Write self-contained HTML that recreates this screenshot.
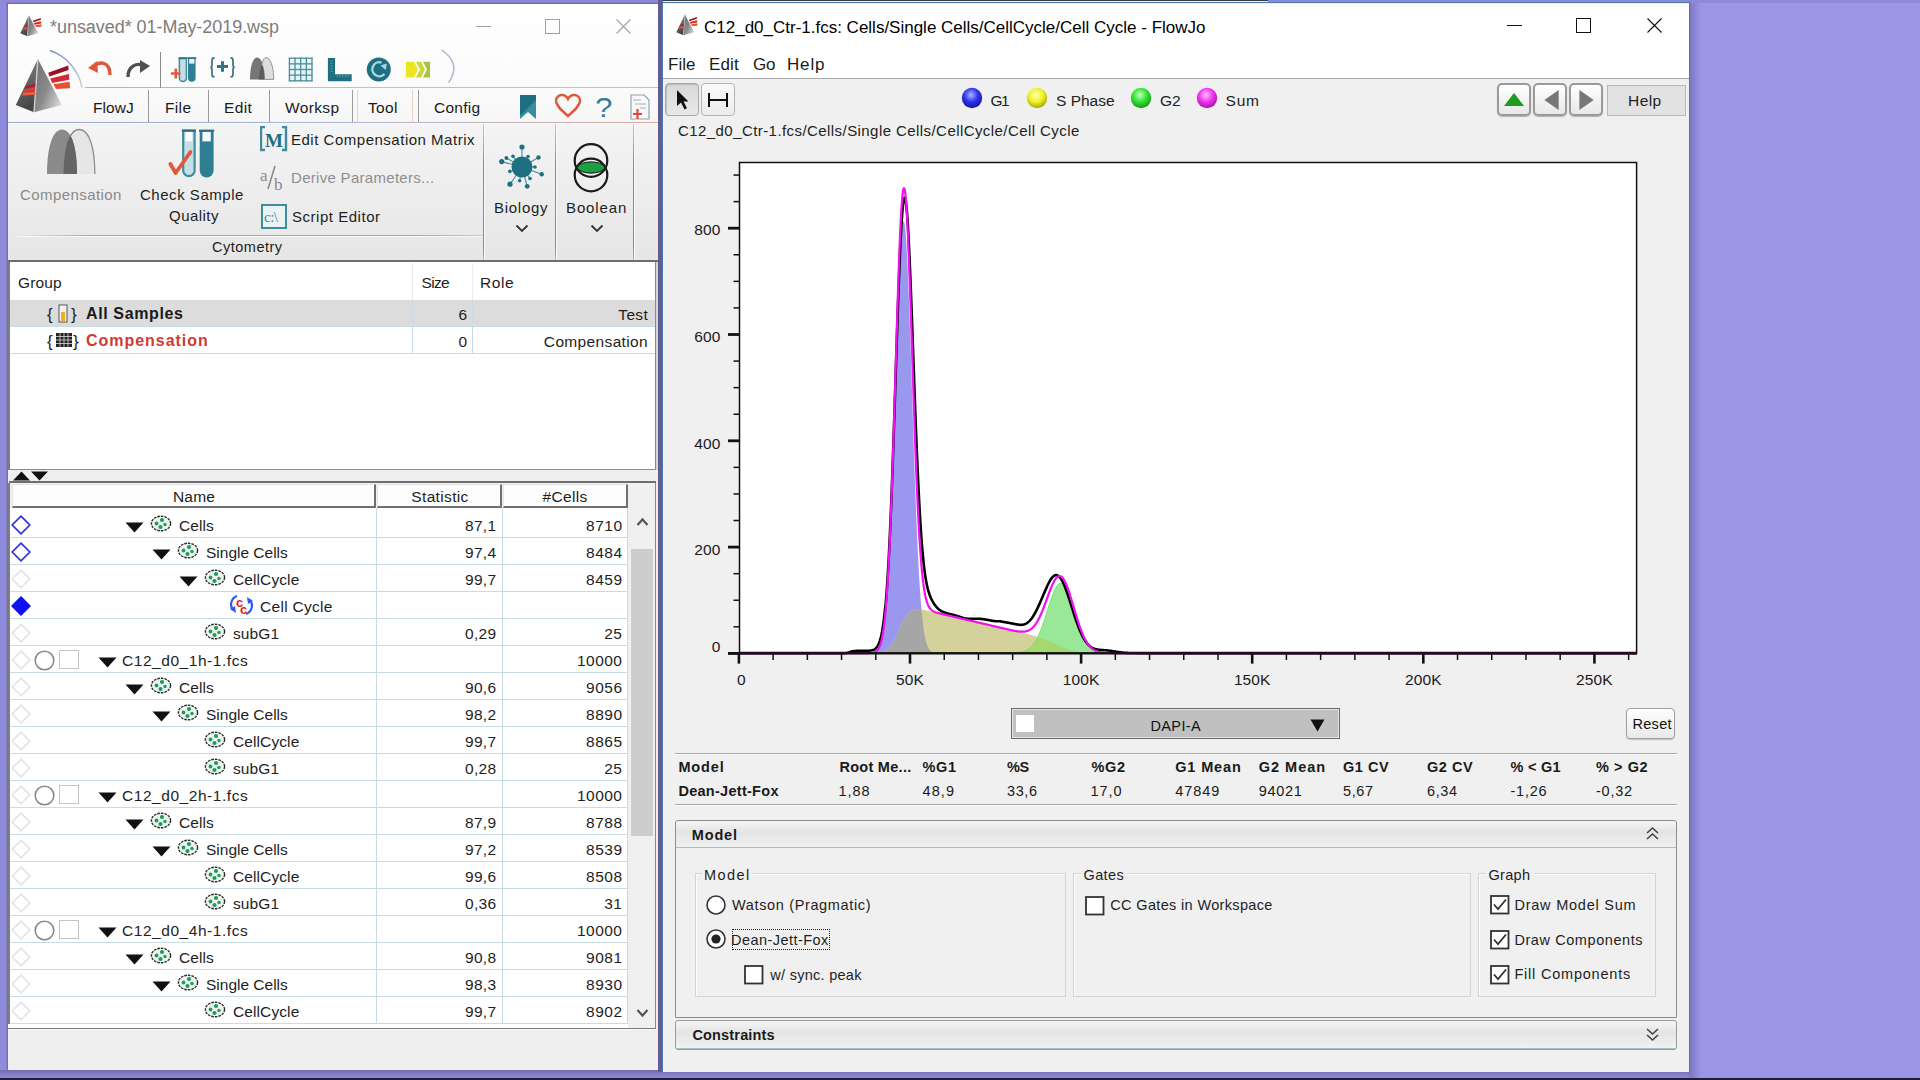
<!DOCTYPE html>
<html><head><meta charset="utf-8"><style>
html,body{margin:0;padding:0;}
body{width:1920px;height:1080px;overflow:hidden;position:relative;background:#9a95e5;font-family:"Liberation Sans", sans-serif;}
div,svg{position:absolute;box-sizing:border-box;}
.t{white-space:pre;}
</style></head><body>
<div style="left:0px;top:0px;width:1920px;height:1080px;background:#9a95e5;"></div><div style="left:0px;top:0px;width:700px;height:1080px;background:linear-gradient(90deg,#8f8bde,#8f8ad8);"></div><div style="left:0px;top:1070px;width:1700px;height:8px;background:linear-gradient(180deg,#746ab0,#8a82cc 70%,#8c86d4);"></div><div style="left:1689px;top:0px;width:12px;height:1078px;background:linear-gradient(90deg,#7b74c0,#9a95e5);"></div><div style="left:0px;top:1078px;width:1920px;height:2px;background:#1f1d3a;"></div><div style="left:0px;top:0px;width:1920px;height:3px;background:#8f88d4;"></div><div style="left:658px;top:0px;width:5px;height:1072px;background:#665a92;"></div><div style="left:6px;top:2px;width:2px;height:1068px;background:linear-gradient(90deg,#8a86d0,#6e6aa0);"></div><div style="left:6px;top:2px;width:652px;height:2px;background:linear-gradient(180deg,#8a86d0,#6e6aa0);"></div><div style="left:8px;top:4px;width:650px;height:1066px;background:#f0f0f0;"></div><div style="left:8px;top:4px;width:650px;height:84px;background:linear-gradient(180deg,#ffffff,#fbfbfb);"></div><svg style="left:19.8px;top:14.5px;" width="23" height="23" viewBox="0 0 23 23"><defs>
<linearGradient id="pl1" x1="0" y1="0" x2="0.3" y2="1"><stop offset="0" stop-color="#8a8a8a"/><stop offset="1" stop-color="#454545"/></linearGradient>
<linearGradient id="pr1" x1="0" y1="0" x2="1" y2="0.8"><stop offset="0" stop-color="#6e6e6e"/><stop offset="0.55" stop-color="#8a8a8a"/><stop offset="1" stop-color="#d8d8d8"/></linearGradient>
</defs><g transform="scale(0.39)">
<polygon points="22.9,1.1 0.8,47.1 19,54.2" fill="url(#pl1)"/>
<polygon points="22.9,1.1 19,54.2 46.8,47.1" fill="url(#pr1)"/>
<line x1="22.9" y1="1.1" x2="19" y2="54.2" stroke="#cfcfcf" stroke-width="1.4"/>
<polygon points="33.2,14.7 53.3,7.6 53.6,12.1 34.5,18.6" fill="#9a1420"/>
<polygon points="35.2,20.5 54,16 54.3,21.8 37.1,25" fill="#d42a34"/>
<polygon points="38.4,26.3 54.6,23.8 55,30.2 41,30.9" fill="#ea5030"/>
<polygon points="10.6,28.3 20.3,25.7 20.3,28.3 9.9,30.9" fill="#b01c28"/>
<polygon points="8.9,31.5 20.3,29.3 20.3,32.2 8.3,34.1" fill="#e03c3c"/>
<polygon points="7.6,34.8 20.3,33.5 20.3,36.7 7,37.4" fill="#ec5a40"/>
</g></svg><div class="t" style="top:18.26px;font-size:18px;line-height:18px;color:#7c7c7c;letter-spacing:-0.047px;left:50.00px;">*unsaved* 01-May-2019.wsp</div><div style="left:476px;top:26px;width:15px;height:1px;background:#a0a0a0;"></div><div style="left:545px;top:19px;width:15px;height:15px;border:1px solid #a0a0a0;"></div><svg style="left:616px;top:19px;" width="15" height="15" viewBox="0 0 15 15"><path d="M0.5 0.5 L14.5 14.5 M14.5 0.5 L0.5 14.5" stroke="#a0a0a0" stroke-width="1.1"/></svg><svg style="left:430px;top:45px;" width="40" height="45" viewBox="0 0 40 45"><path d="M11.7 4.8 Q32 19,18.6 37.5" fill="none" stroke="#b4bcd4" stroke-width="1.6"/></svg><div style="left:85px;top:87px;width:573px;height:1px;background:linear-gradient(90deg,#a8b4d0,#b8c0d8 40%,#d8b8b0);"></div><div style="left:160px;top:52px;width:1px;height:36px;background:#8a8a8a;"></div><svg style="left:86px;top:58px;" width="28" height="24" viewBox="0 0 28 24"><path d="M7 9 C14 2,24 4,24 17" fill="none" stroke="#e0583a" stroke-width="3.4"/><polygon points="2,10 11,3 12,15" fill="#e0583a"/></svg><svg style="left:124px;top:58px;" width="28" height="24" viewBox="0 0 28 24"><path d="M4 19 C4 8,13 4,20 8" fill="none" stroke="#505050" stroke-width="3.4"/><polygon points="26,8 16,2 16,15" fill="#505050"/></svg><svg style="left:165px;top:50px;" width="120" height="40" viewBox="0 0 120 40"><path d="M14.4 8.5 H21.4 V28 A3.5 3.5 0 0 1 14.4 28 Z" fill="#c4dde6" stroke="#3f8c9c" stroke-width="1.5"/>
<rect x="13.6" y="7.2" width="8.6" height="1.8" fill="#2f6f80"/>
<path d="M23 8.5 H30.6 V28 A3.8 3.8 0 0 1 23 28 Z" fill="#2f7f92"/>
<rect x="22.4" y="7.2" width="8.8" height="1.8" fill="#2f6f80"/>
<rect x="24.2" y="9" width="5.2" height="4.6" fill="#e6f4f6"/>
<path d="M6 23.5 H15.5 M10.8 18.5 V28.5" stroke="#e2583a" stroke-width="2.6"/>
<path d="M49.5 7.8 C47 7.8,47 9,47 12 V15.5 C47 17,46.2 17.2,45.4 17.3 C46.2 17.4,47 17.6,47 19 V23 C47 26,47 26.8,49.5 26.8" fill="none" stroke="#3a6e7c" stroke-width="1.7"/>
<path d="M65.5 7.8 C68 7.8,68 9,68 12 V15.5 C68 17,68.8 17.2,69.6 17.3 C68.8 17.4,68 17.6,68 19 V23 C68 26,68 26.8,65.5 26.8" fill="none" stroke="#3a6e7c" stroke-width="1.7"/>
<path d="M57.5 11.2 V21.8 M52 16.5 H63" stroke="#2a7888" stroke-width="3"/>
<path d="M85 29.4 C85 16,88 7.5,92.2 7.5 C96.5 7.5,99.5 16,99.4 29.4 Z" fill="#767676"/>
<path d="M96.9 14.5 C97.8 10,99.4 7.5,101 7.5 C105.5 7.5,108.6 17,108.8 29.4 L99.4 29.4 C99.4 22,98.4 17.5,96.9 14.5 Z" fill="#dedede" stroke="#8a8a8a" stroke-width="0.9"/>
<path d="M96.9 14.5 C98.4 17.5,99.4 22,99.4 29.4 L93.5 29.4 C94.5 22,95.5 17.5,96.9 14.5 Z" fill="#5c5c5c"/></svg><svg style="left:280px;top:50px;" width="160" height="40" viewBox="0 0 160 40"><rect x="9.4" y="8.2" width="22.6" height="22.6" fill="#e2f4f7"/><line x1="9.40" y1="7.6" x2="9.40" y2="31.4" stroke="#4f8e9a" stroke-width="1.3"/><line x1="8.8" y1="8.20" x2="32.6" y2="8.20" stroke="#4f8e9a" stroke-width="1.3"/><line x1="15.05" y1="7.6" x2="15.05" y2="31.4" stroke="#4f8e9a" stroke-width="1.3"/><line x1="8.8" y1="13.85" x2="32.6" y2="13.85" stroke="#4f8e9a" stroke-width="1.3"/><line x1="20.70" y1="7.6" x2="20.70" y2="31.4" stroke="#4f8e9a" stroke-width="1.3"/><line x1="8.8" y1="19.50" x2="32.6" y2="19.50" stroke="#4f8e9a" stroke-width="1.3"/><line x1="26.35" y1="7.6" x2="26.35" y2="31.4" stroke="#4f8e9a" stroke-width="1.3"/><line x1="8.8" y1="25.15" x2="32.6" y2="25.15" stroke="#4f8e9a" stroke-width="1.3"/><line x1="32.00" y1="7.6" x2="32.00" y2="31.4" stroke="#4f8e9a" stroke-width="1.3"/><line x1="8.8" y1="30.80" x2="32.6" y2="30.80" stroke="#4f8e9a" stroke-width="1.3"/><path d="M47.9 7.9 H55 V24.2 H71.7 V31.3 H47.9 Z" fill="#1f6f82"/><line x1="50.5" y1="11.0" x2="52.5" y2="11.0" stroke="#6fa8b6" stroke-width="0.8"/><line x1="57.0" y1="25.2" x2="57.0" y2="27.2" stroke="#6fa8b6" stroke-width="0.8"/><line x1="50.5" y1="13.6" x2="52.5" y2="13.6" stroke="#6fa8b6" stroke-width="0.8"/><line x1="59.8" y1="25.2" x2="59.8" y2="27.2" stroke="#6fa8b6" stroke-width="0.8"/><line x1="50.5" y1="16.2" x2="52.5" y2="16.2" stroke="#6fa8b6" stroke-width="0.8"/><line x1="62.6" y1="25.2" x2="62.6" y2="27.2" stroke="#6fa8b6" stroke-width="0.8"/><line x1="50.5" y1="18.8" x2="52.5" y2="18.8" stroke="#6fa8b6" stroke-width="0.8"/><line x1="65.4" y1="25.2" x2="65.4" y2="27.2" stroke="#6fa8b6" stroke-width="0.8"/><line x1="50.5" y1="21.4" x2="52.5" y2="21.4" stroke="#6fa8b6" stroke-width="0.8"/><line x1="68.2" y1="25.2" x2="68.2" y2="27.2" stroke="#6fa8b6" stroke-width="0.8"/><circle cx="98.8" cy="19.4" r="12" fill="#1f6f82"/><path d="M101.5 12.6 A7 7 0 1 0 104.5 24" fill="none" stroke="#a8d8e2" stroke-width="2.4"/><polygon points="100.5,15.5 106.8,13.5 105.8,20" fill="#a8d8e2"/><polygon points="125.8,11.7 134,11.7 138,19.6 134,27.5 125.8,27.5" fill="#ece620"/><polygon points="136,11.7 141,11.7 145,19.6 141,27.5 136,27.5 140,19.6" fill="#c8d838"/><polygon points="143,11.7 150,11.7 150,27.5 143,27.5 147,19.6" fill="#a4c43a"/></svg><div style="left:8px;top:88px;width:650px;height:35px;background:linear-gradient(180deg,#fbfbfb,#f6f6f6);"></div><div style="left:8px;top:122px;width:650px;height:1px;background:linear-gradient(90deg,#9aaad0,#a8b4d4 50%,#d8aaa0);"></div><div style="left:148px;top:90px;width:1px;height:32px;background:#9a9a9a;"></div><div style="left:208px;top:90px;width:1px;height:32px;background:#9a9a9a;"></div><div style="left:269px;top:90px;width:1px;height:32px;background:#9a9a9a;"></div><div style="left:352px;top:90px;width:1px;height:32px;background:#9a9a9a;"></div><div style="left:357px;top:90px;width:1px;height:32px;background:#e8d0c8;"></div><div style="left:412px;top:90px;width:1px;height:32px;background:#e8d0c8;"></div><div style="left:418px;top:90px;width:1px;height:32px;background:#9a9a9a;"></div><div class="t" style="top:99.88px;font-size:15.5px;line-height:15.5px;color:#1a1a1a;letter-spacing:0.069px;left:93.00px;">FlowJ</div><div class="t" style="top:99.88px;font-size:15.5px;line-height:15.5px;color:#1a1a1a;letter-spacing:0.35px;left:165.00px;">File</div><div class="t" style="top:99.88px;font-size:15.5px;line-height:15.5px;color:#1a1a1a;letter-spacing:0.35px;left:224.00px;">Edit</div><div class="t" style="top:99.88px;font-size:15.5px;line-height:15.5px;color:#1a1a1a;letter-spacing:0.35px;left:285.00px;">Worksp</div><div class="t" style="top:99.88px;font-size:15.5px;line-height:15.5px;color:#1a1a1a;letter-spacing:0.35px;left:368.00px;">Tool</div><div class="t" style="top:99.88px;font-size:15.5px;line-height:15.5px;color:#1a1a1a;letter-spacing:0.263px;left:434.00px;">Config</div><svg style="left:519px;top:94px;" width="18" height="26" viewBox="0 0 18 26"><path d="M1 1 H17 V25 L9 18 L1 25 Z" fill="#3a8e9c"/><path d="M1 1 H17 V6 L1 22 Z" fill="#1f6f82"/></svg><svg style="left:554px;top:93px;" width="28" height="26" viewBox="0 0 28 26"><path d="M14 23 C6 16,2 12,2 8 C2 4,5 2,8 2 C11 2,13 4,14 6 C15 4,17 2,20 2 C23 2,26 4,26 8 C26 12,22 16,14 23 Z" fill="none" stroke="#e0583a" stroke-width="2.4"/></svg><div class="t" style="top:94.30px;font-size:28px;line-height:28px;color:#2f7f92;left:596.00px;transform:scaleX(1.1);">?</div><svg style="left:629px;top:94px;" width="22" height="27" viewBox="0 0 22 27"><path d="M2 1 H15 L20 6 V25 H2 Z" fill="#f8f8f8" stroke="#8aa8b0" stroke-width="1.2"/><path d="M4 6 H12 M6 10 H17 M11 14 H17" stroke="#a0b4b8" stroke-width="1"/><path d="M4 20 H13 M8.5 15 V25" stroke="#e0483a" stroke-width="2.2"/></svg><svg style="left:0px;top:40px;" width="100" height="60" viewBox="0 0 100 60"><defs><linearGradient id="arcg" x1="0" y1="0" x2="1" y2="1"><stop offset="0" stop-color="#7888b8"/><stop offset="1" stop-color="#c8d0e4"/></linearGradient></defs><path d="M50 10.6 A48.2 48.2 0 0 1 82 47.5" fill="none" stroke="url(#arcg)" stroke-width="1.6"/></svg><svg style="left:15px;top:58px;" width="58" height="58" viewBox="0 0 58 58"><defs>
<linearGradient id="pl2" x1="0" y1="0" x2="0.3" y2="1"><stop offset="0" stop-color="#8a8a8a"/><stop offset="1" stop-color="#454545"/></linearGradient>
<linearGradient id="pr2" x1="0" y1="0" x2="1" y2="0.8"><stop offset="0" stop-color="#6e6e6e"/><stop offset="0.55" stop-color="#8a8a8a"/><stop offset="1" stop-color="#d8d8d8"/></linearGradient>
</defs><g transform="scale(1.0)">
<polygon points="22.9,1.1 0.8,47.1 19,54.2" fill="url(#pl2)"/>
<polygon points="22.9,1.1 19,54.2 46.8,47.1" fill="url(#pr2)"/>
<line x1="22.9" y1="1.1" x2="19" y2="54.2" stroke="#cfcfcf" stroke-width="1.4"/>
<polygon points="33.2,14.7 53.3,7.6 53.6,12.1 34.5,18.6" fill="#9a1420"/>
<polygon points="35.2,20.5 54,16 54.3,21.8 37.1,25" fill="#d42a34"/>
<polygon points="38.4,26.3 54.6,23.8 55,30.2 41,30.9" fill="#ea5030"/>
<polygon points="10.6,28.3 20.3,25.7 20.3,28.3 9.9,30.9" fill="#b01c28"/>
<polygon points="8.9,31.5 20.3,29.3 20.3,32.2 8.3,34.1" fill="#e03c3c"/>
<polygon points="7.6,34.8 20.3,33.5 20.3,36.7 7,37.4" fill="#ec5a40"/>
</g></svg><div style="left:8px;top:123px;width:650px;height:137px;background:linear-gradient(180deg,#f4f4f4 0%,#ececec 60%,#e6e6e6 100%);"></div><div style="left:8px;top:123px;width:650px;height:1px;background:#ffffff;"></div><div style="left:18px;top:235px;width:465px;height:1px;background:linear-gradient(90deg,rgba(160,160,170,0),#a8a8b4 15%,#a8a8b4 85%,#c8c8d0);"></div><div style="left:18px;top:236px;width:465px;height:1px;background:#f8f8f8;"></div><div style="left:483px;top:124px;width:1px;height:136px;background:linear-gradient(180deg,#c8c8c8,#8a8a8a 30%,#8a8a8a 90%,#b0b0b0);"></div><div style="left:484px;top:124px;width:1px;height:136px;background:#fafafa;"></div><div style="left:555px;top:124px;width:1px;height:136px;background:linear-gradient(180deg,#c8c8c8,#8a8a8a 30%,#8a8a8a 90%,#b0b0b0);"></div><div style="left:556px;top:124px;width:1px;height:136px;background:#fafafa;"></div><div style="left:633px;top:124px;width:1px;height:136px;background:linear-gradient(180deg,#c8c8c8,#8a8a8a 30%,#8a8a8a 90%,#b0b0b0);"></div><div style="left:634px;top:124px;width:1px;height:136px;background:#fafafa;"></div><div style="left:8px;top:260px;width:650px;height:2px;background:#6e6e6e;"></div><svg style="left:44px;top:127px;" width="54" height="50" viewBox="0 0 54 50"><defs><clipPath id="cpl"><path d="M3 47 C3 22,8 2.5,18 2.5 C28 2.5,33 22,33 47 Z"/></clipPath></defs>
<path d="M19.6 47 C19.6 22,24.6 2.5,35.2 2.5 C45.8 2.5,50.8 22,50.8 47 Z" fill="#e6e6e6"/><path d="M19.6 47 C19.6 22,24.6 2.5,35.2 2.5 C45.8 2.5,50.8 22,50.8 47" fill="none" stroke="#8c8c8c" stroke-width="1.3"/>
<path d="M3 47 C3 22,8 2.5,18 2.5 C28 2.5,33 22,33 47 Z" fill="#8a8a8a"/>
<path d="M19.6 47 C19.6 22,24.6 2.5,35.2 2.5 C45.8 2.5,50.8 22,50.8 47 Z" fill="#646464" clip-path="url(#cpl)"/></svg><div class="t" style="top:187.30px;font-size:15px;line-height:15px;color:#8a8a8a;letter-spacing:0.42px;left:20.00px;">Compensation</div><svg style="left:166px;top:126px;" width="52" height="54" viewBox="0 0 52 54"><path d="M17.2 4.6 H28.6 V44.5 A5.7 5.7 0 0 1 17.2 44.5 Z" fill="#c6dfe6" stroke="#3f8c9c" stroke-width="2.2"/>
<rect x="19.5" y="5.5" width="6.8" height="9.8" fill="#ffffff"/>
<rect x="15.8" y="3.6" width="14.2" height="2.2" fill="#2f6f80"/>
<path d="M33.7 4.6 H47.6 V44.5 A6.95 6.95 0 0 1 33.7 44.5 Z" fill="#2f7f92"/>
<rect x="36.4" y="5.6" width="8.4" height="9.8" fill="#f4fafb"/>
<rect x="33" y="3.6" width="15.2" height="2.2" fill="#2f6f80"/>
<path d="M4.4 38 L9.6 47 L24.5 26" fill="none" stroke="#e0583a" stroke-width="3.8" stroke-linecap="round" stroke-linejoin="round"/></svg><div class="t" style="top:187.30px;font-size:15px;line-height:15px;color:#1e1e1e;letter-spacing:0.527px;left:140.00px;">Check Sample</div><div class="t" style="top:208.30px;font-size:15px;line-height:15px;color:#1e1e1e;letter-spacing:0.469px;left:169.00px;">Quality</div><svg style="left:260px;top:126px;" width="28" height="26" viewBox="0 0 28 26"><path d="M5 1 H1 V24 H5" fill="none" stroke="#3f8c9c" stroke-width="2.4"/><path d="M22 1 H26 V24 H22" fill="none" stroke="#3f8c9c" stroke-width="2.4"/></svg><div class="t" style="top:130.92px;font-size:19px;line-height:19px;color:#1f6f82;font-weight:700;left:265.00px;font-family:'Liberation Serif',serif;">M</div><div class="t" style="top:166.61px;font-size:17px;line-height:17px;color:#8a8a8a;left:260.00px;font-family:'Liberation Serif',serif;">a</div><svg style="left:265px;top:164px;" width="14" height="28" viewBox="0 0 14 28"><line x1="10" y1="2" x2="3" y2="25" stroke="#8a8a8a" stroke-width="1.6"/></svg><div class="t" style="top:175.61px;font-size:17px;line-height:17px;color:#8a8a8a;left:274.00px;font-family:'Liberation Serif',serif;">b</div><div style="left:261px;top:204px;width:26px;height:25px;border:2px solid #3f8c9c;background:#eaf2f3;"></div><div class="t" style="top:210.30px;font-size:15px;line-height:15px;color:#3f8c9c;letter-spacing:-0.5px;left:264.00px;font-family:'Liberation Serif',serif;">c:\</div><div class="t" style="top:132.30px;font-size:15px;line-height:15px;color:#1e1e1e;letter-spacing:0.511px;left:291.00px;">Edit Compensation Matrix</div><div class="t" style="top:170.30px;font-size:15px;line-height:15px;color:#8e8e8e;letter-spacing:0.296px;left:291.00px;">Derive Parameters...</div><div class="t" style="top:209.30px;font-size:15px;line-height:15px;color:#1e1e1e;letter-spacing:0.525px;left:292.00px;">Script Editor</div><div class="t" style="top:240.13px;font-size:14.5px;line-height:14.5px;color:#1e1e1e;letter-spacing:0.498px;left:212.00px;">Cytometry</div><svg style="left:497px;top:143px;" width="50" height="50" viewBox="0 0 50 50"><line x1="25" y1="24" x2="25.0" y2="4.0" stroke="#3f8c9c" stroke-width="1.1"/><circle cx="25.0" cy="4.0" r="2.6" fill="#1f6f82"/><line x1="25" y1="24" x2="31.0" y2="13.6" stroke="#3f8c9c" stroke-width="1.1"/><circle cx="31.0" cy="13.6" r="1.8" fill="#1f6f82"/><line x1="25" y1="24" x2="41.5" y2="14.5" stroke="#3f8c9c" stroke-width="1.1"/><circle cx="41.5" cy="14.5" r="2.2" fill="#1f6f82"/><line x1="25" y1="24" x2="38.0" y2="24.0" stroke="#3f8c9c" stroke-width="1.1"/><circle cx="38.0" cy="24.0" r="1.8" fill="#1f6f82"/><line x1="25" y1="24" x2="44.7" y2="31.2" stroke="#3f8c9c" stroke-width="1.1"/><circle cx="44.7" cy="31.2" r="2.2" fill="#1f6f82"/><line x1="25" y1="24" x2="33.0" y2="35.5" stroke="#3f8c9c" stroke-width="1.1"/><circle cx="33.0" cy="35.5" r="1.8" fill="#1f6f82"/><line x1="25" y1="24" x2="30.2" y2="43.3" stroke="#3f8c9c" stroke-width="1.1"/><circle cx="30.2" cy="43.3" r="2.4" fill="#1f6f82"/><line x1="25" y1="24" x2="22.6" y2="37.8" stroke="#3f8c9c" stroke-width="1.1"/><circle cx="22.6" cy="37.8" r="1.8" fill="#1f6f82"/><line x1="25" y1="24" x2="13.0" y2="41.2" stroke="#3f8c9c" stroke-width="1.1"/><circle cx="13.0" cy="41.2" r="2.6" fill="#1f6f82"/><line x1="25" y1="24" x2="12.8" y2="28.4" stroke="#3f8c9c" stroke-width="1.1"/><circle cx="12.8" cy="28.4" r="1.8" fill="#1f6f82"/><line x1="25" y1="24" x2="4.7" y2="18.6" stroke="#3f8c9c" stroke-width="1.1"/><circle cx="4.7" cy="18.6" r="2.6" fill="#1f6f82"/><line x1="25" y1="24" x2="16.0" y2="13.3" stroke="#3f8c9c" stroke-width="1.1"/><circle cx="16.0" cy="13.3" r="1.8" fill="#1f6f82"/><line x1="25" y1="24" x2="9.4" y2="15.0" stroke="#3f8c9c" stroke-width="1.1"/><circle cx="9.4" cy="15.0" r="2.0" fill="#1f6f82"/><circle cx="25" cy="24" r="10.5" fill="#1f6f82"/></svg><div class="t" style="top:200.30px;font-size:15px;line-height:15px;color:#1e1e1e;letter-spacing:0.717px;left:494.00px;">Biology</div><svg style="left:515px;top:224px;" width="14" height="9" viewBox="0 0 14 9"><path d="M1.5 1.5 L7 7 L12.5 1.5" fill="none" stroke="#333" stroke-width="1.8"/></svg><svg style="left:571px;top:141px;" width="40" height="55" viewBox="0 0 40 55"><path d="M5 26.5 C11 19,29 19,35 26.5 C29 34,11 34,5 26.5 Z" fill="#1aa040" stroke="#111" stroke-width="1"/>
<circle cx="20" cy="19.5" r="16.3" fill="none" stroke="#1a1a1a" stroke-width="2.2"/>
<circle cx="20" cy="34" r="16.3" fill="none" stroke="#1a1a1a" stroke-width="2.2"/></svg><div class="t" style="top:200.30px;font-size:15px;line-height:15px;color:#1e1e1e;letter-spacing:0.882px;left:566.00px;">Boolean</div><svg style="left:590px;top:224px;" width="14" height="9" viewBox="0 0 14 9"><path d="M1.5 1.5 L7 7 L12.5 1.5" fill="none" stroke="#333" stroke-width="1.8"/></svg><div style="left:8px;top:262px;width:650px;height:208px;background:#f0f0f0;"></div><div style="left:8px;top:262px;width:648px;height:208px;background:#ffffff;border-left:2px solid #7c7c7c;border-right:1px solid #8a8a8a;border-bottom:1px solid #8a8a8a;"></div><div style="left:656px;top:262px;width:2px;height:208px;background:#d0d6d6;"></div><div style="left:412px;top:263px;width:1px;height:37px;background:#ececec;"></div><div style="left:472px;top:263px;width:1px;height:37px;background:#ececec;"></div><div class="t" style="top:274.88px;font-size:15.5px;line-height:15.5px;color:#1e1e1e;letter-spacing:0.135px;left:18.00px;">Group</div><div class="t" style="top:274.88px;font-size:15.5px;line-height:15.5px;color:#1e1e1e;letter-spacing:-0.677px;left:421.50px;">Size</div><div class="t" style="top:274.88px;font-size:15.5px;line-height:15.5px;color:#1e1e1e;letter-spacing:0.581px;left:480.00px;">Role</div><div style="left:10px;top:300px;width:645px;height:27px;background:#dcdcdc;"></div><div style="left:10px;top:326px;width:645px;height:1px;background:#c8dce6;"></div><div style="left:10px;top:353px;width:645px;height:1px;background:#c8dce6;"></div><div style="left:412px;top:300px;width:1px;height:54px;background:#c8dce6;"></div><div style="left:472px;top:300px;width:1px;height:54px;background:#c8dce6;"></div><div class="t" style="top:305.61px;font-size:17px;line-height:17px;color:#1e1e1e;left:47.00px;">{</div><div class="t" style="top:305.61px;font-size:17px;line-height:17px;color:#1e1e1e;left:71.00px;">}</div><svg style="left:57px;top:304px;" width="12" height="19" viewBox="0 0 12 19"><rect x="2" y="1" width="8" height="17" fill="#f4f4f4" stroke="#555" stroke-width="1"/><rect x="4" y="8" width="4" height="9" fill="#f0b020"/></svg><div class="t" style="top:332.61px;font-size:17px;line-height:17px;color:#1e1e1e;left:47.00px;">{</div><div class="t" style="top:332.61px;font-size:17px;line-height:17px;color:#1e1e1e;left:73.00px;">}</div><svg style="left:55px;top:332px;" width="18" height="16" viewBox="0 0 18 16"><rect x="1" y="1" width="16" height="14" fill="#222"/><line x1="5" y1="1" x2="5" y2="15" stroke="#ddd" stroke-width="0.8"/><line x1="9" y1="1" x2="9" y2="15" stroke="#ddd" stroke-width="0.8"/><line x1="13" y1="1" x2="13" y2="15" stroke="#ddd" stroke-width="0.8"/><line x1="1" y1="4.5" x2="17" y2="4.5" stroke="#ddd" stroke-width="0.8"/><line x1="1" y1="8.0" x2="17" y2="8.0" stroke="#ddd" stroke-width="0.8"/><line x1="1" y1="11.5" x2="17" y2="11.5" stroke="#ddd" stroke-width="0.8"/></svg><div class="t" style="top:306.46px;font-size:16px;line-height:16px;color:#1a1a1a;font-weight:700;letter-spacing:0.62px;left:86.00px;">All Samples</div><div class="t" style="top:333.46px;font-size:16px;line-height:16px;color:#d03a32;font-weight:700;letter-spacing:0.969px;left:86.00px;">Compensation</div><div class="t" style="top:306.88px;font-size:15.5px;line-height:15.5px;color:#1e1e1e;right:1453.00px;">6</div><div class="t" style="top:306.88px;font-size:15.5px;line-height:15.5px;color:#1e1e1e;letter-spacing:0.3px;right:1272.00px;">Test</div><div class="t" style="top:333.88px;font-size:15.5px;line-height:15.5px;color:#1e1e1e;right:1453.00px;">0</div><div class="t" style="top:333.88px;font-size:15.5px;line-height:15.5px;color:#1e1e1e;letter-spacing:0.35px;right:1272.00px;">Compensation</div><div style="left:9px;top:470px;width:647px;height:12px;background:#efefef;"></div><svg style="left:12px;top:470px;" width="38" height="12" viewBox="0 0 38 12"><polygon points="1,10.5 9.5,1.5 18,10.5" fill="#111"/><polygon points="19,1.5 36,1.5 27.5,10.5" fill="#111"/></svg><div style="left:9px;top:481px;width:647px;height:2px;background:#6e6e6e;"></div><div style="left:8px;top:483px;width:648px;height:547px;background:#ffffff;border-left:2px solid #7c7c7c;"></div><div style="left:10px;top:483px;width:618px;height:25px;background:#f0f0f0;"></div><div style="left:12px;top:484px;width:364px;height:24px;background:#fdfdfd;border-top:1px solid #e4e4e4;border-left:1px solid #e4e4e4;border-right:2px solid #707070;border-bottom:2px solid #707070;"></div><div style="left:377px;top:484px;width:125px;height:24px;background:#fdfdfd;border-top:1px solid #e4e4e4;border-left:1px solid #e4e4e4;border-right:2px solid #707070;border-bottom:2px solid #707070;"></div><div style="left:503px;top:484px;width:125px;height:24px;background:#fdfdfd;border-top:1px solid #e4e4e4;border-left:1px solid #e4e4e4;border-right:2px solid #707070;border-bottom:2px solid #707070;"></div><div class="t" style="top:489.38px;font-size:15.5px;line-height:15.5px;color:#1e1e1e;letter-spacing:0.2px;left:94.00px;width:200px;text-align:center;">Name</div><div class="t" style="top:489.38px;font-size:15.5px;line-height:15.5px;color:#1e1e1e;letter-spacing:0.35px;left:340.00px;width:200px;text-align:center;">Statistic</div><div class="t" style="top:489.38px;font-size:15.5px;line-height:15.5px;color:#1e1e1e;letter-spacing:0.35px;left:465.00px;width:200px;text-align:center;">#Cells</div><div style="left:628px;top:483px;width:28px;height:547px;background:#f0f0f0;border-right:1px solid #8a8a8a;"></div><div style="left:631px;top:548.5px;width:22px;height:287.5px;background:#cdcdcd;"></div><svg style="left:636px;top:517px;" width="13" height="10" viewBox="0 0 13 10"><path d="M1.5 8 L6.5 2.5 L11.5 8" fill="none" stroke="#555" stroke-width="2.2"/></svg><svg style="left:636px;top:1008px;" width="13" height="10" viewBox="0 0 13 10"><path d="M1.5 2 L6.5 7.5 L11.5 2" fill="none" stroke="#555" stroke-width="2.2"/></svg><div style="left:10px;top:537px;width:618px;height:1px;background:#c8dce6;"></div><svg style="left:10.5px;top:514.5px;" width="20" height="20" viewBox="0 0 20 20"><polygon points="10,1.2 18.8,10 10,18.8 1.2,10" fill="none" stroke="#3030e8" stroke-width="1.7"/></svg><svg style="left:125px;top:521.5px;" width="19" height="11" viewBox="0 0 19 11"><polygon points="0.5,0.5 18.5,0.5 9.5,10.5" fill="#111"/></svg><svg style="left:150px;top:514.5px;" width="22" height="17" viewBox="0 0 22 17"><ellipse cx="11" cy="8.5" rx="9.6" ry="7.3" fill="#eef6f0" stroke="#2a2a2a" stroke-width="1.4" stroke-dasharray="2.6 1"/>
<circle cx="6.5" cy="8.5" r="1.9" fill="#1f9a5a"/><circle cx="12" cy="5" r="2.1" fill="#1f9a5a"/><circle cx="15" cy="9.5" r="1.7" fill="#1f9a5a"/><circle cx="10.5" cy="12" r="2.1" fill="#1f9a5a"/></svg><div class="t" style="top:517.88px;font-size:15.5px;line-height:15.5px;color:#1e1e1e;letter-spacing:0.1px;left:179.00px;">Cells</div><div class="t" style="top:517.88px;font-size:15.5px;line-height:15.5px;color:#1e1e1e;letter-spacing:0.35px;right:1423.50px;">87,1</div><div class="t" style="top:517.88px;font-size:15.5px;line-height:15.5px;color:#1e1e1e;letter-spacing:0.5px;right:1297.50px;">8710</div><div style="left:10px;top:564px;width:618px;height:1px;background:#c8dce6;"></div><svg style="left:10.5px;top:541.5px;" width="20" height="20" viewBox="0 0 20 20"><polygon points="10,1.2 18.8,10 10,18.8 1.2,10" fill="none" stroke="#3030e8" stroke-width="1.7"/></svg><svg style="left:152px;top:548.5px;" width="19" height="11" viewBox="0 0 19 11"><polygon points="0.5,0.5 18.5,0.5 9.5,10.5" fill="#111"/></svg><svg style="left:177px;top:541.5px;" width="22" height="17" viewBox="0 0 22 17"><ellipse cx="11" cy="8.5" rx="9.6" ry="7.3" fill="#eef6f0" stroke="#2a2a2a" stroke-width="1.4" stroke-dasharray="2.6 1"/>
<circle cx="6.5" cy="8.5" r="1.9" fill="#1f9a5a"/><circle cx="12" cy="5" r="2.1" fill="#1f9a5a"/><circle cx="15" cy="9.5" r="1.7" fill="#1f9a5a"/><circle cx="10.5" cy="12" r="2.1" fill="#1f9a5a"/></svg><div class="t" style="top:544.88px;font-size:15.5px;line-height:15.5px;color:#1e1e1e;letter-spacing:-0.009px;left:206.00px;">Single Cells</div><div class="t" style="top:544.88px;font-size:15.5px;line-height:15.5px;color:#1e1e1e;letter-spacing:0.35px;right:1423.50px;">97,4</div><div class="t" style="top:544.88px;font-size:15.5px;line-height:15.5px;color:#1e1e1e;letter-spacing:0.5px;right:1297.50px;">8484</div><div style="left:10px;top:591px;width:618px;height:1px;background:#c8dce6;"></div><svg style="left:10.5px;top:568.5px;" width="20" height="20" viewBox="0 0 20 20"><polygon points="10,1.2 18.8,10 10,18.8 1.2,10" fill="none" stroke="#e4e4e4" stroke-width="1.7"/></svg><svg style="left:179px;top:575.5px;" width="19" height="11" viewBox="0 0 19 11"><polygon points="0.5,0.5 18.5,0.5 9.5,10.5" fill="#111"/></svg><svg style="left:204px;top:568.5px;" width="22" height="17" viewBox="0 0 22 17"><ellipse cx="11" cy="8.5" rx="9.6" ry="7.3" fill="#eef6f0" stroke="#2a2a2a" stroke-width="1.4" stroke-dasharray="2.6 1"/>
<circle cx="6.5" cy="8.5" r="1.9" fill="#1f9a5a"/><circle cx="12" cy="5" r="2.1" fill="#1f9a5a"/><circle cx="15" cy="9.5" r="1.7" fill="#1f9a5a"/><circle cx="10.5" cy="12" r="2.1" fill="#1f9a5a"/></svg><div class="t" style="top:571.88px;font-size:15.5px;line-height:15.5px;color:#1e1e1e;letter-spacing:0.1px;left:233.00px;">CellCycle</div><div class="t" style="top:571.88px;font-size:15.5px;line-height:15.5px;color:#1e1e1e;letter-spacing:0.35px;right:1423.50px;">99,7</div><div class="t" style="top:571.88px;font-size:15.5px;line-height:15.5px;color:#1e1e1e;letter-spacing:0.5px;right:1297.50px;">8459</div><div style="left:10px;top:618px;width:618px;height:1px;background:#c8dce6;"></div><svg style="left:10.5px;top:595.5px;" width="20" height="20" viewBox="0 0 20 20"><polygon points="10,1.2 18.8,10 10,18.8 1.2,10" fill="#1010f0" stroke="#1010f0" stroke-width="1.7"/></svg><svg style="left:229.0px;top:592.5px;" width="26" height="24" viewBox="0 0 26 24"><path d="M8 3 A9 9 0 0 0 4 17" fill="none" stroke="#2a5af0" stroke-width="2.2"/><polygon points="1,16 7,20 6,13" fill="#2a5af0"/>
<path d="M17 21 A9 9 0 0 0 21 7" fill="none" stroke="#2a5af0" stroke-width="2.2"/><polygon points="24,8 18,4 19,11" fill="#2a5af0"/></svg><div class="t" style="top:595.50px;font-size:13px;line-height:13px;color:#e02020;font-weight:700;left:236.00px;">c</div><div class="t" style="top:602.50px;font-size:13px;line-height:13px;color:#e02020;font-weight:700;left:240.00px;">c</div><div class="t" style="top:598.88px;font-size:15.5px;line-height:15.5px;color:#1e1e1e;letter-spacing:0.3px;left:260.00px;">Cell Cycle</div><div style="left:10px;top:645px;width:618px;height:1px;background:#c8dce6;"></div><svg style="left:10.5px;top:622.5px;" width="20" height="20" viewBox="0 0 20 20"><polygon points="10,1.2 18.8,10 10,18.8 1.2,10" fill="none" stroke="#e4e4e4" stroke-width="1.7"/></svg><svg style="left:204px;top:622.5px;" width="22" height="17" viewBox="0 0 22 17"><ellipse cx="11" cy="8.5" rx="9.6" ry="7.3" fill="#eef6f0" stroke="#2a2a2a" stroke-width="1.4" stroke-dasharray="2.6 1"/>
<circle cx="6.5" cy="8.5" r="1.9" fill="#1f9a5a"/><circle cx="12" cy="5" r="2.1" fill="#1f9a5a"/><circle cx="15" cy="9.5" r="1.7" fill="#1f9a5a"/><circle cx="10.5" cy="12" r="2.1" fill="#1f9a5a"/></svg><div class="t" style="top:625.88px;font-size:15.5px;line-height:15.5px;color:#1e1e1e;letter-spacing:0.1px;left:233.00px;">subG1</div><div class="t" style="top:625.88px;font-size:15.5px;line-height:15.5px;color:#1e1e1e;letter-spacing:0.35px;right:1423.50px;">0,29</div><div class="t" style="top:625.88px;font-size:15.5px;line-height:15.5px;color:#1e1e1e;letter-spacing:0.5px;right:1297.50px;">25</div><div style="left:10px;top:672px;width:618px;height:1px;background:#c8dce6;"></div><svg style="left:10.5px;top:649.5px;" width="20" height="20" viewBox="0 0 20 20"><polygon points="10,1.2 18.8,10 10,18.8 1.2,10" fill="none" stroke="#e4e4e4" stroke-width="1.7"/></svg><svg style="left:34px;top:649.5px;" width="21" height="21" viewBox="0 0 21 21"><circle cx="10.5" cy="10.5" r="9.3" fill="#fff" stroke="#8a8a8a" stroke-width="1.6"/></svg><div style="left:59px;top:650px;width:20px;height:19px;border:1.5px solid #c4c4c4;"></div><div class="t" style="top:652.88px;font-size:15.5px;line-height:15.5px;color:#1e1e1e;letter-spacing:0.55px;left:122.00px;">C12_d0_1h-1.fcs</div><svg style="left:98px;top:656.5px;" width="19" height="11" viewBox="0 0 19 11"><polygon points="0.5,0.5 18.5,0.5 9.5,10.5" fill="#111"/></svg><div class="t" style="top:652.88px;font-size:15.5px;line-height:15.5px;color:#1e1e1e;letter-spacing:0.5px;right:1297.50px;">10000</div><div style="left:10px;top:699px;width:618px;height:1px;background:#c8dce6;"></div><svg style="left:10.5px;top:676.5px;" width="20" height="20" viewBox="0 0 20 20"><polygon points="10,1.2 18.8,10 10,18.8 1.2,10" fill="none" stroke="#e4e4e4" stroke-width="1.7"/></svg><svg style="left:125px;top:683.5px;" width="19" height="11" viewBox="0 0 19 11"><polygon points="0.5,0.5 18.5,0.5 9.5,10.5" fill="#111"/></svg><svg style="left:150px;top:676.5px;" width="22" height="17" viewBox="0 0 22 17"><ellipse cx="11" cy="8.5" rx="9.6" ry="7.3" fill="#eef6f0" stroke="#2a2a2a" stroke-width="1.4" stroke-dasharray="2.6 1"/>
<circle cx="6.5" cy="8.5" r="1.9" fill="#1f9a5a"/><circle cx="12" cy="5" r="2.1" fill="#1f9a5a"/><circle cx="15" cy="9.5" r="1.7" fill="#1f9a5a"/><circle cx="10.5" cy="12" r="2.1" fill="#1f9a5a"/></svg><div class="t" style="top:679.88px;font-size:15.5px;line-height:15.5px;color:#1e1e1e;letter-spacing:0.1px;left:179.00px;">Cells</div><div class="t" style="top:679.88px;font-size:15.5px;line-height:15.5px;color:#1e1e1e;letter-spacing:0.35px;right:1423.50px;">90,6</div><div class="t" style="top:679.88px;font-size:15.5px;line-height:15.5px;color:#1e1e1e;letter-spacing:0.5px;right:1297.50px;">9056</div><div style="left:10px;top:726px;width:618px;height:1px;background:#c8dce6;"></div><svg style="left:10.5px;top:703.5px;" width="20" height="20" viewBox="0 0 20 20"><polygon points="10,1.2 18.8,10 10,18.8 1.2,10" fill="none" stroke="#e4e4e4" stroke-width="1.7"/></svg><svg style="left:152px;top:710.5px;" width="19" height="11" viewBox="0 0 19 11"><polygon points="0.5,0.5 18.5,0.5 9.5,10.5" fill="#111"/></svg><svg style="left:177px;top:703.5px;" width="22" height="17" viewBox="0 0 22 17"><ellipse cx="11" cy="8.5" rx="9.6" ry="7.3" fill="#eef6f0" stroke="#2a2a2a" stroke-width="1.4" stroke-dasharray="2.6 1"/>
<circle cx="6.5" cy="8.5" r="1.9" fill="#1f9a5a"/><circle cx="12" cy="5" r="2.1" fill="#1f9a5a"/><circle cx="15" cy="9.5" r="1.7" fill="#1f9a5a"/><circle cx="10.5" cy="12" r="2.1" fill="#1f9a5a"/></svg><div class="t" style="top:706.88px;font-size:15.5px;line-height:15.5px;color:#1e1e1e;letter-spacing:-0.009px;left:206.00px;">Single Cells</div><div class="t" style="top:706.88px;font-size:15.5px;line-height:15.5px;color:#1e1e1e;letter-spacing:0.35px;right:1423.50px;">98,2</div><div class="t" style="top:706.88px;font-size:15.5px;line-height:15.5px;color:#1e1e1e;letter-spacing:0.5px;right:1297.50px;">8890</div><div style="left:10px;top:753px;width:618px;height:1px;background:#c8dce6;"></div><svg style="left:10.5px;top:730.5px;" width="20" height="20" viewBox="0 0 20 20"><polygon points="10,1.2 18.8,10 10,18.8 1.2,10" fill="none" stroke="#e4e4e4" stroke-width="1.7"/></svg><svg style="left:204px;top:730.5px;" width="22" height="17" viewBox="0 0 22 17"><ellipse cx="11" cy="8.5" rx="9.6" ry="7.3" fill="#eef6f0" stroke="#2a2a2a" stroke-width="1.4" stroke-dasharray="2.6 1"/>
<circle cx="6.5" cy="8.5" r="1.9" fill="#1f9a5a"/><circle cx="12" cy="5" r="2.1" fill="#1f9a5a"/><circle cx="15" cy="9.5" r="1.7" fill="#1f9a5a"/><circle cx="10.5" cy="12" r="2.1" fill="#1f9a5a"/></svg><div class="t" style="top:733.88px;font-size:15.5px;line-height:15.5px;color:#1e1e1e;letter-spacing:0.1px;left:233.00px;">CellCycle</div><div class="t" style="top:733.88px;font-size:15.5px;line-height:15.5px;color:#1e1e1e;letter-spacing:0.35px;right:1423.50px;">99,7</div><div class="t" style="top:733.88px;font-size:15.5px;line-height:15.5px;color:#1e1e1e;letter-spacing:0.5px;right:1297.50px;">8865</div><div style="left:10px;top:780px;width:618px;height:1px;background:#c8dce6;"></div><svg style="left:10.5px;top:757.5px;" width="20" height="20" viewBox="0 0 20 20"><polygon points="10,1.2 18.8,10 10,18.8 1.2,10" fill="none" stroke="#e4e4e4" stroke-width="1.7"/></svg><svg style="left:204px;top:757.5px;" width="22" height="17" viewBox="0 0 22 17"><ellipse cx="11" cy="8.5" rx="9.6" ry="7.3" fill="#eef6f0" stroke="#2a2a2a" stroke-width="1.4" stroke-dasharray="2.6 1"/>
<circle cx="6.5" cy="8.5" r="1.9" fill="#1f9a5a"/><circle cx="12" cy="5" r="2.1" fill="#1f9a5a"/><circle cx="15" cy="9.5" r="1.7" fill="#1f9a5a"/><circle cx="10.5" cy="12" r="2.1" fill="#1f9a5a"/></svg><div class="t" style="top:760.88px;font-size:15.5px;line-height:15.5px;color:#1e1e1e;letter-spacing:0.1px;left:233.00px;">subG1</div><div class="t" style="top:760.88px;font-size:15.5px;line-height:15.5px;color:#1e1e1e;letter-spacing:0.35px;right:1423.50px;">0,28</div><div class="t" style="top:760.88px;font-size:15.5px;line-height:15.5px;color:#1e1e1e;letter-spacing:0.5px;right:1297.50px;">25</div><div style="left:10px;top:807px;width:618px;height:1px;background:#c8dce6;"></div><svg style="left:10.5px;top:784.5px;" width="20" height="20" viewBox="0 0 20 20"><polygon points="10,1.2 18.8,10 10,18.8 1.2,10" fill="none" stroke="#e4e4e4" stroke-width="1.7"/></svg><svg style="left:34px;top:784.5px;" width="21" height="21" viewBox="0 0 21 21"><circle cx="10.5" cy="10.5" r="9.3" fill="#fff" stroke="#8a8a8a" stroke-width="1.6"/></svg><div style="left:59px;top:785px;width:20px;height:19px;border:1.5px solid #c4c4c4;"></div><div class="t" style="top:787.88px;font-size:15.5px;line-height:15.5px;color:#1e1e1e;letter-spacing:0.55px;left:122.00px;">C12_d0_2h-1.fcs</div><svg style="left:98px;top:791.5px;" width="19" height="11" viewBox="0 0 19 11"><polygon points="0.5,0.5 18.5,0.5 9.5,10.5" fill="#111"/></svg><div class="t" style="top:787.88px;font-size:15.5px;line-height:15.5px;color:#1e1e1e;letter-spacing:0.5px;right:1297.50px;">10000</div><div style="left:10px;top:834px;width:618px;height:1px;background:#c8dce6;"></div><svg style="left:10.5px;top:811.5px;" width="20" height="20" viewBox="0 0 20 20"><polygon points="10,1.2 18.8,10 10,18.8 1.2,10" fill="none" stroke="#e4e4e4" stroke-width="1.7"/></svg><svg style="left:125px;top:818.5px;" width="19" height="11" viewBox="0 0 19 11"><polygon points="0.5,0.5 18.5,0.5 9.5,10.5" fill="#111"/></svg><svg style="left:150px;top:811.5px;" width="22" height="17" viewBox="0 0 22 17"><ellipse cx="11" cy="8.5" rx="9.6" ry="7.3" fill="#eef6f0" stroke="#2a2a2a" stroke-width="1.4" stroke-dasharray="2.6 1"/>
<circle cx="6.5" cy="8.5" r="1.9" fill="#1f9a5a"/><circle cx="12" cy="5" r="2.1" fill="#1f9a5a"/><circle cx="15" cy="9.5" r="1.7" fill="#1f9a5a"/><circle cx="10.5" cy="12" r="2.1" fill="#1f9a5a"/></svg><div class="t" style="top:814.88px;font-size:15.5px;line-height:15.5px;color:#1e1e1e;letter-spacing:0.1px;left:179.00px;">Cells</div><div class="t" style="top:814.88px;font-size:15.5px;line-height:15.5px;color:#1e1e1e;letter-spacing:0.35px;right:1423.50px;">87,9</div><div class="t" style="top:814.88px;font-size:15.5px;line-height:15.5px;color:#1e1e1e;letter-spacing:0.5px;right:1297.50px;">8788</div><div style="left:10px;top:861px;width:618px;height:1px;background:#c8dce6;"></div><svg style="left:10.5px;top:838.5px;" width="20" height="20" viewBox="0 0 20 20"><polygon points="10,1.2 18.8,10 10,18.8 1.2,10" fill="none" stroke="#e4e4e4" stroke-width="1.7"/></svg><svg style="left:152px;top:845.5px;" width="19" height="11" viewBox="0 0 19 11"><polygon points="0.5,0.5 18.5,0.5 9.5,10.5" fill="#111"/></svg><svg style="left:177px;top:838.5px;" width="22" height="17" viewBox="0 0 22 17"><ellipse cx="11" cy="8.5" rx="9.6" ry="7.3" fill="#eef6f0" stroke="#2a2a2a" stroke-width="1.4" stroke-dasharray="2.6 1"/>
<circle cx="6.5" cy="8.5" r="1.9" fill="#1f9a5a"/><circle cx="12" cy="5" r="2.1" fill="#1f9a5a"/><circle cx="15" cy="9.5" r="1.7" fill="#1f9a5a"/><circle cx="10.5" cy="12" r="2.1" fill="#1f9a5a"/></svg><div class="t" style="top:841.88px;font-size:15.5px;line-height:15.5px;color:#1e1e1e;letter-spacing:-0.009px;left:206.00px;">Single Cells</div><div class="t" style="top:841.88px;font-size:15.5px;line-height:15.5px;color:#1e1e1e;letter-spacing:0.35px;right:1423.50px;">97,2</div><div class="t" style="top:841.88px;font-size:15.5px;line-height:15.5px;color:#1e1e1e;letter-spacing:0.5px;right:1297.50px;">8539</div><div style="left:10px;top:888px;width:618px;height:1px;background:#c8dce6;"></div><svg style="left:10.5px;top:865.5px;" width="20" height="20" viewBox="0 0 20 20"><polygon points="10,1.2 18.8,10 10,18.8 1.2,10" fill="none" stroke="#e4e4e4" stroke-width="1.7"/></svg><svg style="left:204px;top:865.5px;" width="22" height="17" viewBox="0 0 22 17"><ellipse cx="11" cy="8.5" rx="9.6" ry="7.3" fill="#eef6f0" stroke="#2a2a2a" stroke-width="1.4" stroke-dasharray="2.6 1"/>
<circle cx="6.5" cy="8.5" r="1.9" fill="#1f9a5a"/><circle cx="12" cy="5" r="2.1" fill="#1f9a5a"/><circle cx="15" cy="9.5" r="1.7" fill="#1f9a5a"/><circle cx="10.5" cy="12" r="2.1" fill="#1f9a5a"/></svg><div class="t" style="top:868.88px;font-size:15.5px;line-height:15.5px;color:#1e1e1e;letter-spacing:0.1px;left:233.00px;">CellCycle</div><div class="t" style="top:868.88px;font-size:15.5px;line-height:15.5px;color:#1e1e1e;letter-spacing:0.35px;right:1423.50px;">99,6</div><div class="t" style="top:868.88px;font-size:15.5px;line-height:15.5px;color:#1e1e1e;letter-spacing:0.5px;right:1297.50px;">8508</div><div style="left:10px;top:915px;width:618px;height:1px;background:#c8dce6;"></div><svg style="left:10.5px;top:892.5px;" width="20" height="20" viewBox="0 0 20 20"><polygon points="10,1.2 18.8,10 10,18.8 1.2,10" fill="none" stroke="#e4e4e4" stroke-width="1.7"/></svg><svg style="left:204px;top:892.5px;" width="22" height="17" viewBox="0 0 22 17"><ellipse cx="11" cy="8.5" rx="9.6" ry="7.3" fill="#eef6f0" stroke="#2a2a2a" stroke-width="1.4" stroke-dasharray="2.6 1"/>
<circle cx="6.5" cy="8.5" r="1.9" fill="#1f9a5a"/><circle cx="12" cy="5" r="2.1" fill="#1f9a5a"/><circle cx="15" cy="9.5" r="1.7" fill="#1f9a5a"/><circle cx="10.5" cy="12" r="2.1" fill="#1f9a5a"/></svg><div class="t" style="top:895.88px;font-size:15.5px;line-height:15.5px;color:#1e1e1e;letter-spacing:0.1px;left:233.00px;">subG1</div><div class="t" style="top:895.88px;font-size:15.5px;line-height:15.5px;color:#1e1e1e;letter-spacing:0.35px;right:1423.50px;">0,36</div><div class="t" style="top:895.88px;font-size:15.5px;line-height:15.5px;color:#1e1e1e;letter-spacing:0.5px;right:1297.50px;">31</div><div style="left:10px;top:942px;width:618px;height:1px;background:#c8dce6;"></div><svg style="left:10.5px;top:919.5px;" width="20" height="20" viewBox="0 0 20 20"><polygon points="10,1.2 18.8,10 10,18.8 1.2,10" fill="none" stroke="#e4e4e4" stroke-width="1.7"/></svg><svg style="left:34px;top:919.5px;" width="21" height="21" viewBox="0 0 21 21"><circle cx="10.5" cy="10.5" r="9.3" fill="#fff" stroke="#8a8a8a" stroke-width="1.6"/></svg><div style="left:59px;top:920px;width:20px;height:19px;border:1.5px solid #c4c4c4;"></div><div class="t" style="top:922.88px;font-size:15.5px;line-height:15.5px;color:#1e1e1e;letter-spacing:0.55px;left:122.00px;">C12_d0_4h-1.fcs</div><svg style="left:98px;top:926.5px;" width="19" height="11" viewBox="0 0 19 11"><polygon points="0.5,0.5 18.5,0.5 9.5,10.5" fill="#111"/></svg><div class="t" style="top:922.88px;font-size:15.5px;line-height:15.5px;color:#1e1e1e;letter-spacing:0.5px;right:1297.50px;">10000</div><div style="left:10px;top:969px;width:618px;height:1px;background:#c8dce6;"></div><svg style="left:10.5px;top:946.5px;" width="20" height="20" viewBox="0 0 20 20"><polygon points="10,1.2 18.8,10 10,18.8 1.2,10" fill="none" stroke="#e4e4e4" stroke-width="1.7"/></svg><svg style="left:125px;top:953.5px;" width="19" height="11" viewBox="0 0 19 11"><polygon points="0.5,0.5 18.5,0.5 9.5,10.5" fill="#111"/></svg><svg style="left:150px;top:946.5px;" width="22" height="17" viewBox="0 0 22 17"><ellipse cx="11" cy="8.5" rx="9.6" ry="7.3" fill="#eef6f0" stroke="#2a2a2a" stroke-width="1.4" stroke-dasharray="2.6 1"/>
<circle cx="6.5" cy="8.5" r="1.9" fill="#1f9a5a"/><circle cx="12" cy="5" r="2.1" fill="#1f9a5a"/><circle cx="15" cy="9.5" r="1.7" fill="#1f9a5a"/><circle cx="10.5" cy="12" r="2.1" fill="#1f9a5a"/></svg><div class="t" style="top:949.88px;font-size:15.5px;line-height:15.5px;color:#1e1e1e;letter-spacing:0.1px;left:179.00px;">Cells</div><div class="t" style="top:949.88px;font-size:15.5px;line-height:15.5px;color:#1e1e1e;letter-spacing:0.35px;right:1423.50px;">90,8</div><div class="t" style="top:949.88px;font-size:15.5px;line-height:15.5px;color:#1e1e1e;letter-spacing:0.5px;right:1297.50px;">9081</div><div style="left:10px;top:996px;width:618px;height:1px;background:#c8dce6;"></div><svg style="left:10.5px;top:973.5px;" width="20" height="20" viewBox="0 0 20 20"><polygon points="10,1.2 18.8,10 10,18.8 1.2,10" fill="none" stroke="#e4e4e4" stroke-width="1.7"/></svg><svg style="left:152px;top:980.5px;" width="19" height="11" viewBox="0 0 19 11"><polygon points="0.5,0.5 18.5,0.5 9.5,10.5" fill="#111"/></svg><svg style="left:177px;top:973.5px;" width="22" height="17" viewBox="0 0 22 17"><ellipse cx="11" cy="8.5" rx="9.6" ry="7.3" fill="#eef6f0" stroke="#2a2a2a" stroke-width="1.4" stroke-dasharray="2.6 1"/>
<circle cx="6.5" cy="8.5" r="1.9" fill="#1f9a5a"/><circle cx="12" cy="5" r="2.1" fill="#1f9a5a"/><circle cx="15" cy="9.5" r="1.7" fill="#1f9a5a"/><circle cx="10.5" cy="12" r="2.1" fill="#1f9a5a"/></svg><div class="t" style="top:976.88px;font-size:15.5px;line-height:15.5px;color:#1e1e1e;letter-spacing:-0.009px;left:206.00px;">Single Cells</div><div class="t" style="top:976.88px;font-size:15.5px;line-height:15.5px;color:#1e1e1e;letter-spacing:0.35px;right:1423.50px;">98,3</div><div class="t" style="top:976.88px;font-size:15.5px;line-height:15.5px;color:#1e1e1e;letter-spacing:0.5px;right:1297.50px;">8930</div><div style="left:10px;top:1023px;width:618px;height:1px;background:#c8dce6;"></div><svg style="left:10.5px;top:1000.5px;" width="20" height="20" viewBox="0 0 20 20"><polygon points="10,1.2 18.8,10 10,18.8 1.2,10" fill="none" stroke="#e4e4e4" stroke-width="1.7"/></svg><svg style="left:204px;top:1000.5px;" width="22" height="17" viewBox="0 0 22 17"><ellipse cx="11" cy="8.5" rx="9.6" ry="7.3" fill="#eef6f0" stroke="#2a2a2a" stroke-width="1.4" stroke-dasharray="2.6 1"/>
<circle cx="6.5" cy="8.5" r="1.9" fill="#1f9a5a"/><circle cx="12" cy="5" r="2.1" fill="#1f9a5a"/><circle cx="15" cy="9.5" r="1.7" fill="#1f9a5a"/><circle cx="10.5" cy="12" r="2.1" fill="#1f9a5a"/></svg><div class="t" style="top:1003.88px;font-size:15.5px;line-height:15.5px;color:#1e1e1e;letter-spacing:0.1px;left:233.00px;">CellCycle</div><div class="t" style="top:1003.88px;font-size:15.5px;line-height:15.5px;color:#1e1e1e;letter-spacing:0.35px;right:1423.50px;">99,7</div><div class="t" style="top:1003.88px;font-size:15.5px;line-height:15.5px;color:#1e1e1e;letter-spacing:0.5px;right:1297.50px;">8902</div><div style="left:376px;top:508px;width:1px;height:521px;background:#c8dce6;"></div><div style="left:502px;top:508px;width:1px;height:521px;background:#c8dce6;"></div><div style="left:627px;top:508px;width:1px;height:521px;background:#c8dce6;"></div><div style="left:8px;top:1024px;width:620px;height:4px;background:#ffffff;"></div><div style="left:8px;top:1028px;width:648px;height:1px;background:#7a7a7a;"></div><div style="left:8px;top:1029px;width:648px;height:1px;background:#f8f8f8;"></div><div style="left:8px;top:1030px;width:650px;height:40px;background:#efefef;"></div><div style="left:662px;top:2px;width:1028px;height:1070px;background:#f0f0f0;border:1px solid #4a7ab4;border-bottom:none;"></div><div style="left:663px;top:3px;width:1026px;height:76px;background:#ffffff;"></div><div style="left:663px;top:3px;width:1026px;height:1px;background:#e8f0f8;"></div><div style="left:663px;top:0px;width:605px;height:1px;background:#3c3c3c;"></div><div style="left:663px;top:1px;width:605px;height:1px;background:#e4ecf4;"></div><svg style="left:675.5px;top:13.5px;" width="23" height="23" viewBox="0 0 23 23"><defs>
<linearGradient id="pl3" x1="0" y1="0" x2="0.3" y2="1"><stop offset="0" stop-color="#8a8a8a"/><stop offset="1" stop-color="#454545"/></linearGradient>
<linearGradient id="pr3" x1="0" y1="0" x2="1" y2="0.8"><stop offset="0" stop-color="#6e6e6e"/><stop offset="0.55" stop-color="#8a8a8a"/><stop offset="1" stop-color="#d8d8d8"/></linearGradient>
</defs><g transform="scale(0.39)">
<polygon points="22.9,1.1 0.8,47.1 19,54.2" fill="url(#pl3)"/>
<polygon points="22.9,1.1 19,54.2 46.8,47.1" fill="url(#pr3)"/>
<line x1="22.9" y1="1.1" x2="19" y2="54.2" stroke="#cfcfcf" stroke-width="1.4"/>
<polygon points="33.2,14.7 53.3,7.6 53.6,12.1 34.5,18.6" fill="#9a1420"/>
<polygon points="35.2,20.5 54,16 54.3,21.8 37.1,25" fill="#d42a34"/>
<polygon points="38.4,26.3 54.6,23.8 55,30.2 41,30.9" fill="#ea5030"/>
<polygon points="10.6,28.3 20.3,25.7 20.3,28.3 9.9,30.9" fill="#b01c28"/>
<polygon points="8.9,31.5 20.3,29.3 20.3,32.2 8.3,34.1" fill="#e03c3c"/>
<polygon points="7.6,34.8 20.3,33.5 20.3,36.7 7,37.4" fill="#ec5a40"/>
</g></svg><div class="t" style="top:18.61px;font-size:17px;line-height:17px;color:#000000;letter-spacing:-0.003px;left:704.00px;">C12_d0_Ctr-1.fcs: Cells/Single Cells/CellCycle/Cell Cycle - FlowJo</div><div style="left:1507px;top:25px;width:15px;height:1px;background:#111;"></div><div style="left:1576px;top:18px;width:15px;height:15px;border:1px solid #111;"></div><svg style="left:1647px;top:18px;" width="15" height="15" viewBox="0 0 15 15"><path d="M0.5 0.5 L14.5 14.5 M14.5 0.5 L0.5 14.5" stroke="#111" stroke-width="1.1"/></svg><div class="t" style="top:55.61px;font-size:17px;line-height:17px;color:#1a1a1a;letter-spacing:0.021px;left:668.00px;">File</div><div class="t" style="top:55.61px;font-size:17px;line-height:17px;color:#1a1a1a;letter-spacing:0.143px;left:709.00px;">Edit</div><div class="t" style="top:55.61px;font-size:17px;line-height:17px;color:#1a1a1a;letter-spacing:-0.223px;left:753.00px;">Go</div><div class="t" style="top:55.61px;font-size:17px;line-height:17px;color:#1a1a1a;letter-spacing:0.831px;left:787.00px;">Help</div><div style="left:663px;top:78px;width:1026px;height:1px;background:#a8a8a8;"></div><div style="left:663px;top:79px;width:1026px;height:992px;background:#f0f0f0;"></div><div style="left:665px;top:83px;width:34px;height:33px;border:1px solid #a8a8a8;border-radius:4px;background:linear-gradient(180deg,#d8d8d8,#e8e8e8);box-shadow:inset 1px 1px 1px rgba(0,0,0,0.15);"></div><svg style="left:675px;top:89px;" width="16" height="22" viewBox="0 0 16 22"><polygon points="2,1 2,17 6,13.5 9.5,20.5 12,19.3 8.6,12.5 13.5,12.5" fill="#111"/></svg><div style="left:701px;top:83px;width:34px;height:33px;border:1px solid #b4b4b4;border-radius:4px;background:linear-gradient(180deg,#fafafa,#ececec);"></div><svg style="left:707px;top:90px;" width="22" height="20" viewBox="0 0 22 20"><path d="M2 3 V17 M20 3 V17 M2 10 H20" stroke="#111" stroke-width="2"/></svg><svg style="left:960.9px;top:87px;" width="22" height="22" viewBox="0 0 22 22"><defs><radialGradient id="b971" cx="0.45" cy="0.35" r="0.65"><stop offset="0" stop-color="#aab4ff"/><stop offset="0.55" stop-color="#2a30e8"/><stop offset="1" stop-color="#1a1a9a"/></radialGradient></defs>
<circle cx="11" cy="11" r="10.2" fill="url(#b971)"/></svg><div class="t" style="top:92.88px;font-size:15.5px;line-height:15.5px;color:#222;letter-spacing:-1.556px;left:990.50px;">G1</div><svg style="left:1026.4px;top:87px;" width="22" height="22" viewBox="0 0 22 22"><defs><radialGradient id="b1037" cx="0.45" cy="0.35" r="0.65"><stop offset="0" stop-color="#ffffc0"/><stop offset="0.55" stop-color="#f0f020"/><stop offset="1" stop-color="#a8a810"/></radialGradient></defs>
<circle cx="11" cy="11" r="10.2" fill="url(#b1037)"/></svg><div class="t" style="top:92.88px;font-size:15.5px;line-height:15.5px;color:#222;letter-spacing:0.004px;left:1056.00px;">S Phase</div><svg style="left:1130.3px;top:87px;" width="22" height="22" viewBox="0 0 22 22"><defs><radialGradient id="b1141" cx="0.45" cy="0.35" r="0.65"><stop offset="0" stop-color="#c0ffc0"/><stop offset="0.55" stop-color="#30e030"/><stop offset="1" stop-color="#189818"/></radialGradient></defs>
<circle cx="11" cy="11" r="10.2" fill="url(#b1141)"/></svg><div class="t" style="top:92.88px;font-size:15.5px;line-height:15.5px;color:#222;letter-spacing:-0.056px;left:1160.00px;">G2</div><svg style="left:1196.4px;top:87px;" width="22" height="22" viewBox="0 0 22 22"><defs><radialGradient id="b1207" cx="0.45" cy="0.35" r="0.65"><stop offset="0" stop-color="#ffc0ff"/><stop offset="0.55" stop-color="#f030f0"/><stop offset="1" stop-color="#a018a0"/></radialGradient></defs>
<circle cx="11" cy="11" r="10.2" fill="url(#b1207)"/></svg><div class="t" style="top:92.88px;font-size:15.5px;line-height:15.5px;color:#222;letter-spacing:0.721px;left:1225.60px;">Sum</div><div style="left:1497px;top:83px;width:34px;height:33px;border:2px solid #9a9a9a;border-radius:5px;background:linear-gradient(180deg,#ffffff,#e8e8e8);box-shadow:0 1px 1px rgba(0,0,0,0.25);"></div><svg style="left:1497px;top:83px;" width="34" height="33" viewBox="0 0 34 33"><polygon points="7,23 17,10 27,23" fill="#1e9a1e"/></svg><div style="left:1533px;top:83px;width:34px;height:33px;border:2px solid #9a9a9a;border-radius:5px;background:linear-gradient(180deg,#ffffff,#e8e8e8);box-shadow:0 1px 1px rgba(0,0,0,0.25);"></div><svg style="left:1533px;top:83px;" width="34" height="33" viewBox="0 0 34 33"><polygon points="11.4,17 25.7,7 25.7,27" fill="#777"/></svg><div style="left:1569px;top:83px;width:34px;height:33px;border:2px solid #9a9a9a;border-radius:5px;background:linear-gradient(180deg,#ffffff,#e8e8e8);box-shadow:0 1px 1px rgba(0,0,0,0.25);"></div><svg style="left:1569px;top:83px;" width="34" height="33" viewBox="0 0 34 33"><polygon points="24.7,17 10.4,7 10.4,27" fill="#777"/></svg><div style="left:1607px;top:85px;width:79px;height:31px;border:1px solid #b8b8b8;background:#e2e2e2;"></div><div class="t" style="top:93.38px;font-size:15.5px;line-height:15.5px;color:#222;letter-spacing:0.447px;left:1628.00px;">Help</div><div class="t" style="top:122.80px;font-size:15px;line-height:15px;color:#222;letter-spacing:0.431px;left:678.00px;">C12_d0_Ctr-1.fcs/Cells/Single Cells/CellCycle/Cell Cycle</div><svg style="left:738.9px;top:162.3px;overflow:visible;" width="898.1" height="492.09999999999997" viewBox="0 0 898.1 492.09999999999997"><rect x="0" y="0" width="898.1" height="491.1" fill="#ffffff"/><path d="M0.0,491.10 L0.5,491.10 L1.0,491.10 L1.5,491.10 L2.0,491.10 L2.5,491.10 L3.0,491.10 L3.5,491.10 L4.0,491.10 L4.5,491.10 L5.0,491.10 L5.5,491.10 L6.0,491.10 L6.5,491.10 L7.0,491.10 L7.5,491.10 L8.0,491.10 L8.5,491.10 L9.0,491.10 L9.5,491.10 L10.0,491.10 L10.5,491.10 L11.0,491.10 L11.5,491.10 L12.0,491.10 L12.5,491.10 L13.0,491.10 L13.5,491.10 L14.0,491.10 L14.5,491.10 L15.0,491.10 L15.5,491.10 L16.0,491.10 L16.5,491.10 L17.0,491.10 L17.5,491.10 L18.0,491.10 L18.5,491.10 L19.0,491.10 L19.5,491.10 L20.0,491.10 L20.5,491.10 L21.0,491.10 L21.5,491.10 L22.0,491.10 L22.5,491.10 L23.0,491.10 L23.5,491.10 L24.0,491.10 L24.5,491.10 L25.0,491.10 L25.5,491.10 L26.0,491.10 L26.5,491.10 L27.0,491.10 L27.5,491.10 L28.0,491.10 L28.5,491.10 L29.0,491.10 L29.5,491.10 L30.0,491.10 L30.5,491.10 L31.0,491.10 L31.5,491.10 L32.0,491.10 L32.5,491.10 L33.0,491.10 L33.5,491.10 L34.0,491.10 L34.5,491.10 L35.0,491.10 L35.5,491.10 L36.0,491.10 L36.5,491.10 L37.0,491.10 L37.5,491.10 L38.0,491.10 L38.5,491.10 L39.0,491.10 L39.5,491.10 L40.0,491.10 L40.5,491.10 L41.0,491.10 L41.5,491.10 L42.0,491.10 L42.5,491.10 L43.0,491.10 L43.5,491.10 L44.0,491.10 L44.5,491.10 L45.0,491.10 L45.5,491.10 L46.0,491.10 L46.5,491.10 L47.0,491.10 L47.5,491.10 L48.0,491.10 L48.5,491.10 L49.0,491.10 L49.5,491.10 L50.0,491.10 L50.5,491.10 L51.0,491.10 L51.5,491.10 L52.0,491.10 L52.5,491.10 L53.0,491.10 L53.5,491.10 L54.0,491.10 L54.5,491.10 L55.0,491.10 L55.5,491.10 L56.0,491.10 L56.5,491.10 L57.0,491.10 L57.5,491.10 L58.0,491.10 L58.5,491.10 L59.0,491.10 L59.5,491.10 L60.0,491.10 L60.5,491.10 L61.0,491.10 L61.5,491.10 L62.0,491.10 L62.5,491.10 L63.0,491.10 L63.5,491.10 L64.0,491.10 L64.5,491.10 L65.0,491.10 L65.5,491.10 L66.0,491.10 L66.5,491.10 L67.0,491.10 L67.5,491.10 L68.0,491.10 L68.5,491.10 L69.0,491.10 L69.5,491.10 L70.0,491.10 L70.5,491.10 L71.0,491.10 L71.5,491.10 L72.0,491.10 L72.5,491.10 L73.0,491.10 L73.5,491.10 L74.0,491.10 L74.5,491.10 L75.0,491.10 L75.5,491.10 L76.0,491.10 L76.5,491.10 L77.0,491.10 L77.5,491.10 L78.0,491.10 L78.5,491.10 L79.0,491.10 L79.5,491.10 L80.0,491.10 L80.5,491.10 L81.0,491.10 L81.5,491.10 L82.0,491.10 L82.5,491.10 L83.0,491.10 L83.5,491.10 L84.0,491.10 L84.5,491.10 L85.0,491.10 L85.5,491.10 L86.0,491.10 L86.5,491.10 L87.0,491.10 L87.5,491.10 L88.0,491.10 L88.5,491.10 L89.0,491.10 L89.5,491.10 L90.0,491.10 L90.5,491.10 L91.0,491.10 L91.5,491.10 L92.0,491.10 L92.5,491.10 L93.0,491.10 L93.5,491.10 L94.0,491.10 L94.5,491.10 L95.0,491.10 L95.5,491.10 L96.0,491.10 L96.5,491.10 L97.0,491.10 L97.5,491.10 L98.0,491.10 L98.5,491.10 L99.0,491.10 L99.5,491.10 L100.0,491.10 L100.5,491.10 L101.0,491.10 L101.5,491.10 L102.0,491.10 L102.5,491.10 L103.0,491.10 L103.5,491.10 L104.0,491.10 L104.5,491.10 L105.0,491.10 L105.5,491.10 L106.0,491.10 L106.5,491.10 L107.0,491.10 L107.5,491.10 L108.0,491.10 L108.5,491.10 L109.0,491.10 L109.5,491.10 L110.0,491.10 L110.5,491.10 L111.0,491.10 L111.5,491.10 L112.0,491.10 L112.5,491.10 L113.0,491.10 L113.5,491.10 L114.0,491.10 L114.5,491.10 L115.0,491.10 L115.5,491.10 L116.0,491.10 L116.5,491.10 L117.0,491.10 L117.5,491.10 L118.0,491.10 L118.5,491.10 L119.0,491.10 L119.5,491.10 L120.0,491.10 L120.5,491.10 L121.0,491.10 L121.5,491.10 L122.0,491.10 L122.5,491.10 L123.0,491.10 L123.5,491.10 L124.0,491.10 L124.5,491.10 L125.0,491.10 L125.5,491.10 L126.0,491.10 L126.5,491.10 L127.0,491.10 L127.5,491.10 L128.0,491.10 L128.5,491.10 L129.0,491.10 L129.5,491.05 L130.0,491.03 L130.5,491.01 L131.0,490.99 L131.5,490.96 L132.0,490.92 L132.5,490.87 L133.0,490.81 L133.5,490.73 L134.0,490.64 L134.5,490.52 L135.0,490.38 L135.5,490.21 L136.0,490.01 L136.5,489.75 L137.0,489.45 L137.5,489.09 L138.0,488.65 L138.5,488.14 L139.0,487.52 L139.5,486.80 L140.0,485.94 L140.5,484.94 L141.0,483.77 L141.5,482.41 L142.0,480.84 L142.5,479.02 L143.0,476.94 L143.5,474.55 L144.0,471.83 L144.5,468.75 L145.0,465.27 L145.5,461.35 L146.0,456.96 L146.5,452.07 L147.0,446.64 L147.5,440.64 L148.0,434.03 L148.5,426.79 L149.0,418.90 L149.5,410.33 L150.0,401.08 L150.5,391.12 L151.0,380.47 L151.5,369.13 L152.0,357.11 L152.5,344.43 L153.0,331.15 L153.5,317.29 L154.0,302.91 L154.5,288.08 L155.0,272.88 L155.5,257.38 L156.0,241.70 L156.5,225.92 L157.0,210.17 L157.5,194.56 L158.0,179.22 L158.5,164.27 L159.0,149.85 L159.5,136.08 L160.0,123.09 L160.5,111.01 L161.0,99.96 L161.5,90.04 L162.0,81.36 L162.5,74.01 L163.0,68.07 L163.5,63.59 L164.0,60.63 L164.5,59.23 L165.0,59.38 L165.5,61.10 L166.0,64.37 L166.5,69.14 L167.0,75.37 L167.5,83.00 L168.0,91.93 L168.5,102.08 L169.0,113.35 L169.5,125.62 L170.0,138.78 L170.5,152.69 L171.0,167.22 L171.5,182.26 L172.0,197.67 L172.5,213.31 L173.0,229.08 L173.5,244.84 L174.0,260.50 L174.5,275.94 L175.0,291.08 L175.5,305.82 L176.0,320.10 L176.5,333.85 L177.0,347.02 L177.5,359.56 L178.0,371.45 L178.5,382.66 L179.0,393.17 L179.5,402.98 L180.0,412.10 L180.5,420.53 L181.0,428.29 L181.5,435.40 L182.0,441.89 L182.5,447.77 L183.0,453.09 L183.5,457.88 L184.0,462.17 L184.5,466.00 L185.0,469.40 L185.5,472.40 L186.0,475.05 L186.5,477.38 L187.0,479.41 L187.5,481.17 L188.0,482.70 L188.5,484.02 L189.0,485.15 L189.5,486.12 L190.0,486.95 L190.5,487.65 L191.0,488.25 L191.5,488.75 L192.0,489.17 L192.5,489.52 L193.0,489.81 L193.5,490.05 L194.0,490.25 L194.5,490.41 L195.0,490.55 L195.5,490.66 L196.0,490.75 L196.5,490.82 L197.0,490.88 L197.5,490.92 L198.0,490.96 L198.5,490.99 L199.0,491.02 L199.5,491.03 L200.0,491.05 L200.5,491.10 L201.0,491.10 L201.5,491.10 L202.0,491.10 L202.5,491.10 L203.0,491.10 L203.5,491.10 L204.0,491.10 L204.5,491.10 L205.0,491.10 L205.5,491.10 L206.0,491.10 L206.5,491.10 L207.0,491.10 L207.5,491.10 L208.0,491.10 L208.5,491.10 L209.0,491.10 L209.5,491.10 L210.0,491.10 L210.5,491.10 L211.0,491.10 L211.5,491.10 L212.0,491.10 L212.5,491.10 L213.0,491.10 L213.5,491.10 L214.0,491.10 L214.5,491.10 L215.0,491.10 L215.5,491.10 L216.0,491.10 L216.5,491.10 L217.0,491.10 L217.5,491.10 L218.0,491.10 L218.5,491.10 L219.0,491.10 L219.5,491.10 L220.0,491.10 L220.5,491.10 L221.0,491.10 L221.5,491.10 L222.0,491.10 L222.5,491.10 L223.0,491.10 L223.5,491.10 L224.0,491.10 L224.5,491.10 L225.0,491.10 L225.5,491.10 L226.0,491.10 L226.5,491.10 L227.0,491.10 L227.5,491.10 L228.0,491.10 L228.5,491.10 L229.0,491.10 L229.5,491.10 L230.0,491.10 L230.5,491.10 L231.0,491.10 L231.5,491.10 L232.0,491.10 L232.5,491.10 L233.0,491.10 L233.5,491.10 L234.0,491.10 L234.5,491.10 L235.0,491.10 L235.5,491.10 L236.0,491.10 L236.5,491.10 L237.0,491.10 L237.5,491.10 L238.0,491.10 L238.5,491.10 L239.0,491.10 L239.5,491.10 L240.0,491.10 L240.5,491.10 L241.0,491.10 L241.5,491.10 L242.0,491.10 L242.5,491.10 L243.0,491.10 L243.5,491.10 L244.0,491.10 L244.5,491.10 L245.0,491.10 L245.5,491.10 L246.0,491.10 L246.5,491.10 L247.0,491.10 L247.5,491.10 L248.0,491.10 L248.5,491.10 L249.0,491.10 L249.5,491.10 L250.0,491.10 L250.5,491.10 L251.0,491.10 L251.5,491.10 L252.0,491.10 L252.5,491.10 L253.0,491.10 L253.5,491.10 L254.0,491.10 L254.5,491.10 L255.0,491.10 L255.5,491.10 L256.0,491.10 L256.5,491.10 L257.0,491.10 L257.5,491.10 L258.0,491.10 L258.5,491.10 L259.0,491.10 L259.5,491.10 L260.0,491.10 L260.5,491.10 L261.0,491.10 L261.5,491.10 L262.0,491.10 L262.5,491.10 L263.0,491.10 L263.5,491.10 L264.0,491.10 L264.5,491.10 L265.0,491.10 L265.5,491.10 L266.0,491.10 L266.5,491.10 L267.0,491.10 L267.5,491.10 L268.0,491.10 L268.5,491.10 L269.0,491.10 L269.5,491.10 L270.0,491.10 L270.5,491.10 L271.0,491.10 L271.5,491.10 L272.0,491.10 L272.5,491.10 L273.0,491.10 L273.5,491.10 L274.0,491.10 L274.5,491.10 L275.0,491.10 L275.5,491.10 L276.0,491.10 L276.5,491.10 L277.0,491.10 L277.5,491.10 L278.0,491.10 L278.5,491.10 L279.0,491.10 L279.5,491.10 L280.0,491.10 L280.5,491.10 L281.0,491.10 L281.5,491.10 L282.0,491.10 L282.5,491.10 L283.0,491.10 L283.5,491.10 L284.0,491.10 L284.5,491.10 L285.0,491.10 L285.5,491.10 L286.0,491.10 L286.5,491.10 L287.0,491.10 L287.5,491.10 L288.0,491.10 L288.5,491.10 L289.0,491.10 L289.5,491.10 L290.0,491.10 L290.5,491.10 L291.0,491.10 L291.5,491.10 L292.0,491.10 L292.5,491.10 L293.0,491.10 L293.5,491.10 L294.0,491.10 L294.5,491.10 L295.0,491.10 L295.5,491.10 L296.0,491.10 L296.5,491.10 L297.0,491.10 L297.5,491.10 L298.0,491.10 L298.5,491.10 L299.0,491.10 L299.5,491.10 L300.0,491.10 L300.5,491.10 L301.0,491.10 L301.5,491.10 L302.0,491.10 L302.5,491.10 L303.0,491.10 L303.5,491.10 L304.0,491.10 L304.5,491.10 L305.0,491.10 L305.5,491.10 L306.0,491.10 L306.5,491.10 L307.0,491.10 L307.5,491.10 L308.0,491.10 L308.5,491.10 L309.0,491.10 L309.5,491.10 L310.0,491.10 L310.5,491.10 L311.0,491.10 L311.5,491.10 L312.0,491.10 L312.5,491.10 L313.0,491.10 L313.5,491.10 L314.0,491.10 L314.5,491.10 L315.0,491.10 L315.5,491.10 L316.0,491.10 L316.5,491.10 L317.0,491.10 L317.5,491.10 L318.0,491.10 L318.5,491.10 L319.0,491.10 L319.5,491.10 L320.0,491.10 L320.5,491.10 L321.0,491.10 L321.5,491.10 L322.0,491.10 L322.5,491.10 L323.0,491.10 L323.5,491.10 L324.0,491.10 L324.5,491.10 L325.0,491.10 L325.5,491.10 L326.0,491.10 L326.5,491.10 L327.0,491.10 L327.5,491.10 L328.0,491.10 L328.5,491.10 L329.0,491.10 L329.5,491.10 L330.0,491.10 L330.5,491.10 L331.0,491.10 L331.5,491.10 L332.0,491.10 L332.5,491.10 L333.0,491.10 L333.5,491.10 L334.0,491.10 L334.5,491.10 L335.0,491.10 L335.5,491.10 L336.0,491.10 L336.5,491.10 L337.0,491.10 L337.5,491.10 L338.0,491.10 L338.5,491.10 L339.0,491.10 L339.5,491.10 L340.0,491.10 L340.5,491.10 L341.0,491.10 L341.5,491.10 L342.0,491.10 L342.5,491.10 L343.0,491.10 L343.5,491.10 L344.0,491.10 L344.5,491.10 L345.0,491.10 L345.5,491.10 L346.0,491.10 L346.5,491.10 L347.0,491.10 L347.5,491.10 L348.0,491.10 L348.5,491.10 L349.0,491.10 L349.5,491.10 L350.0,491.10 L350.5,491.10 L351.0,491.10 L351.5,491.10 L352.0,491.10 L352.5,491.10 L353.0,491.10 L353.5,491.10 L354.0,491.10 L354.5,491.10 L355.0,491.10 L355.5,491.10 L356.0,491.10 L356.5,491.10 L357.0,491.10 L357.5,491.10 L358.0,491.10 L358.5,491.10 L359.0,491.10 L359.5,491.10 L360.0,491.10 L360.5,491.10 L361.0,491.10 L361.5,491.10 L362.0,491.10 L362.5,491.10 L363.0,491.10 L363.5,491.10 L364.0,491.10 L364.5,491.10 L365.0,491.10 L365.5,491.10 L366.0,491.10 L366.5,491.10 L367.0,491.10 L367.5,491.10 L368.0,491.10 L368.5,491.10 L369.0,491.10 L369.5,491.10 L370.0,491.10 L370.5,491.10 L371.0,491.10 L371.5,491.10 L372.0,491.10 L372.5,491.10 L373.0,491.10 L373.5,491.10 L374.0,491.10 L374.5,491.10 L375.0,491.10 L375.5,491.10 L376.0,491.10 L376.5,491.10 L377.0,491.10 L377.5,491.10 L378.0,491.10 L378.5,491.10 L379.0,491.10 L379.5,491.10 L380.0,491.10 L380.5,491.10 L381.0,491.10 L381.5,491.10 L382.0,491.10 L382.5,491.10 L383.0,491.10 L383.5,491.10 L384.0,491.10 L384.5,491.10 L385.0,491.10 L385.5,491.10 L386.0,491.10 L386.5,491.10 L387.0,491.10 L387.5,491.10 L388.0,491.10 L388.5,491.10 L389.0,491.10 L389.5,491.10 L390.0,491.10 L390.5,491.10 L391.0,491.10 L391.5,491.10 L392.0,491.10 L392.5,491.10 L393.0,491.10 L393.5,491.10 L394.0,491.10 L394.5,491.10 L395.0,491.10 L395.5,491.10 L396.0,491.10 L396.5,491.10 L397.0,491.10 L397.5,491.10 L398.0,491.10 L398.5,491.10 L399.0,491.10 L399.5,491.10 L400.0,491.10 L400.5,491.10 L401.0,491.10 L401.5,491.10 L402.0,491.10 L402.5,491.10 L403.0,491.10 L403.5,491.10 L404.0,491.10 L404.5,491.10 L405.0,491.10 L405.5,491.10 L406.0,491.10 L406.5,491.10 L407.0,491.10 L407.5,491.10 L408.0,491.10 L408.5,491.10 L409.0,491.10 L409.5,491.10 L410.0,491.10 L410.5,491.10 L411.0,491.10 L411.5,491.10 L412.0,491.10 L412.5,491.10 L413.0,491.10 L413.5,491.10 L414.0,491.10 L414.5,491.10 L415.0,491.10 L415.5,491.10 L416.0,491.10 L416.5,491.10 L417.0,491.10 L417.5,491.10 L418.0,491.10 L418.5,491.10 L419.0,491.10 L419.5,491.10 L420.0,491.10 L420.5,491.10 L421.0,491.10 L421.5,491.10 L422.0,491.10 L422.5,491.10 L423.0,491.10 L423.5,491.10 L424.0,491.10 L424.5,491.10 L425.0,491.10 L425.5,491.10 L426.0,491.10 L426.5,491.10 L427.0,491.10 L427.5,491.10 L428.0,491.10 L428.5,491.10 L429.0,491.10 L429.5,491.10 L430.0,491.10 L430.5,491.10 L431.0,491.10 L431.5,491.10 L432.0,491.10 L432.5,491.10 L433.0,491.10 L433.5,491.10 L434.0,491.10 L434.5,491.10 L435.0,491.10 L435.5,491.10 L436.0,491.10 L436.5,491.10 L437.0,491.10 L437.5,491.10 L438.0,491.10 L438.5,491.10 L439.0,491.10 L439.5,491.10 L440.0,491.10 L440.5,491.10 L441.0,491.10 L441.5,491.10 L442.0,491.10 L442.5,491.10 L443.0,491.10 L443.5,491.10 L444.0,491.10 L444.5,491.10 L445.0,491.10 L445.5,491.10 L446.0,491.10 L446.5,491.10 L447.0,491.10 L447.5,491.10 L448.0,491.10 L448.5,491.10 L449.0,491.10 L449.5,491.10 L450.0,491.10 L450.5,491.10 L451.0,491.10 L451.5,491.10 L452.0,491.10 L452.5,491.10 L453.0,491.10 L453.5,491.10 L454.0,491.10 L454.5,491.10 L455.0,491.10 L455.5,491.10 L456.0,491.10 L456.5,491.10 L457.0,491.10 L457.5,491.10 L458.0,491.10 L458.5,491.10 L459.0,491.10 L459.5,491.10 L460.0,491.10 L460.5,491.10 L461.0,491.10 L461.5,491.10 L462.0,491.10 L462.5,491.10 L463.0,491.10 L463.5,491.10 L464.0,491.10 L464.5,491.10 L465.0,491.10 L465.5,491.10 L466.0,491.10 L466.5,491.10 L467.0,491.10 L467.5,491.10 L468.0,491.10 L468.5,491.10 L469.0,491.10 L469.5,491.10 L470.0,491.10 L470.5,491.10 L471.0,491.10 L471.5,491.10 L472.0,491.10 L472.5,491.10 L473.0,491.10 L473.5,491.10 L474.0,491.10 L474.5,491.10 L475.0,491.10 L475.5,491.10 L476.0,491.10 L476.5,491.10 L477.0,491.10 L477.5,491.10 L478.0,491.10 L478.5,491.10 L479.0,491.10 L479.5,491.10 L480.0,491.10 L480.5,491.10 L481.0,491.10 L481.5,491.10 L482.0,491.10 L482.5,491.10 L483.0,491.10 L483.5,491.10 L484.0,491.10 L484.5,491.10 L485.0,491.10 L485.5,491.10 L486.0,491.10 L486.5,491.10 L487.0,491.10 L487.5,491.10 L488.0,491.10 L488.5,491.10 L489.0,491.10 L489.5,491.10 L490.0,491.10 L490.5,491.10 L491.0,491.10 L491.5,491.10 L492.0,491.10 L492.5,491.10 L493.0,491.10 L493.5,491.10 L494.0,491.10 L494.5,491.10 L495.0,491.10 L495.5,491.10 L496.0,491.10 L496.5,491.10 L497.0,491.10 L497.5,491.10 L498.0,491.10 L498.5,491.10 L499.0,491.10 L499.5,491.10 L500.0,491.10 L500.5,491.10 L501.0,491.10 L501.5,491.10 L502.0,491.10 L502.5,491.10 L503.0,491.10 L503.5,491.10 L504.0,491.10 L504.5,491.10 L505.0,491.10 L505.5,491.10 L506.0,491.10 L506.5,491.10 L507.0,491.10 L507.5,491.10 L508.0,491.10 L508.5,491.10 L509.0,491.10 L509.5,491.10 L510.0,491.10 L510.5,491.10 L511.0,491.10 L511.5,491.10 L512.0,491.10 L512.5,491.10 L513.0,491.10 L513.5,491.10 L514.0,491.10 L514.5,491.10 L515.0,491.10 L515.5,491.10 L516.0,491.10 L516.5,491.10 L517.0,491.10 L517.5,491.10 L518.0,491.10 L518.5,491.10 L519.0,491.10 L519.5,491.10 L520.0,491.10 L520.5,491.10 L521.0,491.10 L521.5,491.10 L522.0,491.10 L522.5,491.10 L523.0,491.10 L523.5,491.10 L524.0,491.10 L524.5,491.10 L525.0,491.10 L525.5,491.10 L526.0,491.10 L526.5,491.10 L527.0,491.10 L527.5,491.10 L528.0,491.10 L528.5,491.10 L529.0,491.10 L529.5,491.10 L530.0,491.10 L530.5,491.10 L531.0,491.10 L531.5,491.10 L532.0,491.10 L532.5,491.10 L533.0,491.10 L533.5,491.10 L534.0,491.10 L534.5,491.10 L535.0,491.10 L535.5,491.10 L536.0,491.10 L536.5,491.10 L537.0,491.10 L537.5,491.10 L538.0,491.10 L538.5,491.10 L539.0,491.10 L539.5,491.10 L540.0,491.10 L540.5,491.10 L541.0,491.10 L541.5,491.10 L542.0,491.10 L542.5,491.10 L543.0,491.10 L543.5,491.10 L544.0,491.10 L544.5,491.10 L545.0,491.10 L545.5,491.10 L546.0,491.10 L546.5,491.10 L547.0,491.10 L547.5,491.10 L548.0,491.10 L548.5,491.10 L549.0,491.10 L549.5,491.10 L550.0,491.10 L550.5,491.10 L551.0,491.10 L551.5,491.10 L552.0,491.10 L552.5,491.10 L553.0,491.10 L553.5,491.10 L554.0,491.10 L554.5,491.10 L555.0,491.10 L555.5,491.10 L556.0,491.10 L556.5,491.10 L557.0,491.10 L557.5,491.10 L558.0,491.10 L558.5,491.10 L559.0,491.10 L559.5,491.10 L560.0,491.10 L560.5,491.10 L561.0,491.10 L561.5,491.10 L562.0,491.10 L562.5,491.10 L563.0,491.10 L563.5,491.10 L564.0,491.10 L564.5,491.10 L565.0,491.10 L565.5,491.10 L566.0,491.10 L566.5,491.10 L567.0,491.10 L567.5,491.10 L568.0,491.10 L568.5,491.10 L569.0,491.10 L569.5,491.10 L570.0,491.10 L570.5,491.10 L571.0,491.10 L571.5,491.10 L572.0,491.10 L572.5,491.10 L573.0,491.10 L573.5,491.10 L574.0,491.10 L574.5,491.10 L575.0,491.10 L575.5,491.10 L576.0,491.10 L576.5,491.10 L577.0,491.10 L577.5,491.10 L578.0,491.10 L578.5,491.10 L579.0,491.10 L579.5,491.10 L580.0,491.10 L580.5,491.10 L581.0,491.10 L581.5,491.10 L582.0,491.10 L582.5,491.10 L583.0,491.10 L583.5,491.10 L584.0,491.10 L584.5,491.10 L585.0,491.10 L585.5,491.10 L586.0,491.10 L586.5,491.10 L587.0,491.10 L587.5,491.10 L588.0,491.10 L588.5,491.10 L589.0,491.10 L589.5,491.10 L590.0,491.10 L590.5,491.10 L591.0,491.10 L591.5,491.10 L592.0,491.10 L592.5,491.10 L593.0,491.10 L593.5,491.10 L594.0,491.10 L594.5,491.10 L595.0,491.10 L595.5,491.10 L596.0,491.10 L596.5,491.10 L597.0,491.10 L597.5,491.10 L598.0,491.10 L598.5,491.10 L599.0,491.10 L599.5,491.10 L600.0,491.10 L600.5,491.10 L601.0,491.10 L601.5,491.10 L602.0,491.10 L602.5,491.10 L603.0,491.10 L603.5,491.10 L604.0,491.10 L604.5,491.10 L605.0,491.10 L605.5,491.10 L606.0,491.10 L606.5,491.10 L607.0,491.10 L607.5,491.10 L608.0,491.10 L608.5,491.10 L609.0,491.10 L609.5,491.10 L610.0,491.10 L610.5,491.10 L611.0,491.10 L611.5,491.10 L612.0,491.10 L612.5,491.10 L613.0,491.10 L613.5,491.10 L614.0,491.10 L614.5,491.10 L615.0,491.10 L615.5,491.10 L616.0,491.10 L616.5,491.10 L617.0,491.10 L617.5,491.10 L618.0,491.10 L618.5,491.10 L619.0,491.10 L619.5,491.10 L620.0,491.10 L620.5,491.10 L621.0,491.10 L621.5,491.10 L622.0,491.10 L622.5,491.10 L623.0,491.10 L623.5,491.10 L624.0,491.10 L624.5,491.10 L625.0,491.10 L625.5,491.10 L626.0,491.10 L626.5,491.10 L627.0,491.10 L627.5,491.10 L628.0,491.10 L628.5,491.10 L629.0,491.10 L629.5,491.10 L630.0,491.10 L630.5,491.10 L631.0,491.10 L631.5,491.10 L632.0,491.10 L632.5,491.10 L633.0,491.10 L633.5,491.10 L634.0,491.10 L634.5,491.10 L635.0,491.10 L635.5,491.10 L636.0,491.10 L636.5,491.10 L637.0,491.10 L637.5,491.10 L638.0,491.10 L638.5,491.10 L639.0,491.10 L639.5,491.10 L640.0,491.10 L640.5,491.10 L641.0,491.10 L641.5,491.10 L642.0,491.10 L642.5,491.10 L643.0,491.10 L643.5,491.10 L644.0,491.10 L644.5,491.10 L645.0,491.10 L645.5,491.10 L646.0,491.10 L646.5,491.10 L647.0,491.10 L647.5,491.10 L648.0,491.10 L648.5,491.10 L649.0,491.10 L649.5,491.10 L650.0,491.10 L650.5,491.10 L651.0,491.10 L651.5,491.10 L652.0,491.10 L652.5,491.10 L653.0,491.10 L653.5,491.10 L654.0,491.10 L654.5,491.10 L655.0,491.10 L655.5,491.10 L656.0,491.10 L656.5,491.10 L657.0,491.10 L657.5,491.10 L658.0,491.10 L658.5,491.10 L659.0,491.10 L659.5,491.10 L660.0,491.10 L660.5,491.10 L661.0,491.10 L661.5,491.10 L662.0,491.10 L662.5,491.10 L663.0,491.10 L663.5,491.10 L664.0,491.10 L664.5,491.10 L665.0,491.10 L665.5,491.10 L666.0,491.10 L666.5,491.10 L667.0,491.10 L667.5,491.10 L668.0,491.10 L668.5,491.10 L669.0,491.10 L669.5,491.10 L670.0,491.10 L670.5,491.10 L671.0,491.10 L671.5,491.10 L672.0,491.10 L672.5,491.10 L673.0,491.10 L673.5,491.10 L674.0,491.10 L674.5,491.10 L675.0,491.10 L675.5,491.10 L676.0,491.10 L676.5,491.10 L677.0,491.10 L677.5,491.10 L678.0,491.10 L678.5,491.10 L679.0,491.10 L679.5,491.10 L680.0,491.10 L680.5,491.10 L681.0,491.10 L681.5,491.10 L682.0,491.10 L682.5,491.10 L683.0,491.10 L683.5,491.10 L684.0,491.10 L684.5,491.10 L685.0,491.10 L685.5,491.10 L686.0,491.10 L686.5,491.10 L687.0,491.10 L687.5,491.10 L688.0,491.10 L688.5,491.10 L689.0,491.10 L689.5,491.10 L690.0,491.10 L690.5,491.10 L691.0,491.10 L691.5,491.10 L692.0,491.10 L692.5,491.10 L693.0,491.10 L693.5,491.10 L694.0,491.10 L694.5,491.10 L695.0,491.10 L695.5,491.10 L696.0,491.10 L696.5,491.10 L697.0,491.10 L697.5,491.10 L698.0,491.10 L698.5,491.10 L699.0,491.10 L699.5,491.10 L700.0,491.10 L700.5,491.10 L701.0,491.10 L701.5,491.10 L702.0,491.10 L702.5,491.10 L703.0,491.10 L703.5,491.10 L704.0,491.10 L704.5,491.10 L705.0,491.10 L705.5,491.10 L706.0,491.10 L706.5,491.10 L707.0,491.10 L707.5,491.10 L708.0,491.10 L708.5,491.10 L709.0,491.10 L709.5,491.10 L710.0,491.10 L710.5,491.10 L711.0,491.10 L711.5,491.10 L712.0,491.10 L712.5,491.10 L713.0,491.10 L713.5,491.10 L714.0,491.10 L714.5,491.10 L715.0,491.10 L715.5,491.10 L716.0,491.10 L716.5,491.10 L717.0,491.10 L717.5,491.10 L718.0,491.10 L718.5,491.10 L719.0,491.10 L719.5,491.10 L720.0,491.10 L720.5,491.10 L721.0,491.10 L721.5,491.10 L722.0,491.10 L722.5,491.10 L723.0,491.10 L723.5,491.10 L724.0,491.10 L724.5,491.10 L725.0,491.10 L725.5,491.10 L726.0,491.10 L726.5,491.10 L727.0,491.10 L727.5,491.10 L728.0,491.10 L728.5,491.10 L729.0,491.10 L729.5,491.10 L730.0,491.10 L730.5,491.10 L731.0,491.10 L731.5,491.10 L732.0,491.10 L732.5,491.10 L733.0,491.10 L733.5,491.10 L734.0,491.10 L734.5,491.10 L735.0,491.10 L735.5,491.10 L736.0,491.10 L736.5,491.10 L737.0,491.10 L737.5,491.10 L738.0,491.10 L738.5,491.10 L739.0,491.10 L739.5,491.10 L740.0,491.10 L740.5,491.10 L741.0,491.10 L741.5,491.10 L742.0,491.10 L742.5,491.10 L743.0,491.10 L743.5,491.10 L744.0,491.10 L744.5,491.10 L745.0,491.10 L745.5,491.10 L746.0,491.10 L746.5,491.10 L747.0,491.10 L747.5,491.10 L748.0,491.10 L748.5,491.10 L749.0,491.10 L749.5,491.10 L750.0,491.10 L750.5,491.10 L751.0,491.10 L751.5,491.10 L752.0,491.10 L752.5,491.10 L753.0,491.10 L753.5,491.10 L754.0,491.10 L754.5,491.10 L755.0,491.10 L755.5,491.10 L756.0,491.10 L756.5,491.10 L757.0,491.10 L757.5,491.10 L758.0,491.10 L758.5,491.10 L759.0,491.10 L759.5,491.10 L760.0,491.10 L760.5,491.10 L761.0,491.10 L761.5,491.10 L762.0,491.10 L762.5,491.10 L763.0,491.10 L763.5,491.10 L764.0,491.10 L764.5,491.10 L765.0,491.10 L765.5,491.10 L766.0,491.10 L766.5,491.10 L767.0,491.10 L767.5,491.10 L768.0,491.10 L768.5,491.10 L769.0,491.10 L769.5,491.10 L770.0,491.10 L770.5,491.10 L771.0,491.10 L771.5,491.10 L772.0,491.10 L772.5,491.10 L773.0,491.10 L773.5,491.10 L774.0,491.10 L774.5,491.10 L775.0,491.10 L775.5,491.10 L776.0,491.10 L776.5,491.10 L777.0,491.10 L777.5,491.10 L778.0,491.10 L778.5,491.10 L779.0,491.10 L779.5,491.10 L780.0,491.10 L780.5,491.10 L781.0,491.10 L781.5,491.10 L782.0,491.10 L782.5,491.10 L783.0,491.10 L783.5,491.10 L784.0,491.10 L784.5,491.10 L785.0,491.10 L785.5,491.10 L786.0,491.10 L786.5,491.10 L787.0,491.10 L787.5,491.10 L788.0,491.10 L788.5,491.10 L789.0,491.10 L789.5,491.10 L790.0,491.10 L790.5,491.10 L791.0,491.10 L791.5,491.10 L792.0,491.10 L792.5,491.10 L793.0,491.10 L793.5,491.10 L794.0,491.10 L794.5,491.10 L795.0,491.10 L795.5,491.10 L796.0,491.10 L796.5,491.10 L797.0,491.10 L797.5,491.10 L798.0,491.10 L798.5,491.10 L799.0,491.10 L799.5,491.10 L800.0,491.10 L800.5,491.10 L801.0,491.10 L801.5,491.10 L802.0,491.10 L802.5,491.10 L803.0,491.10 L803.5,491.10 L804.0,491.10 L804.5,491.10 L805.0,491.10 L805.5,491.10 L806.0,491.10 L806.5,491.10 L807.0,491.10 L807.5,491.10 L808.0,491.10 L808.5,491.10 L809.0,491.10 L809.5,491.10 L810.0,491.10 L810.5,491.10 L811.0,491.10 L811.5,491.10 L812.0,491.10 L812.5,491.10 L813.0,491.10 L813.5,491.10 L814.0,491.10 L814.5,491.10 L815.0,491.10 L815.5,491.10 L816.0,491.10 L816.5,491.10 L817.0,491.10 L817.5,491.10 L818.0,491.10 L818.5,491.10 L819.0,491.10 L819.5,491.10 L820.0,491.10 L820.5,491.10 L821.0,491.10 L821.5,491.10 L822.0,491.10 L822.5,491.10 L823.0,491.10 L823.5,491.10 L824.0,491.10 L824.5,491.10 L825.0,491.10 L825.5,491.10 L826.0,491.10 L826.5,491.10 L827.0,491.10 L827.5,491.10 L828.0,491.10 L828.5,491.10 L829.0,491.10 L829.5,491.10 L830.0,491.10 L830.5,491.10 L831.0,491.10 L831.5,491.10 L832.0,491.10 L832.5,491.10 L833.0,491.10 L833.5,491.10 L834.0,491.10 L834.5,491.10 L835.0,491.10 L835.5,491.10 L836.0,491.10 L836.5,491.10 L837.0,491.10 L837.5,491.10 L838.0,491.10 L838.5,491.10 L839.0,491.10 L839.5,491.10 L840.0,491.10 L840.5,491.10 L841.0,491.10 L841.5,491.10 L842.0,491.10 L842.5,491.10 L843.0,491.10 L843.5,491.10 L844.0,491.10 L844.5,491.10 L845.0,491.10 L845.5,491.10 L846.0,491.10 L846.5,491.10 L847.0,491.10 L847.5,491.10 L848.0,491.10 L848.5,491.10 L849.0,491.10 L849.5,491.10 L850.0,491.10 L850.5,491.10 L851.0,491.10 L851.5,491.10 L852.0,491.10 L852.5,491.10 L853.0,491.10 L853.5,491.10 L854.0,491.10 L854.5,491.10 L855.0,491.10 L855.5,491.10 L856.0,491.10 L856.5,491.10 L857.0,491.10 L857.5,491.10 L858.0,491.10 L858.5,491.10 L859.0,491.10 L859.5,491.10 L860.0,491.10 L860.5,491.10 L861.0,491.10 L861.5,491.10 L862.0,491.10 L862.5,491.10 L863.0,491.10 L863.5,491.10 L864.0,491.10 L864.5,491.10 L865.0,491.10 L865.5,491.10 L866.0,491.10 L866.5,491.10 L867.0,491.10 L867.5,491.10 L868.0,491.10 L868.5,491.10 L869.0,491.10 L869.5,491.10 L870.0,491.10 L870.5,491.10 L871.0,491.10 L871.5,491.10 L872.0,491.10 L872.5,491.10 L873.0,491.10 L873.5,491.10 L874.0,491.10 L874.5,491.10 L875.0,491.10 L875.5,491.10 L876.0,491.10 L876.5,491.10 L877.0,491.10 L877.5,491.10 L878.0,491.10 L878.5,491.10 L879.0,491.10 L879.5,491.10 L880.0,491.10 L880.5,491.10 L881.0,491.10 L881.5,491.10 L882.0,491.10 L882.5,491.10 L883.0,491.10 L883.5,491.10 L884.0,491.10 L884.5,491.10 L885.0,491.10 L885.5,491.10 L886.0,491.10 L886.5,491.10 L887.0,491.10 L887.5,491.10 L888.0,491.10 L888.5,491.10 L889.0,491.10 L889.5,491.10 L890.0,491.10 L890.5,491.10 L891.0,491.10 L891.5,491.10 L892.0,491.10 L892.5,491.10 L893.0,491.10 L893.5,491.10 L894.0,491.10 L894.5,491.10 L895.0,491.10 L895.5,491.10 L896.0,491.10 L896.5,491.10 L897.0,491.10 L897.5,491.10 L898.0,491.10 L898.0,491.1 L0,491.1 Z" fill="#9a98ee"/><path d="M0.0,491.10 L0.5,491.10 L1.0,491.10 L1.5,491.10 L2.0,491.10 L2.5,491.10 L3.0,491.10 L3.5,491.10 L4.0,491.10 L4.5,491.10 L5.0,491.10 L5.5,491.10 L6.0,491.10 L6.5,491.10 L7.0,491.10 L7.5,491.10 L8.0,491.10 L8.5,491.10 L9.0,491.10 L9.5,491.10 L10.0,491.10 L10.5,491.10 L11.0,491.10 L11.5,491.10 L12.0,491.10 L12.5,491.10 L13.0,491.10 L13.5,491.10 L14.0,491.10 L14.5,491.10 L15.0,491.10 L15.5,491.10 L16.0,491.10 L16.5,491.10 L17.0,491.10 L17.5,491.10 L18.0,491.10 L18.5,491.10 L19.0,491.10 L19.5,491.10 L20.0,491.10 L20.5,491.10 L21.0,491.10 L21.5,491.10 L22.0,491.10 L22.5,491.10 L23.0,491.10 L23.5,491.10 L24.0,491.10 L24.5,491.10 L25.0,491.10 L25.5,491.10 L26.0,491.10 L26.5,491.10 L27.0,491.10 L27.5,491.10 L28.0,491.10 L28.5,491.10 L29.0,491.10 L29.5,491.10 L30.0,491.10 L30.5,491.10 L31.0,491.10 L31.5,491.10 L32.0,491.10 L32.5,491.10 L33.0,491.10 L33.5,491.10 L34.0,491.10 L34.5,491.10 L35.0,491.10 L35.5,491.10 L36.0,491.10 L36.5,491.10 L37.0,491.10 L37.5,491.10 L38.0,491.10 L38.5,491.10 L39.0,491.10 L39.5,491.10 L40.0,491.10 L40.5,491.10 L41.0,491.10 L41.5,491.10 L42.0,491.10 L42.5,491.10 L43.0,491.10 L43.5,491.10 L44.0,491.10 L44.5,491.10 L45.0,491.10 L45.5,491.10 L46.0,491.10 L46.5,491.10 L47.0,491.10 L47.5,491.10 L48.0,491.10 L48.5,491.10 L49.0,491.10 L49.5,491.10 L50.0,491.10 L50.5,491.10 L51.0,491.10 L51.5,491.10 L52.0,491.10 L52.5,491.10 L53.0,491.10 L53.5,491.10 L54.0,491.10 L54.5,491.10 L55.0,491.10 L55.5,491.10 L56.0,491.10 L56.5,491.10 L57.0,491.10 L57.5,491.10 L58.0,491.10 L58.5,491.10 L59.0,491.10 L59.5,491.10 L60.0,491.10 L60.5,491.10 L61.0,491.10 L61.5,491.10 L62.0,491.10 L62.5,491.10 L63.0,491.10 L63.5,491.10 L64.0,491.10 L64.5,491.10 L65.0,491.10 L65.5,491.10 L66.0,491.10 L66.5,491.10 L67.0,491.10 L67.5,491.10 L68.0,491.10 L68.5,491.10 L69.0,491.10 L69.5,491.10 L70.0,491.10 L70.5,491.10 L71.0,491.10 L71.5,491.10 L72.0,491.10 L72.5,491.10 L73.0,491.10 L73.5,491.10 L74.0,491.10 L74.5,491.10 L75.0,491.10 L75.5,491.10 L76.0,491.10 L76.5,491.10 L77.0,491.10 L77.5,491.10 L78.0,491.10 L78.5,491.10 L79.0,491.10 L79.5,491.10 L80.0,491.10 L80.5,491.10 L81.0,491.10 L81.5,491.10 L82.0,491.10 L82.5,491.10 L83.0,491.10 L83.5,491.10 L84.0,491.10 L84.5,491.10 L85.0,491.10 L85.5,491.10 L86.0,491.10 L86.5,491.10 L87.0,491.10 L87.5,491.10 L88.0,491.10 L88.5,491.10 L89.0,491.10 L89.5,491.10 L90.0,491.10 L90.5,491.10 L91.0,491.10 L91.5,491.10 L92.0,491.10 L92.5,491.10 L93.0,491.10 L93.5,491.10 L94.0,491.10 L94.5,491.10 L95.0,491.10 L95.5,491.10 L96.0,491.10 L96.5,491.10 L97.0,491.10 L97.5,491.10 L98.0,491.10 L98.5,491.10 L99.0,491.10 L99.5,491.10 L100.0,491.10 L100.5,491.10 L101.0,491.10 L101.5,491.10 L102.0,491.10 L102.5,491.10 L103.0,491.10 L103.5,491.10 L104.0,491.10 L104.5,491.10 L105.0,491.10 L105.5,491.10 L106.0,491.10 L106.5,491.10 L107.0,491.10 L107.5,491.10 L108.0,491.10 L108.5,491.10 L109.0,491.10 L109.5,491.10 L110.0,491.10 L110.5,491.10 L111.0,491.10 L111.5,491.10 L112.0,491.10 L112.5,491.10 L113.0,491.10 L113.5,491.10 L114.0,491.10 L114.5,491.10 L115.0,491.10 L115.5,491.10 L116.0,491.10 L116.5,491.10 L117.0,491.10 L117.5,491.10 L118.0,491.10 L118.5,491.10 L119.0,491.10 L119.5,491.10 L120.0,491.10 L120.5,491.10 L121.0,491.10 L121.5,491.10 L122.0,491.10 L122.5,491.10 L123.0,491.10 L123.5,491.10 L124.0,491.10 L124.5,491.10 L125.0,491.10 L125.5,491.10 L126.0,491.10 L126.5,491.10 L127.0,491.10 L127.5,491.10 L128.0,491.10 L128.5,491.10 L129.0,491.10 L129.5,491.10 L130.0,491.10 L130.5,491.10 L131.0,491.10 L131.5,491.10 L132.0,491.10 L132.5,491.10 L133.0,491.10 L133.5,491.10 L134.0,491.10 L134.5,491.10 L135.0,491.05 L135.5,491.04 L136.0,491.02 L136.5,491.01 L137.0,490.99 L137.5,490.96 L138.0,490.93 L138.5,490.90 L139.0,490.86 L139.5,490.82 L140.0,490.77 L140.5,490.71 L141.0,490.64 L141.5,490.56 L142.0,490.47 L142.5,490.36 L143.0,490.24 L143.5,490.11 L144.0,489.95 L144.5,489.78 L145.0,489.59 L145.5,489.37 L146.0,489.13 L146.5,488.86 L147.0,488.56 L147.5,488.24 L148.0,487.88 L148.5,487.49 L149.0,487.06 L149.5,486.60 L150.0,486.09 L150.5,485.55 L151.0,484.97 L151.5,484.35 L152.0,483.69 L152.5,482.98 L153.0,482.24 L153.5,481.45 L154.0,480.62 L154.5,479.76 L155.0,478.85 L155.5,477.92 L156.0,476.95 L156.5,475.95 L157.0,474.92 L157.5,473.86 L158.0,472.79 L158.5,471.70 L159.0,470.59 L159.5,469.48 L160.0,468.36 L160.5,467.24 L161.0,466.12 L161.5,465.02 L162.0,463.92 L162.5,462.84 L163.0,461.77 L163.5,460.74 L164.0,459.73 L164.5,458.74 L165.0,457.80 L165.5,456.89 L166.0,456.01 L166.5,455.18 L167.0,454.39 L167.5,453.64 L168.0,452.94 L168.5,452.28 L169.0,451.66 L169.5,451.09 L170.0,450.57 L170.5,450.08 L171.0,449.64 L171.5,449.24 L172.0,448.89 L172.5,448.57 L173.0,448.28 L173.5,448.04 L174.0,447.82 L174.5,447.64 L175.0,447.48 L175.5,447.36 L176.0,447.26 L176.5,447.18 L177.0,447.12 L177.5,447.08 L178.0,447.07 L178.5,447.06 L179.0,447.08 L179.5,447.10 L180.0,447.14 L180.5,447.19 L181.0,447.24 L181.5,447.31 L182.0,447.38 L182.5,447.46 L183.0,447.55 L183.5,447.63 L184.0,447.73 L184.5,447.83 L185.0,447.93 L185.5,448.03 L186.0,448.14 L186.5,448.24 L187.0,448.35 L187.5,448.46 L188.0,448.57 L188.5,448.69 L189.0,448.80 L189.5,448.91 L190.0,449.03 L190.5,449.14 L191.0,449.26 L191.5,449.37 L192.0,449.49 L192.5,449.61 L193.0,449.72 L193.5,449.84 L194.0,449.95 L194.5,450.07 L195.0,450.19 L195.5,450.30 L196.0,450.42 L196.5,450.54 L197.0,450.65 L197.5,450.77 L198.0,450.89 L198.5,451.00 L199.0,451.12 L199.5,451.24 L200.0,451.36 L200.5,451.47 L201.0,451.59 L201.5,451.71 L202.0,451.82 L202.5,451.94 L203.0,452.06 L203.5,452.17 L204.0,452.29 L204.5,452.41 L205.0,452.52 L205.5,452.64 L206.0,452.76 L206.5,452.87 L207.0,452.99 L207.5,453.11 L208.0,453.22 L208.5,453.34 L209.0,453.46 L209.5,453.57 L210.0,453.69 L210.5,453.81 L211.0,453.93 L211.5,454.04 L212.0,454.16 L212.5,454.28 L213.0,454.39 L213.5,454.51 L214.0,454.63 L214.5,454.74 L215.0,454.86 L215.5,454.98 L216.0,455.09 L216.5,455.21 L217.0,455.33 L217.5,455.44 L218.0,455.56 L218.5,455.68 L219.0,455.79 L219.5,455.91 L220.0,456.03 L220.5,456.14 L221.0,456.26 L221.5,456.38 L222.0,456.50 L222.5,456.61 L223.0,456.73 L223.5,456.85 L224.0,456.96 L224.5,457.08 L225.0,457.20 L225.5,457.31 L226.0,457.43 L226.5,457.55 L227.0,457.66 L227.5,457.78 L228.0,457.90 L228.5,458.01 L229.0,458.13 L229.5,458.25 L230.0,458.36 L230.5,458.48 L231.0,458.60 L231.5,458.71 L232.0,458.83 L232.5,458.95 L233.0,459.06 L233.5,459.18 L234.0,459.30 L234.5,459.42 L235.0,459.53 L235.5,459.65 L236.0,459.77 L236.5,459.88 L237.0,460.00 L237.5,460.12 L238.0,460.23 L238.5,460.35 L239.0,460.47 L239.5,460.58 L240.0,460.70 L240.5,460.82 L241.0,460.93 L241.5,461.05 L242.0,461.17 L242.5,461.28 L243.0,461.40 L243.5,461.52 L244.0,461.63 L244.5,461.75 L245.0,461.87 L245.5,461.99 L246.0,462.10 L246.5,462.22 L247.0,462.34 L247.5,462.45 L248.0,462.57 L248.5,462.69 L249.0,462.80 L249.5,462.92 L250.0,463.04 L250.5,463.15 L251.0,463.27 L251.5,463.39 L252.0,463.50 L252.5,463.62 L253.0,463.74 L253.5,463.85 L254.0,463.97 L254.5,464.09 L255.0,464.20 L255.5,464.32 L256.0,464.44 L256.5,464.56 L257.0,464.67 L257.5,464.79 L258.0,464.91 L258.5,465.02 L259.0,465.14 L259.5,465.26 L260.0,465.37 L260.5,465.49 L261.0,465.61 L261.5,465.72 L262.0,465.84 L262.5,465.96 L263.0,466.07 L263.5,466.19 L264.0,466.31 L264.5,466.42 L265.0,466.54 L265.5,466.66 L266.0,466.77 L266.5,466.89 L267.0,467.01 L267.5,467.13 L268.0,467.24 L268.5,467.36 L269.0,467.48 L269.5,467.59 L270.0,467.71 L270.5,467.83 L271.0,467.94 L271.5,468.06 L272.0,468.18 L272.5,468.29 L273.0,468.41 L273.5,468.53 L274.0,468.65 L274.5,468.76 L275.0,468.88 L275.5,469.00 L276.0,469.11 L276.5,469.23 L277.0,469.35 L277.5,469.47 L278.0,469.58 L278.5,469.70 L279.0,469.82 L279.5,469.94 L280.0,470.06 L280.5,470.17 L281.0,470.29 L281.5,470.41 L282.0,470.53 L282.5,470.65 L283.0,470.77 L283.5,470.89 L284.0,471.01 L284.5,471.13 L285.0,471.25 L285.5,471.37 L286.0,471.49 L286.5,471.61 L287.0,471.74 L287.5,471.86 L288.0,471.98 L288.5,472.11 L289.0,472.23 L289.5,472.36 L290.0,472.48 L290.5,472.61 L291.0,472.74 L291.5,472.87 L292.0,473.00 L292.5,473.13 L293.0,473.26 L293.5,473.40 L294.0,473.53 L294.5,473.67 L295.0,473.80 L295.5,473.94 L296.0,474.09 L296.5,474.23 L297.0,474.37 L297.5,474.52 L298.0,474.67 L298.5,474.82 L299.0,474.97 L299.5,475.13 L300.0,475.28 L300.5,475.44 L301.0,475.61 L301.5,475.77 L302.0,475.94 L302.5,476.11 L303.0,476.28 L303.5,476.45 L304.0,476.63 L304.5,476.81 L305.0,477.00 L305.5,477.18 L306.0,477.37 L306.5,477.56 L307.0,477.76 L307.5,477.96 L308.0,478.16 L308.5,478.36 L309.0,478.57 L309.5,478.77 L310.0,478.99 L310.5,479.20 L311.0,479.42 L311.5,479.63 L312.0,479.86 L312.5,480.08 L313.0,480.30 L313.5,480.53 L314.0,480.76 L314.5,480.99 L315.0,481.22 L315.5,481.45 L316.0,481.68 L316.5,481.92 L317.0,482.15 L317.5,482.39 L318.0,482.62 L318.5,482.86 L319.0,483.09 L319.5,483.32 L320.0,483.56 L320.5,483.79 L321.0,484.02 L321.5,484.25 L322.0,484.47 L322.5,484.70 L323.0,484.92 L323.5,485.14 L324.0,485.35 L324.5,485.57 L325.0,485.78 L325.5,485.99 L326.0,486.19 L326.5,486.39 L327.0,486.59 L327.5,486.78 L328.0,486.97 L328.5,487.15 L329.0,487.33 L329.5,487.50 L330.0,487.67 L330.5,487.84 L331.0,488.00 L331.5,488.15 L332.0,488.31 L332.5,488.45 L333.0,488.59 L333.5,488.73 L334.0,488.86 L334.5,488.98 L335.0,489.11 L335.5,489.22 L336.0,489.33 L336.5,489.44 L337.0,489.54 L337.5,489.64 L338.0,489.73 L338.5,489.82 L339.0,489.90 L339.5,489.98 L340.0,490.06 L340.5,490.13 L341.0,490.20 L341.5,490.26 L342.0,490.32 L342.5,490.38 L343.0,490.43 L343.5,490.48 L344.0,490.53 L344.5,490.57 L345.0,490.61 L345.5,490.65 L346.0,490.69 L346.5,490.72 L347.0,490.75 L347.5,490.78 L348.0,490.81 L348.5,490.83 L349.0,490.86 L349.5,490.88 L350.0,490.90 L350.5,490.92 L351.0,490.93 L351.5,490.95 L352.0,490.96 L352.5,490.98 L353.0,490.99 L353.5,491.00 L354.0,491.01 L354.5,491.02 L355.0,491.03 L355.5,491.03 L356.0,491.04 L356.5,491.05 L357.0,491.10 L357.5,491.10 L358.0,491.10 L358.5,491.10 L359.0,491.10 L359.5,491.10 L360.0,491.10 L360.5,491.10 L361.0,491.10 L361.5,491.10 L362.0,491.10 L362.5,491.10 L363.0,491.10 L363.5,491.10 L364.0,491.10 L364.5,491.10 L365.0,491.10 L365.5,491.10 L366.0,491.10 L366.5,491.10 L367.0,491.10 L367.5,491.10 L368.0,491.10 L368.5,491.10 L369.0,491.10 L369.5,491.10 L370.0,491.10 L370.5,491.10 L371.0,491.10 L371.5,491.10 L372.0,491.10 L372.5,491.10 L373.0,491.10 L373.5,491.10 L374.0,491.10 L374.5,491.10 L375.0,491.10 L375.5,491.10 L376.0,491.10 L376.5,491.10 L377.0,491.10 L377.5,491.10 L378.0,491.10 L378.5,491.10 L379.0,491.10 L379.5,491.10 L380.0,491.10 L380.5,491.10 L381.0,491.10 L381.5,491.10 L382.0,491.10 L382.5,491.10 L383.0,491.10 L383.5,491.10 L384.0,491.10 L384.5,491.10 L385.0,491.10 L385.5,491.10 L386.0,491.10 L386.5,491.10 L387.0,491.10 L387.5,491.10 L388.0,491.10 L388.5,491.10 L389.0,491.10 L389.5,491.10 L390.0,491.10 L390.5,491.10 L391.0,491.10 L391.5,491.10 L392.0,491.10 L392.5,491.10 L393.0,491.10 L393.5,491.10 L394.0,491.10 L394.5,491.10 L395.0,491.10 L395.5,491.10 L396.0,491.10 L396.5,491.10 L397.0,491.10 L397.5,491.10 L398.0,491.10 L398.5,491.10 L399.0,491.10 L399.5,491.10 L400.0,491.10 L400.5,491.10 L401.0,491.10 L401.5,491.10 L402.0,491.10 L402.5,491.10 L403.0,491.10 L403.5,491.10 L404.0,491.10 L404.5,491.10 L405.0,491.10 L405.5,491.10 L406.0,491.10 L406.5,491.10 L407.0,491.10 L407.5,491.10 L408.0,491.10 L408.5,491.10 L409.0,491.10 L409.5,491.10 L410.0,491.10 L410.5,491.10 L411.0,491.10 L411.5,491.10 L412.0,491.10 L412.5,491.10 L413.0,491.10 L413.5,491.10 L414.0,491.10 L414.5,491.10 L415.0,491.10 L415.5,491.10 L416.0,491.10 L416.5,491.10 L417.0,491.10 L417.5,491.10 L418.0,491.10 L418.5,491.10 L419.0,491.10 L419.5,491.10 L420.0,491.10 L420.5,491.10 L421.0,491.10 L421.5,491.10 L422.0,491.10 L422.5,491.10 L423.0,491.10 L423.5,491.10 L424.0,491.10 L424.5,491.10 L425.0,491.10 L425.5,491.10 L426.0,491.10 L426.5,491.10 L427.0,491.10 L427.5,491.10 L428.0,491.10 L428.5,491.10 L429.0,491.10 L429.5,491.10 L430.0,491.10 L430.5,491.10 L431.0,491.10 L431.5,491.10 L432.0,491.10 L432.5,491.10 L433.0,491.10 L433.5,491.10 L434.0,491.10 L434.5,491.10 L435.0,491.10 L435.5,491.10 L436.0,491.10 L436.5,491.10 L437.0,491.10 L437.5,491.10 L438.0,491.10 L438.5,491.10 L439.0,491.10 L439.5,491.10 L440.0,491.10 L440.5,491.10 L441.0,491.10 L441.5,491.10 L442.0,491.10 L442.5,491.10 L443.0,491.10 L443.5,491.10 L444.0,491.10 L444.5,491.10 L445.0,491.10 L445.5,491.10 L446.0,491.10 L446.5,491.10 L447.0,491.10 L447.5,491.10 L448.0,491.10 L448.5,491.10 L449.0,491.10 L449.5,491.10 L450.0,491.10 L450.5,491.10 L451.0,491.10 L451.5,491.10 L452.0,491.10 L452.5,491.10 L453.0,491.10 L453.5,491.10 L454.0,491.10 L454.5,491.10 L455.0,491.10 L455.5,491.10 L456.0,491.10 L456.5,491.10 L457.0,491.10 L457.5,491.10 L458.0,491.10 L458.5,491.10 L459.0,491.10 L459.5,491.10 L460.0,491.10 L460.5,491.10 L461.0,491.10 L461.5,491.10 L462.0,491.10 L462.5,491.10 L463.0,491.10 L463.5,491.10 L464.0,491.10 L464.5,491.10 L465.0,491.10 L465.5,491.10 L466.0,491.10 L466.5,491.10 L467.0,491.10 L467.5,491.10 L468.0,491.10 L468.5,491.10 L469.0,491.10 L469.5,491.10 L470.0,491.10 L470.5,491.10 L471.0,491.10 L471.5,491.10 L472.0,491.10 L472.5,491.10 L473.0,491.10 L473.5,491.10 L474.0,491.10 L474.5,491.10 L475.0,491.10 L475.5,491.10 L476.0,491.10 L476.5,491.10 L477.0,491.10 L477.5,491.10 L478.0,491.10 L478.5,491.10 L479.0,491.10 L479.5,491.10 L480.0,491.10 L480.5,491.10 L481.0,491.10 L481.5,491.10 L482.0,491.10 L482.5,491.10 L483.0,491.10 L483.5,491.10 L484.0,491.10 L484.5,491.10 L485.0,491.10 L485.5,491.10 L486.0,491.10 L486.5,491.10 L487.0,491.10 L487.5,491.10 L488.0,491.10 L488.5,491.10 L489.0,491.10 L489.5,491.10 L490.0,491.10 L490.5,491.10 L491.0,491.10 L491.5,491.10 L492.0,491.10 L492.5,491.10 L493.0,491.10 L493.5,491.10 L494.0,491.10 L494.5,491.10 L495.0,491.10 L495.5,491.10 L496.0,491.10 L496.5,491.10 L497.0,491.10 L497.5,491.10 L498.0,491.10 L498.5,491.10 L499.0,491.10 L499.5,491.10 L500.0,491.10 L500.5,491.10 L501.0,491.10 L501.5,491.10 L502.0,491.10 L502.5,491.10 L503.0,491.10 L503.5,491.10 L504.0,491.10 L504.5,491.10 L505.0,491.10 L505.5,491.10 L506.0,491.10 L506.5,491.10 L507.0,491.10 L507.5,491.10 L508.0,491.10 L508.5,491.10 L509.0,491.10 L509.5,491.10 L510.0,491.10 L510.5,491.10 L511.0,491.10 L511.5,491.10 L512.0,491.10 L512.5,491.10 L513.0,491.10 L513.5,491.10 L514.0,491.10 L514.5,491.10 L515.0,491.10 L515.5,491.10 L516.0,491.10 L516.5,491.10 L517.0,491.10 L517.5,491.10 L518.0,491.10 L518.5,491.10 L519.0,491.10 L519.5,491.10 L520.0,491.10 L520.5,491.10 L521.0,491.10 L521.5,491.10 L522.0,491.10 L522.5,491.10 L523.0,491.10 L523.5,491.10 L524.0,491.10 L524.5,491.10 L525.0,491.10 L525.5,491.10 L526.0,491.10 L526.5,491.10 L527.0,491.10 L527.5,491.10 L528.0,491.10 L528.5,491.10 L529.0,491.10 L529.5,491.10 L530.0,491.10 L530.5,491.10 L531.0,491.10 L531.5,491.10 L532.0,491.10 L532.5,491.10 L533.0,491.10 L533.5,491.10 L534.0,491.10 L534.5,491.10 L535.0,491.10 L535.5,491.10 L536.0,491.10 L536.5,491.10 L537.0,491.10 L537.5,491.10 L538.0,491.10 L538.5,491.10 L539.0,491.10 L539.5,491.10 L540.0,491.10 L540.5,491.10 L541.0,491.10 L541.5,491.10 L542.0,491.10 L542.5,491.10 L543.0,491.10 L543.5,491.10 L544.0,491.10 L544.5,491.10 L545.0,491.10 L545.5,491.10 L546.0,491.10 L546.5,491.10 L547.0,491.10 L547.5,491.10 L548.0,491.10 L548.5,491.10 L549.0,491.10 L549.5,491.10 L550.0,491.10 L550.5,491.10 L551.0,491.10 L551.5,491.10 L552.0,491.10 L552.5,491.10 L553.0,491.10 L553.5,491.10 L554.0,491.10 L554.5,491.10 L555.0,491.10 L555.5,491.10 L556.0,491.10 L556.5,491.10 L557.0,491.10 L557.5,491.10 L558.0,491.10 L558.5,491.10 L559.0,491.10 L559.5,491.10 L560.0,491.10 L560.5,491.10 L561.0,491.10 L561.5,491.10 L562.0,491.10 L562.5,491.10 L563.0,491.10 L563.5,491.10 L564.0,491.10 L564.5,491.10 L565.0,491.10 L565.5,491.10 L566.0,491.10 L566.5,491.10 L567.0,491.10 L567.5,491.10 L568.0,491.10 L568.5,491.10 L569.0,491.10 L569.5,491.10 L570.0,491.10 L570.5,491.10 L571.0,491.10 L571.5,491.10 L572.0,491.10 L572.5,491.10 L573.0,491.10 L573.5,491.10 L574.0,491.10 L574.5,491.10 L575.0,491.10 L575.5,491.10 L576.0,491.10 L576.5,491.10 L577.0,491.10 L577.5,491.10 L578.0,491.10 L578.5,491.10 L579.0,491.10 L579.5,491.10 L580.0,491.10 L580.5,491.10 L581.0,491.10 L581.5,491.10 L582.0,491.10 L582.5,491.10 L583.0,491.10 L583.5,491.10 L584.0,491.10 L584.5,491.10 L585.0,491.10 L585.5,491.10 L586.0,491.10 L586.5,491.10 L587.0,491.10 L587.5,491.10 L588.0,491.10 L588.5,491.10 L589.0,491.10 L589.5,491.10 L590.0,491.10 L590.5,491.10 L591.0,491.10 L591.5,491.10 L592.0,491.10 L592.5,491.10 L593.0,491.10 L593.5,491.10 L594.0,491.10 L594.5,491.10 L595.0,491.10 L595.5,491.10 L596.0,491.10 L596.5,491.10 L597.0,491.10 L597.5,491.10 L598.0,491.10 L598.5,491.10 L599.0,491.10 L599.5,491.10 L600.0,491.10 L600.5,491.10 L601.0,491.10 L601.5,491.10 L602.0,491.10 L602.5,491.10 L603.0,491.10 L603.5,491.10 L604.0,491.10 L604.5,491.10 L605.0,491.10 L605.5,491.10 L606.0,491.10 L606.5,491.10 L607.0,491.10 L607.5,491.10 L608.0,491.10 L608.5,491.10 L609.0,491.10 L609.5,491.10 L610.0,491.10 L610.5,491.10 L611.0,491.10 L611.5,491.10 L612.0,491.10 L612.5,491.10 L613.0,491.10 L613.5,491.10 L614.0,491.10 L614.5,491.10 L615.0,491.10 L615.5,491.10 L616.0,491.10 L616.5,491.10 L617.0,491.10 L617.5,491.10 L618.0,491.10 L618.5,491.10 L619.0,491.10 L619.5,491.10 L620.0,491.10 L620.5,491.10 L621.0,491.10 L621.5,491.10 L622.0,491.10 L622.5,491.10 L623.0,491.10 L623.5,491.10 L624.0,491.10 L624.5,491.10 L625.0,491.10 L625.5,491.10 L626.0,491.10 L626.5,491.10 L627.0,491.10 L627.5,491.10 L628.0,491.10 L628.5,491.10 L629.0,491.10 L629.5,491.10 L630.0,491.10 L630.5,491.10 L631.0,491.10 L631.5,491.10 L632.0,491.10 L632.5,491.10 L633.0,491.10 L633.5,491.10 L634.0,491.10 L634.5,491.10 L635.0,491.10 L635.5,491.10 L636.0,491.10 L636.5,491.10 L637.0,491.10 L637.5,491.10 L638.0,491.10 L638.5,491.10 L639.0,491.10 L639.5,491.10 L640.0,491.10 L640.5,491.10 L641.0,491.10 L641.5,491.10 L642.0,491.10 L642.5,491.10 L643.0,491.10 L643.5,491.10 L644.0,491.10 L644.5,491.10 L645.0,491.10 L645.5,491.10 L646.0,491.10 L646.5,491.10 L647.0,491.10 L647.5,491.10 L648.0,491.10 L648.5,491.10 L649.0,491.10 L649.5,491.10 L650.0,491.10 L650.5,491.10 L651.0,491.10 L651.5,491.10 L652.0,491.10 L652.5,491.10 L653.0,491.10 L653.5,491.10 L654.0,491.10 L654.5,491.10 L655.0,491.10 L655.5,491.10 L656.0,491.10 L656.5,491.10 L657.0,491.10 L657.5,491.10 L658.0,491.10 L658.5,491.10 L659.0,491.10 L659.5,491.10 L660.0,491.10 L660.5,491.10 L661.0,491.10 L661.5,491.10 L662.0,491.10 L662.5,491.10 L663.0,491.10 L663.5,491.10 L664.0,491.10 L664.5,491.10 L665.0,491.10 L665.5,491.10 L666.0,491.10 L666.5,491.10 L667.0,491.10 L667.5,491.10 L668.0,491.10 L668.5,491.10 L669.0,491.10 L669.5,491.10 L670.0,491.10 L670.5,491.10 L671.0,491.10 L671.5,491.10 L672.0,491.10 L672.5,491.10 L673.0,491.10 L673.5,491.10 L674.0,491.10 L674.5,491.10 L675.0,491.10 L675.5,491.10 L676.0,491.10 L676.5,491.10 L677.0,491.10 L677.5,491.10 L678.0,491.10 L678.5,491.10 L679.0,491.10 L679.5,491.10 L680.0,491.10 L680.5,491.10 L681.0,491.10 L681.5,491.10 L682.0,491.10 L682.5,491.10 L683.0,491.10 L683.5,491.10 L684.0,491.10 L684.5,491.10 L685.0,491.10 L685.5,491.10 L686.0,491.10 L686.5,491.10 L687.0,491.10 L687.5,491.10 L688.0,491.10 L688.5,491.10 L689.0,491.10 L689.5,491.10 L690.0,491.10 L690.5,491.10 L691.0,491.10 L691.5,491.10 L692.0,491.10 L692.5,491.10 L693.0,491.10 L693.5,491.10 L694.0,491.10 L694.5,491.10 L695.0,491.10 L695.5,491.10 L696.0,491.10 L696.5,491.10 L697.0,491.10 L697.5,491.10 L698.0,491.10 L698.5,491.10 L699.0,491.10 L699.5,491.10 L700.0,491.10 L700.5,491.10 L701.0,491.10 L701.5,491.10 L702.0,491.10 L702.5,491.10 L703.0,491.10 L703.5,491.10 L704.0,491.10 L704.5,491.10 L705.0,491.10 L705.5,491.10 L706.0,491.10 L706.5,491.10 L707.0,491.10 L707.5,491.10 L708.0,491.10 L708.5,491.10 L709.0,491.10 L709.5,491.10 L710.0,491.10 L710.5,491.10 L711.0,491.10 L711.5,491.10 L712.0,491.10 L712.5,491.10 L713.0,491.10 L713.5,491.10 L714.0,491.10 L714.5,491.10 L715.0,491.10 L715.5,491.10 L716.0,491.10 L716.5,491.10 L717.0,491.10 L717.5,491.10 L718.0,491.10 L718.5,491.10 L719.0,491.10 L719.5,491.10 L720.0,491.10 L720.5,491.10 L721.0,491.10 L721.5,491.10 L722.0,491.10 L722.5,491.10 L723.0,491.10 L723.5,491.10 L724.0,491.10 L724.5,491.10 L725.0,491.10 L725.5,491.10 L726.0,491.10 L726.5,491.10 L727.0,491.10 L727.5,491.10 L728.0,491.10 L728.5,491.10 L729.0,491.10 L729.5,491.10 L730.0,491.10 L730.5,491.10 L731.0,491.10 L731.5,491.10 L732.0,491.10 L732.5,491.10 L733.0,491.10 L733.5,491.10 L734.0,491.10 L734.5,491.10 L735.0,491.10 L735.5,491.10 L736.0,491.10 L736.5,491.10 L737.0,491.10 L737.5,491.10 L738.0,491.10 L738.5,491.10 L739.0,491.10 L739.5,491.10 L740.0,491.10 L740.5,491.10 L741.0,491.10 L741.5,491.10 L742.0,491.10 L742.5,491.10 L743.0,491.10 L743.5,491.10 L744.0,491.10 L744.5,491.10 L745.0,491.10 L745.5,491.10 L746.0,491.10 L746.5,491.10 L747.0,491.10 L747.5,491.10 L748.0,491.10 L748.5,491.10 L749.0,491.10 L749.5,491.10 L750.0,491.10 L750.5,491.10 L751.0,491.10 L751.5,491.10 L752.0,491.10 L752.5,491.10 L753.0,491.10 L753.5,491.10 L754.0,491.10 L754.5,491.10 L755.0,491.10 L755.5,491.10 L756.0,491.10 L756.5,491.10 L757.0,491.10 L757.5,491.10 L758.0,491.10 L758.5,491.10 L759.0,491.10 L759.5,491.10 L760.0,491.10 L760.5,491.10 L761.0,491.10 L761.5,491.10 L762.0,491.10 L762.5,491.10 L763.0,491.10 L763.5,491.10 L764.0,491.10 L764.5,491.10 L765.0,491.10 L765.5,491.10 L766.0,491.10 L766.5,491.10 L767.0,491.10 L767.5,491.10 L768.0,491.10 L768.5,491.10 L769.0,491.10 L769.5,491.10 L770.0,491.10 L770.5,491.10 L771.0,491.10 L771.5,491.10 L772.0,491.10 L772.5,491.10 L773.0,491.10 L773.5,491.10 L774.0,491.10 L774.5,491.10 L775.0,491.10 L775.5,491.10 L776.0,491.10 L776.5,491.10 L777.0,491.10 L777.5,491.10 L778.0,491.10 L778.5,491.10 L779.0,491.10 L779.5,491.10 L780.0,491.10 L780.5,491.10 L781.0,491.10 L781.5,491.10 L782.0,491.10 L782.5,491.10 L783.0,491.10 L783.5,491.10 L784.0,491.10 L784.5,491.10 L785.0,491.10 L785.5,491.10 L786.0,491.10 L786.5,491.10 L787.0,491.10 L787.5,491.10 L788.0,491.10 L788.5,491.10 L789.0,491.10 L789.5,491.10 L790.0,491.10 L790.5,491.10 L791.0,491.10 L791.5,491.10 L792.0,491.10 L792.5,491.10 L793.0,491.10 L793.5,491.10 L794.0,491.10 L794.5,491.10 L795.0,491.10 L795.5,491.10 L796.0,491.10 L796.5,491.10 L797.0,491.10 L797.5,491.10 L798.0,491.10 L798.5,491.10 L799.0,491.10 L799.5,491.10 L800.0,491.10 L800.5,491.10 L801.0,491.10 L801.5,491.10 L802.0,491.10 L802.5,491.10 L803.0,491.10 L803.5,491.10 L804.0,491.10 L804.5,491.10 L805.0,491.10 L805.5,491.10 L806.0,491.10 L806.5,491.10 L807.0,491.10 L807.5,491.10 L808.0,491.10 L808.5,491.10 L809.0,491.10 L809.5,491.10 L810.0,491.10 L810.5,491.10 L811.0,491.10 L811.5,491.10 L812.0,491.10 L812.5,491.10 L813.0,491.10 L813.5,491.10 L814.0,491.10 L814.5,491.10 L815.0,491.10 L815.5,491.10 L816.0,491.10 L816.5,491.10 L817.0,491.10 L817.5,491.10 L818.0,491.10 L818.5,491.10 L819.0,491.10 L819.5,491.10 L820.0,491.10 L820.5,491.10 L821.0,491.10 L821.5,491.10 L822.0,491.10 L822.5,491.10 L823.0,491.10 L823.5,491.10 L824.0,491.10 L824.5,491.10 L825.0,491.10 L825.5,491.10 L826.0,491.10 L826.5,491.10 L827.0,491.10 L827.5,491.10 L828.0,491.10 L828.5,491.10 L829.0,491.10 L829.5,491.10 L830.0,491.10 L830.5,491.10 L831.0,491.10 L831.5,491.10 L832.0,491.10 L832.5,491.10 L833.0,491.10 L833.5,491.10 L834.0,491.10 L834.5,491.10 L835.0,491.10 L835.5,491.10 L836.0,491.10 L836.5,491.10 L837.0,491.10 L837.5,491.10 L838.0,491.10 L838.5,491.10 L839.0,491.10 L839.5,491.10 L840.0,491.10 L840.5,491.10 L841.0,491.10 L841.5,491.10 L842.0,491.10 L842.5,491.10 L843.0,491.10 L843.5,491.10 L844.0,491.10 L844.5,491.10 L845.0,491.10 L845.5,491.10 L846.0,491.10 L846.5,491.10 L847.0,491.10 L847.5,491.10 L848.0,491.10 L848.5,491.10 L849.0,491.10 L849.5,491.10 L850.0,491.10 L850.5,491.10 L851.0,491.10 L851.5,491.10 L852.0,491.10 L852.5,491.10 L853.0,491.10 L853.5,491.10 L854.0,491.10 L854.5,491.10 L855.0,491.10 L855.5,491.10 L856.0,491.10 L856.5,491.10 L857.0,491.10 L857.5,491.10 L858.0,491.10 L858.5,491.10 L859.0,491.10 L859.5,491.10 L860.0,491.10 L860.5,491.10 L861.0,491.10 L861.5,491.10 L862.0,491.10 L862.5,491.10 L863.0,491.10 L863.5,491.10 L864.0,491.10 L864.5,491.10 L865.0,491.10 L865.5,491.10 L866.0,491.10 L866.5,491.10 L867.0,491.10 L867.5,491.10 L868.0,491.10 L868.5,491.10 L869.0,491.10 L869.5,491.10 L870.0,491.10 L870.5,491.10 L871.0,491.10 L871.5,491.10 L872.0,491.10 L872.5,491.10 L873.0,491.10 L873.5,491.10 L874.0,491.10 L874.5,491.10 L875.0,491.10 L875.5,491.10 L876.0,491.10 L876.5,491.10 L877.0,491.10 L877.5,491.10 L878.0,491.10 L878.5,491.10 L879.0,491.10 L879.5,491.10 L880.0,491.10 L880.5,491.10 L881.0,491.10 L881.5,491.10 L882.0,491.10 L882.5,491.10 L883.0,491.10 L883.5,491.10 L884.0,491.10 L884.5,491.10 L885.0,491.10 L885.5,491.10 L886.0,491.10 L886.5,491.10 L887.0,491.10 L887.5,491.10 L888.0,491.10 L888.5,491.10 L889.0,491.10 L889.5,491.10 L890.0,491.10 L890.5,491.10 L891.0,491.10 L891.5,491.10 L892.0,491.10 L892.5,491.10 L893.0,491.10 L893.5,491.10 L894.0,491.10 L894.5,491.10 L895.0,491.10 L895.5,491.10 L896.0,491.10 L896.5,491.10 L897.0,491.10 L897.5,491.10 L898.0,491.10 L898.0,491.1 L0,491.1 Z" fill="#d4d29a"/><path d="M0.0,491.10 L0.5,491.10 L1.0,491.10 L1.5,491.10 L2.0,491.10 L2.5,491.10 L3.0,491.10 L3.5,491.10 L4.0,491.10 L4.5,491.10 L5.0,491.10 L5.5,491.10 L6.0,491.10 L6.5,491.10 L7.0,491.10 L7.5,491.10 L8.0,491.10 L8.5,491.10 L9.0,491.10 L9.5,491.10 L10.0,491.10 L10.5,491.10 L11.0,491.10 L11.5,491.10 L12.0,491.10 L12.5,491.10 L13.0,491.10 L13.5,491.10 L14.0,491.10 L14.5,491.10 L15.0,491.10 L15.5,491.10 L16.0,491.10 L16.5,491.10 L17.0,491.10 L17.5,491.10 L18.0,491.10 L18.5,491.10 L19.0,491.10 L19.5,491.10 L20.0,491.10 L20.5,491.10 L21.0,491.10 L21.5,491.10 L22.0,491.10 L22.5,491.10 L23.0,491.10 L23.5,491.10 L24.0,491.10 L24.5,491.10 L25.0,491.10 L25.5,491.10 L26.0,491.10 L26.5,491.10 L27.0,491.10 L27.5,491.10 L28.0,491.10 L28.5,491.10 L29.0,491.10 L29.5,491.10 L30.0,491.10 L30.5,491.10 L31.0,491.10 L31.5,491.10 L32.0,491.10 L32.5,491.10 L33.0,491.10 L33.5,491.10 L34.0,491.10 L34.5,491.10 L35.0,491.10 L35.5,491.10 L36.0,491.10 L36.5,491.10 L37.0,491.10 L37.5,491.10 L38.0,491.10 L38.5,491.10 L39.0,491.10 L39.5,491.10 L40.0,491.10 L40.5,491.10 L41.0,491.10 L41.5,491.10 L42.0,491.10 L42.5,491.10 L43.0,491.10 L43.5,491.10 L44.0,491.10 L44.5,491.10 L45.0,491.10 L45.5,491.10 L46.0,491.10 L46.5,491.10 L47.0,491.10 L47.5,491.10 L48.0,491.10 L48.5,491.10 L49.0,491.10 L49.5,491.10 L50.0,491.10 L50.5,491.10 L51.0,491.10 L51.5,491.10 L52.0,491.10 L52.5,491.10 L53.0,491.10 L53.5,491.10 L54.0,491.10 L54.5,491.10 L55.0,491.10 L55.5,491.10 L56.0,491.10 L56.5,491.10 L57.0,491.10 L57.5,491.10 L58.0,491.10 L58.5,491.10 L59.0,491.10 L59.5,491.10 L60.0,491.10 L60.5,491.10 L61.0,491.10 L61.5,491.10 L62.0,491.10 L62.5,491.10 L63.0,491.10 L63.5,491.10 L64.0,491.10 L64.5,491.10 L65.0,491.10 L65.5,491.10 L66.0,491.10 L66.5,491.10 L67.0,491.10 L67.5,491.10 L68.0,491.10 L68.5,491.10 L69.0,491.10 L69.5,491.10 L70.0,491.10 L70.5,491.10 L71.0,491.10 L71.5,491.10 L72.0,491.10 L72.5,491.10 L73.0,491.10 L73.5,491.10 L74.0,491.10 L74.5,491.10 L75.0,491.10 L75.5,491.10 L76.0,491.10 L76.5,491.10 L77.0,491.10 L77.5,491.10 L78.0,491.10 L78.5,491.10 L79.0,491.10 L79.5,491.10 L80.0,491.10 L80.5,491.10 L81.0,491.10 L81.5,491.10 L82.0,491.10 L82.5,491.10 L83.0,491.10 L83.5,491.10 L84.0,491.10 L84.5,491.10 L85.0,491.10 L85.5,491.10 L86.0,491.10 L86.5,491.10 L87.0,491.10 L87.5,491.10 L88.0,491.10 L88.5,491.10 L89.0,491.10 L89.5,491.10 L90.0,491.10 L90.5,491.10 L91.0,491.10 L91.5,491.10 L92.0,491.10 L92.5,491.10 L93.0,491.10 L93.5,491.10 L94.0,491.10 L94.5,491.10 L95.0,491.10 L95.5,491.10 L96.0,491.10 L96.5,491.10 L97.0,491.10 L97.5,491.10 L98.0,491.10 L98.5,491.10 L99.0,491.10 L99.5,491.10 L100.0,491.10 L100.5,491.10 L101.0,491.10 L101.5,491.10 L102.0,491.10 L102.5,491.10 L103.0,491.10 L103.5,491.10 L104.0,491.10 L104.5,491.10 L105.0,491.10 L105.5,491.10 L106.0,491.10 L106.5,491.10 L107.0,491.10 L107.5,491.10 L108.0,491.10 L108.5,491.10 L109.0,491.10 L109.5,491.10 L110.0,491.10 L110.5,491.10 L111.0,491.10 L111.5,491.10 L112.0,491.10 L112.5,491.10 L113.0,491.10 L113.5,491.10 L114.0,491.10 L114.5,491.10 L115.0,491.10 L115.5,491.10 L116.0,491.10 L116.5,491.10 L117.0,491.10 L117.5,491.10 L118.0,491.10 L118.5,491.10 L119.0,491.10 L119.5,491.10 L120.0,491.10 L120.5,491.10 L121.0,491.10 L121.5,491.10 L122.0,491.10 L122.5,491.10 L123.0,491.10 L123.5,491.10 L124.0,491.10 L124.5,491.10 L125.0,491.10 L125.5,491.10 L126.0,491.10 L126.5,491.10 L127.0,491.10 L127.5,491.10 L128.0,491.10 L128.5,491.10 L129.0,491.10 L129.5,491.10 L130.0,491.10 L130.5,491.10 L131.0,491.10 L131.5,491.10 L132.0,491.10 L132.5,491.10 L133.0,491.10 L133.5,491.10 L134.0,491.10 L134.5,491.10 L135.0,491.05 L135.5,491.04 L136.0,491.02 L136.5,491.01 L137.0,490.99 L137.5,490.96 L138.0,490.93 L138.5,490.90 L139.0,490.86 L139.5,490.82 L140.0,490.77 L140.5,490.71 L141.0,490.64 L141.5,490.56 L142.0,490.47 L142.5,490.36 L143.0,490.24 L143.5,490.11 L144.0,489.95 L144.5,489.78 L145.0,489.59 L145.5,489.37 L146.0,489.13 L146.5,488.86 L147.0,488.56 L147.5,488.24 L148.0,487.88 L148.5,487.49 L149.0,487.06 L149.5,486.60 L150.0,486.09 L150.5,485.55 L151.0,484.97 L151.5,484.35 L152.0,483.69 L152.5,482.98 L153.0,482.24 L153.5,481.45 L154.0,480.62 L154.5,479.76 L155.0,478.85 L155.5,477.92 L156.0,476.95 L156.5,475.95 L157.0,474.92 L157.5,473.86 L158.0,472.79 L158.5,471.70 L159.0,470.59 L159.5,469.48 L160.0,468.36 L160.5,467.24 L161.0,466.12 L161.5,465.02 L162.0,463.92 L162.5,462.84 L163.0,461.77 L163.5,460.74 L164.0,459.73 L164.5,458.74 L165.0,457.80 L165.5,456.89 L166.0,456.01 L166.5,455.18 L167.0,454.39 L167.5,453.64 L168.0,452.94 L168.5,452.28 L169.0,451.66 L169.5,451.09 L170.0,450.57 L170.5,450.08 L171.0,449.64 L171.5,449.24 L172.0,448.89 L172.5,448.57 L173.0,448.28 L173.5,448.04 L174.0,447.82 L174.5,447.64 L175.0,447.48 L175.5,447.36 L176.0,447.26 L176.5,447.18 L177.0,447.12 L177.5,447.08 L178.0,447.07 L178.5,447.06 L179.0,447.08 L179.5,447.10 L180.0,447.14 L180.5,447.19 L181.0,447.24 L181.5,447.31 L182.0,447.38 L182.5,447.77 L183.0,453.09 L183.5,457.88 L184.0,462.17 L184.5,466.00 L185.0,469.40 L185.5,472.40 L186.0,475.05 L186.5,477.38 L187.0,479.41 L187.5,481.17 L188.0,482.70 L188.5,484.02 L189.0,485.15 L189.5,486.12 L190.0,486.95 L190.5,487.65 L191.0,488.25 L191.5,488.75 L192.0,489.17 L192.5,489.52 L193.0,489.81 L193.5,490.05 L194.0,490.25 L194.5,490.41 L195.0,490.55 L195.5,490.66 L196.0,490.75 L196.5,490.82 L197.0,490.88 L197.5,490.92 L198.0,490.96 L198.5,490.99 L199.0,491.02 L199.5,491.03 L200.0,491.05 L200.5,491.10 L201.0,491.10 L201.5,491.10 L202.0,491.10 L202.5,491.10 L203.0,491.10 L203.5,491.10 L204.0,491.10 L204.5,491.10 L205.0,491.10 L205.5,491.10 L206.0,491.10 L206.5,491.10 L207.0,491.10 L207.5,491.10 L208.0,491.10 L208.5,491.10 L209.0,491.10 L209.5,491.10 L210.0,491.10 L210.5,491.10 L211.0,491.10 L211.5,491.10 L212.0,491.10 L212.5,491.10 L213.0,491.10 L213.5,491.10 L214.0,491.10 L214.5,491.10 L215.0,491.10 L215.5,491.10 L216.0,491.10 L216.5,491.10 L217.0,491.10 L217.5,491.10 L218.0,491.10 L218.5,491.10 L219.0,491.10 L219.5,491.10 L220.0,491.10 L220.5,491.10 L221.0,491.10 L221.5,491.10 L222.0,491.10 L222.5,491.10 L223.0,491.10 L223.5,491.10 L224.0,491.10 L224.5,491.10 L225.0,491.10 L225.5,491.10 L226.0,491.10 L226.5,491.10 L227.0,491.10 L227.5,491.10 L228.0,491.10 L228.5,491.10 L229.0,491.10 L229.5,491.10 L230.0,491.10 L230.5,491.10 L231.0,491.10 L231.5,491.10 L232.0,491.10 L232.5,491.10 L233.0,491.10 L233.5,491.10 L234.0,491.10 L234.5,491.10 L235.0,491.10 L235.5,491.10 L236.0,491.10 L236.5,491.10 L237.0,491.10 L237.5,491.10 L238.0,491.10 L238.5,491.10 L239.0,491.10 L239.5,491.10 L240.0,491.10 L240.5,491.10 L241.0,491.10 L241.5,491.10 L242.0,491.10 L242.5,491.10 L243.0,491.10 L243.5,491.10 L244.0,491.10 L244.5,491.10 L245.0,491.10 L245.5,491.10 L246.0,491.10 L246.5,491.10 L247.0,491.10 L247.5,491.10 L248.0,491.10 L248.5,491.10 L249.0,491.10 L249.5,491.10 L250.0,491.10 L250.5,491.10 L251.0,491.10 L251.5,491.10 L252.0,491.10 L252.5,491.10 L253.0,491.10 L253.5,491.10 L254.0,491.10 L254.5,491.10 L255.0,491.10 L255.5,491.10 L256.0,491.10 L256.5,491.10 L257.0,491.10 L257.5,491.10 L258.0,491.10 L258.5,491.10 L259.0,491.10 L259.5,491.10 L260.0,491.10 L260.5,491.10 L261.0,491.10 L261.5,491.10 L262.0,491.10 L262.5,491.10 L263.0,491.10 L263.5,491.10 L264.0,491.10 L264.5,491.10 L265.0,491.10 L265.5,491.10 L266.0,491.10 L266.5,491.10 L267.0,491.10 L267.5,491.10 L268.0,491.10 L268.5,491.10 L269.0,491.10 L269.5,491.10 L270.0,491.10 L270.5,491.10 L271.0,491.10 L271.5,491.10 L272.0,491.10 L272.5,491.10 L273.0,491.10 L273.5,491.10 L274.0,491.10 L274.5,491.10 L275.0,491.10 L275.5,491.10 L276.0,491.10 L276.5,491.10 L277.0,491.10 L277.5,491.10 L278.0,491.10 L278.5,491.10 L279.0,491.10 L279.5,491.10 L280.0,491.10 L280.5,491.10 L281.0,491.10 L281.5,491.10 L282.0,491.10 L282.5,491.10 L283.0,491.10 L283.5,491.10 L284.0,491.10 L284.5,491.10 L285.0,491.10 L285.5,491.10 L286.0,491.10 L286.5,491.10 L287.0,491.10 L287.5,491.10 L288.0,491.10 L288.5,491.10 L289.0,491.10 L289.5,491.10 L290.0,491.10 L290.5,491.10 L291.0,491.10 L291.5,491.10 L292.0,491.10 L292.5,491.10 L293.0,491.10 L293.5,491.10 L294.0,491.10 L294.5,491.10 L295.0,491.10 L295.5,491.10 L296.0,491.10 L296.5,491.10 L297.0,491.10 L297.5,491.10 L298.0,491.10 L298.5,491.10 L299.0,491.10 L299.5,491.10 L300.0,491.10 L300.5,491.10 L301.0,491.10 L301.5,491.10 L302.0,491.10 L302.5,491.10 L303.0,491.10 L303.5,491.10 L304.0,491.10 L304.5,491.10 L305.0,491.10 L305.5,491.10 L306.0,491.10 L306.5,491.10 L307.0,491.10 L307.5,491.10 L308.0,491.10 L308.5,491.10 L309.0,491.10 L309.5,491.10 L310.0,491.10 L310.5,491.10 L311.0,491.10 L311.5,491.10 L312.0,491.10 L312.5,491.10 L313.0,491.10 L313.5,491.10 L314.0,491.10 L314.5,491.10 L315.0,491.10 L315.5,491.10 L316.0,491.10 L316.5,491.10 L317.0,491.10 L317.5,491.10 L318.0,491.10 L318.5,491.10 L319.0,491.10 L319.5,491.10 L320.0,491.10 L320.5,491.10 L321.0,491.10 L321.5,491.10 L322.0,491.10 L322.5,491.10 L323.0,491.10 L323.5,491.10 L324.0,491.10 L324.5,491.10 L325.0,491.10 L325.5,491.10 L326.0,491.10 L326.5,491.10 L327.0,491.10 L327.5,491.10 L328.0,491.10 L328.5,491.10 L329.0,491.10 L329.5,491.10 L330.0,491.10 L330.5,491.10 L331.0,491.10 L331.5,491.10 L332.0,491.10 L332.5,491.10 L333.0,491.10 L333.5,491.10 L334.0,491.10 L334.5,491.10 L335.0,491.10 L335.5,491.10 L336.0,491.10 L336.5,491.10 L337.0,491.10 L337.5,491.10 L338.0,491.10 L338.5,491.10 L339.0,491.10 L339.5,491.10 L340.0,491.10 L340.5,491.10 L341.0,491.10 L341.5,491.10 L342.0,491.10 L342.5,491.10 L343.0,491.10 L343.5,491.10 L344.0,491.10 L344.5,491.10 L345.0,491.10 L345.5,491.10 L346.0,491.10 L346.5,491.10 L347.0,491.10 L347.5,491.10 L348.0,491.10 L348.5,491.10 L349.0,491.10 L349.5,491.10 L350.0,491.10 L350.5,491.10 L351.0,491.10 L351.5,491.10 L352.0,491.10 L352.5,491.10 L353.0,491.10 L353.5,491.10 L354.0,491.10 L354.5,491.10 L355.0,491.10 L355.5,491.10 L356.0,491.10 L356.5,491.10 L357.0,491.10 L357.5,491.10 L358.0,491.10 L358.5,491.10 L359.0,491.10 L359.5,491.10 L360.0,491.10 L360.5,491.10 L361.0,491.10 L361.5,491.10 L362.0,491.10 L362.5,491.10 L363.0,491.10 L363.5,491.10 L364.0,491.10 L364.5,491.10 L365.0,491.10 L365.5,491.10 L366.0,491.10 L366.5,491.10 L367.0,491.10 L367.5,491.10 L368.0,491.10 L368.5,491.10 L369.0,491.10 L369.5,491.10 L370.0,491.10 L370.5,491.10 L371.0,491.10 L371.5,491.10 L372.0,491.10 L372.5,491.10 L373.0,491.10 L373.5,491.10 L374.0,491.10 L374.5,491.10 L375.0,491.10 L375.5,491.10 L376.0,491.10 L376.5,491.10 L377.0,491.10 L377.5,491.10 L378.0,491.10 L378.5,491.10 L379.0,491.10 L379.5,491.10 L380.0,491.10 L380.5,491.10 L381.0,491.10 L381.5,491.10 L382.0,491.10 L382.5,491.10 L383.0,491.10 L383.5,491.10 L384.0,491.10 L384.5,491.10 L385.0,491.10 L385.5,491.10 L386.0,491.10 L386.5,491.10 L387.0,491.10 L387.5,491.10 L388.0,491.10 L388.5,491.10 L389.0,491.10 L389.5,491.10 L390.0,491.10 L390.5,491.10 L391.0,491.10 L391.5,491.10 L392.0,491.10 L392.5,491.10 L393.0,491.10 L393.5,491.10 L394.0,491.10 L394.5,491.10 L395.0,491.10 L395.5,491.10 L396.0,491.10 L396.5,491.10 L397.0,491.10 L397.5,491.10 L398.0,491.10 L398.5,491.10 L399.0,491.10 L399.5,491.10 L400.0,491.10 L400.5,491.10 L401.0,491.10 L401.5,491.10 L402.0,491.10 L402.5,491.10 L403.0,491.10 L403.5,491.10 L404.0,491.10 L404.5,491.10 L405.0,491.10 L405.5,491.10 L406.0,491.10 L406.5,491.10 L407.0,491.10 L407.5,491.10 L408.0,491.10 L408.5,491.10 L409.0,491.10 L409.5,491.10 L410.0,491.10 L410.5,491.10 L411.0,491.10 L411.5,491.10 L412.0,491.10 L412.5,491.10 L413.0,491.10 L413.5,491.10 L414.0,491.10 L414.5,491.10 L415.0,491.10 L415.5,491.10 L416.0,491.10 L416.5,491.10 L417.0,491.10 L417.5,491.10 L418.0,491.10 L418.5,491.10 L419.0,491.10 L419.5,491.10 L420.0,491.10 L420.5,491.10 L421.0,491.10 L421.5,491.10 L422.0,491.10 L422.5,491.10 L423.0,491.10 L423.5,491.10 L424.0,491.10 L424.5,491.10 L425.0,491.10 L425.5,491.10 L426.0,491.10 L426.5,491.10 L427.0,491.10 L427.5,491.10 L428.0,491.10 L428.5,491.10 L429.0,491.10 L429.5,491.10 L430.0,491.10 L430.5,491.10 L431.0,491.10 L431.5,491.10 L432.0,491.10 L432.5,491.10 L433.0,491.10 L433.5,491.10 L434.0,491.10 L434.5,491.10 L435.0,491.10 L435.5,491.10 L436.0,491.10 L436.5,491.10 L437.0,491.10 L437.5,491.10 L438.0,491.10 L438.5,491.10 L439.0,491.10 L439.5,491.10 L440.0,491.10 L440.5,491.10 L441.0,491.10 L441.5,491.10 L442.0,491.10 L442.5,491.10 L443.0,491.10 L443.5,491.10 L444.0,491.10 L444.5,491.10 L445.0,491.10 L445.5,491.10 L446.0,491.10 L446.5,491.10 L447.0,491.10 L447.5,491.10 L448.0,491.10 L448.5,491.10 L449.0,491.10 L449.5,491.10 L450.0,491.10 L450.5,491.10 L451.0,491.10 L451.5,491.10 L452.0,491.10 L452.5,491.10 L453.0,491.10 L453.5,491.10 L454.0,491.10 L454.5,491.10 L455.0,491.10 L455.5,491.10 L456.0,491.10 L456.5,491.10 L457.0,491.10 L457.5,491.10 L458.0,491.10 L458.5,491.10 L459.0,491.10 L459.5,491.10 L460.0,491.10 L460.5,491.10 L461.0,491.10 L461.5,491.10 L462.0,491.10 L462.5,491.10 L463.0,491.10 L463.5,491.10 L464.0,491.10 L464.5,491.10 L465.0,491.10 L465.5,491.10 L466.0,491.10 L466.5,491.10 L467.0,491.10 L467.5,491.10 L468.0,491.10 L468.5,491.10 L469.0,491.10 L469.5,491.10 L470.0,491.10 L470.5,491.10 L471.0,491.10 L471.5,491.10 L472.0,491.10 L472.5,491.10 L473.0,491.10 L473.5,491.10 L474.0,491.10 L474.5,491.10 L475.0,491.10 L475.5,491.10 L476.0,491.10 L476.5,491.10 L477.0,491.10 L477.5,491.10 L478.0,491.10 L478.5,491.10 L479.0,491.10 L479.5,491.10 L480.0,491.10 L480.5,491.10 L481.0,491.10 L481.5,491.10 L482.0,491.10 L482.5,491.10 L483.0,491.10 L483.5,491.10 L484.0,491.10 L484.5,491.10 L485.0,491.10 L485.5,491.10 L486.0,491.10 L486.5,491.10 L487.0,491.10 L487.5,491.10 L488.0,491.10 L488.5,491.10 L489.0,491.10 L489.5,491.10 L490.0,491.10 L490.5,491.10 L491.0,491.10 L491.5,491.10 L492.0,491.10 L492.5,491.10 L493.0,491.10 L493.5,491.10 L494.0,491.10 L494.5,491.10 L495.0,491.10 L495.5,491.10 L496.0,491.10 L496.5,491.10 L497.0,491.10 L497.5,491.10 L498.0,491.10 L498.5,491.10 L499.0,491.10 L499.5,491.10 L500.0,491.10 L500.5,491.10 L501.0,491.10 L501.5,491.10 L502.0,491.10 L502.5,491.10 L503.0,491.10 L503.5,491.10 L504.0,491.10 L504.5,491.10 L505.0,491.10 L505.5,491.10 L506.0,491.10 L506.5,491.10 L507.0,491.10 L507.5,491.10 L508.0,491.10 L508.5,491.10 L509.0,491.10 L509.5,491.10 L510.0,491.10 L510.5,491.10 L511.0,491.10 L511.5,491.10 L512.0,491.10 L512.5,491.10 L513.0,491.10 L513.5,491.10 L514.0,491.10 L514.5,491.10 L515.0,491.10 L515.5,491.10 L516.0,491.10 L516.5,491.10 L517.0,491.10 L517.5,491.10 L518.0,491.10 L518.5,491.10 L519.0,491.10 L519.5,491.10 L520.0,491.10 L520.5,491.10 L521.0,491.10 L521.5,491.10 L522.0,491.10 L522.5,491.10 L523.0,491.10 L523.5,491.10 L524.0,491.10 L524.5,491.10 L525.0,491.10 L525.5,491.10 L526.0,491.10 L526.5,491.10 L527.0,491.10 L527.5,491.10 L528.0,491.10 L528.5,491.10 L529.0,491.10 L529.5,491.10 L530.0,491.10 L530.5,491.10 L531.0,491.10 L531.5,491.10 L532.0,491.10 L532.5,491.10 L533.0,491.10 L533.5,491.10 L534.0,491.10 L534.5,491.10 L535.0,491.10 L535.5,491.10 L536.0,491.10 L536.5,491.10 L537.0,491.10 L537.5,491.10 L538.0,491.10 L538.5,491.10 L539.0,491.10 L539.5,491.10 L540.0,491.10 L540.5,491.10 L541.0,491.10 L541.5,491.10 L542.0,491.10 L542.5,491.10 L543.0,491.10 L543.5,491.10 L544.0,491.10 L544.5,491.10 L545.0,491.10 L545.5,491.10 L546.0,491.10 L546.5,491.10 L547.0,491.10 L547.5,491.10 L548.0,491.10 L548.5,491.10 L549.0,491.10 L549.5,491.10 L550.0,491.10 L550.5,491.10 L551.0,491.10 L551.5,491.10 L552.0,491.10 L552.5,491.10 L553.0,491.10 L553.5,491.10 L554.0,491.10 L554.5,491.10 L555.0,491.10 L555.5,491.10 L556.0,491.10 L556.5,491.10 L557.0,491.10 L557.5,491.10 L558.0,491.10 L558.5,491.10 L559.0,491.10 L559.5,491.10 L560.0,491.10 L560.5,491.10 L561.0,491.10 L561.5,491.10 L562.0,491.10 L562.5,491.10 L563.0,491.10 L563.5,491.10 L564.0,491.10 L564.5,491.10 L565.0,491.10 L565.5,491.10 L566.0,491.10 L566.5,491.10 L567.0,491.10 L567.5,491.10 L568.0,491.10 L568.5,491.10 L569.0,491.10 L569.5,491.10 L570.0,491.10 L570.5,491.10 L571.0,491.10 L571.5,491.10 L572.0,491.10 L572.5,491.10 L573.0,491.10 L573.5,491.10 L574.0,491.10 L574.5,491.10 L575.0,491.10 L575.5,491.10 L576.0,491.10 L576.5,491.10 L577.0,491.10 L577.5,491.10 L578.0,491.10 L578.5,491.10 L579.0,491.10 L579.5,491.10 L580.0,491.10 L580.5,491.10 L581.0,491.10 L581.5,491.10 L582.0,491.10 L582.5,491.10 L583.0,491.10 L583.5,491.10 L584.0,491.10 L584.5,491.10 L585.0,491.10 L585.5,491.10 L586.0,491.10 L586.5,491.10 L587.0,491.10 L587.5,491.10 L588.0,491.10 L588.5,491.10 L589.0,491.10 L589.5,491.10 L590.0,491.10 L590.5,491.10 L591.0,491.10 L591.5,491.10 L592.0,491.10 L592.5,491.10 L593.0,491.10 L593.5,491.10 L594.0,491.10 L594.5,491.10 L595.0,491.10 L595.5,491.10 L596.0,491.10 L596.5,491.10 L597.0,491.10 L597.5,491.10 L598.0,491.10 L598.5,491.10 L599.0,491.10 L599.5,491.10 L600.0,491.10 L600.5,491.10 L601.0,491.10 L601.5,491.10 L602.0,491.10 L602.5,491.10 L603.0,491.10 L603.5,491.10 L604.0,491.10 L604.5,491.10 L605.0,491.10 L605.5,491.10 L606.0,491.10 L606.5,491.10 L607.0,491.10 L607.5,491.10 L608.0,491.10 L608.5,491.10 L609.0,491.10 L609.5,491.10 L610.0,491.10 L610.5,491.10 L611.0,491.10 L611.5,491.10 L612.0,491.10 L612.5,491.10 L613.0,491.10 L613.5,491.10 L614.0,491.10 L614.5,491.10 L615.0,491.10 L615.5,491.10 L616.0,491.10 L616.5,491.10 L617.0,491.10 L617.5,491.10 L618.0,491.10 L618.5,491.10 L619.0,491.10 L619.5,491.10 L620.0,491.10 L620.5,491.10 L621.0,491.10 L621.5,491.10 L622.0,491.10 L622.5,491.10 L623.0,491.10 L623.5,491.10 L624.0,491.10 L624.5,491.10 L625.0,491.10 L625.5,491.10 L626.0,491.10 L626.5,491.10 L627.0,491.10 L627.5,491.10 L628.0,491.10 L628.5,491.10 L629.0,491.10 L629.5,491.10 L630.0,491.10 L630.5,491.10 L631.0,491.10 L631.5,491.10 L632.0,491.10 L632.5,491.10 L633.0,491.10 L633.5,491.10 L634.0,491.10 L634.5,491.10 L635.0,491.10 L635.5,491.10 L636.0,491.10 L636.5,491.10 L637.0,491.10 L637.5,491.10 L638.0,491.10 L638.5,491.10 L639.0,491.10 L639.5,491.10 L640.0,491.10 L640.5,491.10 L641.0,491.10 L641.5,491.10 L642.0,491.10 L642.5,491.10 L643.0,491.10 L643.5,491.10 L644.0,491.10 L644.5,491.10 L645.0,491.10 L645.5,491.10 L646.0,491.10 L646.5,491.10 L647.0,491.10 L647.5,491.10 L648.0,491.10 L648.5,491.10 L649.0,491.10 L649.5,491.10 L650.0,491.10 L650.5,491.10 L651.0,491.10 L651.5,491.10 L652.0,491.10 L652.5,491.10 L653.0,491.10 L653.5,491.10 L654.0,491.10 L654.5,491.10 L655.0,491.10 L655.5,491.10 L656.0,491.10 L656.5,491.10 L657.0,491.10 L657.5,491.10 L658.0,491.10 L658.5,491.10 L659.0,491.10 L659.5,491.10 L660.0,491.10 L660.5,491.10 L661.0,491.10 L661.5,491.10 L662.0,491.10 L662.5,491.10 L663.0,491.10 L663.5,491.10 L664.0,491.10 L664.5,491.10 L665.0,491.10 L665.5,491.10 L666.0,491.10 L666.5,491.10 L667.0,491.10 L667.5,491.10 L668.0,491.10 L668.5,491.10 L669.0,491.10 L669.5,491.10 L670.0,491.10 L670.5,491.10 L671.0,491.10 L671.5,491.10 L672.0,491.10 L672.5,491.10 L673.0,491.10 L673.5,491.10 L674.0,491.10 L674.5,491.10 L675.0,491.10 L675.5,491.10 L676.0,491.10 L676.5,491.10 L677.0,491.10 L677.5,491.10 L678.0,491.10 L678.5,491.10 L679.0,491.10 L679.5,491.10 L680.0,491.10 L680.5,491.10 L681.0,491.10 L681.5,491.10 L682.0,491.10 L682.5,491.10 L683.0,491.10 L683.5,491.10 L684.0,491.10 L684.5,491.10 L685.0,491.10 L685.5,491.10 L686.0,491.10 L686.5,491.10 L687.0,491.10 L687.5,491.10 L688.0,491.10 L688.5,491.10 L689.0,491.10 L689.5,491.10 L690.0,491.10 L690.5,491.10 L691.0,491.10 L691.5,491.10 L692.0,491.10 L692.5,491.10 L693.0,491.10 L693.5,491.10 L694.0,491.10 L694.5,491.10 L695.0,491.10 L695.5,491.10 L696.0,491.10 L696.5,491.10 L697.0,491.10 L697.5,491.10 L698.0,491.10 L698.5,491.10 L699.0,491.10 L699.5,491.10 L700.0,491.10 L700.5,491.10 L701.0,491.10 L701.5,491.10 L702.0,491.10 L702.5,491.10 L703.0,491.10 L703.5,491.10 L704.0,491.10 L704.5,491.10 L705.0,491.10 L705.5,491.10 L706.0,491.10 L706.5,491.10 L707.0,491.10 L707.5,491.10 L708.0,491.10 L708.5,491.10 L709.0,491.10 L709.5,491.10 L710.0,491.10 L710.5,491.10 L711.0,491.10 L711.5,491.10 L712.0,491.10 L712.5,491.10 L713.0,491.10 L713.5,491.10 L714.0,491.10 L714.5,491.10 L715.0,491.10 L715.5,491.10 L716.0,491.10 L716.5,491.10 L717.0,491.10 L717.5,491.10 L718.0,491.10 L718.5,491.10 L719.0,491.10 L719.5,491.10 L720.0,491.10 L720.5,491.10 L721.0,491.10 L721.5,491.10 L722.0,491.10 L722.5,491.10 L723.0,491.10 L723.5,491.10 L724.0,491.10 L724.5,491.10 L725.0,491.10 L725.5,491.10 L726.0,491.10 L726.5,491.10 L727.0,491.10 L727.5,491.10 L728.0,491.10 L728.5,491.10 L729.0,491.10 L729.5,491.10 L730.0,491.10 L730.5,491.10 L731.0,491.10 L731.5,491.10 L732.0,491.10 L732.5,491.10 L733.0,491.10 L733.5,491.10 L734.0,491.10 L734.5,491.10 L735.0,491.10 L735.5,491.10 L736.0,491.10 L736.5,491.10 L737.0,491.10 L737.5,491.10 L738.0,491.10 L738.5,491.10 L739.0,491.10 L739.5,491.10 L740.0,491.10 L740.5,491.10 L741.0,491.10 L741.5,491.10 L742.0,491.10 L742.5,491.10 L743.0,491.10 L743.5,491.10 L744.0,491.10 L744.5,491.10 L745.0,491.10 L745.5,491.10 L746.0,491.10 L746.5,491.10 L747.0,491.10 L747.5,491.10 L748.0,491.10 L748.5,491.10 L749.0,491.10 L749.5,491.10 L750.0,491.10 L750.5,491.10 L751.0,491.10 L751.5,491.10 L752.0,491.10 L752.5,491.10 L753.0,491.10 L753.5,491.10 L754.0,491.10 L754.5,491.10 L755.0,491.10 L755.5,491.10 L756.0,491.10 L756.5,491.10 L757.0,491.10 L757.5,491.10 L758.0,491.10 L758.5,491.10 L759.0,491.10 L759.5,491.10 L760.0,491.10 L760.5,491.10 L761.0,491.10 L761.5,491.10 L762.0,491.10 L762.5,491.10 L763.0,491.10 L763.5,491.10 L764.0,491.10 L764.5,491.10 L765.0,491.10 L765.5,491.10 L766.0,491.10 L766.5,491.10 L767.0,491.10 L767.5,491.10 L768.0,491.10 L768.5,491.10 L769.0,491.10 L769.5,491.10 L770.0,491.10 L770.5,491.10 L771.0,491.10 L771.5,491.10 L772.0,491.10 L772.5,491.10 L773.0,491.10 L773.5,491.10 L774.0,491.10 L774.5,491.10 L775.0,491.10 L775.5,491.10 L776.0,491.10 L776.5,491.10 L777.0,491.10 L777.5,491.10 L778.0,491.10 L778.5,491.10 L779.0,491.10 L779.5,491.10 L780.0,491.10 L780.5,491.10 L781.0,491.10 L781.5,491.10 L782.0,491.10 L782.5,491.10 L783.0,491.10 L783.5,491.10 L784.0,491.10 L784.5,491.10 L785.0,491.10 L785.5,491.10 L786.0,491.10 L786.5,491.10 L787.0,491.10 L787.5,491.10 L788.0,491.10 L788.5,491.10 L789.0,491.10 L789.5,491.10 L790.0,491.10 L790.5,491.10 L791.0,491.10 L791.5,491.10 L792.0,491.10 L792.5,491.10 L793.0,491.10 L793.5,491.10 L794.0,491.10 L794.5,491.10 L795.0,491.10 L795.5,491.10 L796.0,491.10 L796.5,491.10 L797.0,491.10 L797.5,491.10 L798.0,491.10 L798.5,491.10 L799.0,491.10 L799.5,491.10 L800.0,491.10 L800.5,491.10 L801.0,491.10 L801.5,491.10 L802.0,491.10 L802.5,491.10 L803.0,491.10 L803.5,491.10 L804.0,491.10 L804.5,491.10 L805.0,491.10 L805.5,491.10 L806.0,491.10 L806.5,491.10 L807.0,491.10 L807.5,491.10 L808.0,491.10 L808.5,491.10 L809.0,491.10 L809.5,491.10 L810.0,491.10 L810.5,491.10 L811.0,491.10 L811.5,491.10 L812.0,491.10 L812.5,491.10 L813.0,491.10 L813.5,491.10 L814.0,491.10 L814.5,491.10 L815.0,491.10 L815.5,491.10 L816.0,491.10 L816.5,491.10 L817.0,491.10 L817.5,491.10 L818.0,491.10 L818.5,491.10 L819.0,491.10 L819.5,491.10 L820.0,491.10 L820.5,491.10 L821.0,491.10 L821.5,491.10 L822.0,491.10 L822.5,491.10 L823.0,491.10 L823.5,491.10 L824.0,491.10 L824.5,491.10 L825.0,491.10 L825.5,491.10 L826.0,491.10 L826.5,491.10 L827.0,491.10 L827.5,491.10 L828.0,491.10 L828.5,491.10 L829.0,491.10 L829.5,491.10 L830.0,491.10 L830.5,491.10 L831.0,491.10 L831.5,491.10 L832.0,491.10 L832.5,491.10 L833.0,491.10 L833.5,491.10 L834.0,491.10 L834.5,491.10 L835.0,491.10 L835.5,491.10 L836.0,491.10 L836.5,491.10 L837.0,491.10 L837.5,491.10 L838.0,491.10 L838.5,491.10 L839.0,491.10 L839.5,491.10 L840.0,491.10 L840.5,491.10 L841.0,491.10 L841.5,491.10 L842.0,491.10 L842.5,491.10 L843.0,491.10 L843.5,491.10 L844.0,491.10 L844.5,491.10 L845.0,491.10 L845.5,491.10 L846.0,491.10 L846.5,491.10 L847.0,491.10 L847.5,491.10 L848.0,491.10 L848.5,491.10 L849.0,491.10 L849.5,491.10 L850.0,491.10 L850.5,491.10 L851.0,491.10 L851.5,491.10 L852.0,491.10 L852.5,491.10 L853.0,491.10 L853.5,491.10 L854.0,491.10 L854.5,491.10 L855.0,491.10 L855.5,491.10 L856.0,491.10 L856.5,491.10 L857.0,491.10 L857.5,491.10 L858.0,491.10 L858.5,491.10 L859.0,491.10 L859.5,491.10 L860.0,491.10 L860.5,491.10 L861.0,491.10 L861.5,491.10 L862.0,491.10 L862.5,491.10 L863.0,491.10 L863.5,491.10 L864.0,491.10 L864.5,491.10 L865.0,491.10 L865.5,491.10 L866.0,491.10 L866.5,491.10 L867.0,491.10 L867.5,491.10 L868.0,491.10 L868.5,491.10 L869.0,491.10 L869.5,491.10 L870.0,491.10 L870.5,491.10 L871.0,491.10 L871.5,491.10 L872.0,491.10 L872.5,491.10 L873.0,491.10 L873.5,491.10 L874.0,491.10 L874.5,491.10 L875.0,491.10 L875.5,491.10 L876.0,491.10 L876.5,491.10 L877.0,491.10 L877.5,491.10 L878.0,491.10 L878.5,491.10 L879.0,491.10 L879.5,491.10 L880.0,491.10 L880.5,491.10 L881.0,491.10 L881.5,491.10 L882.0,491.10 L882.5,491.10 L883.0,491.10 L883.5,491.10 L884.0,491.10 L884.5,491.10 L885.0,491.10 L885.5,491.10 L886.0,491.10 L886.5,491.10 L887.0,491.10 L887.5,491.10 L888.0,491.10 L888.5,491.10 L889.0,491.10 L889.5,491.10 L890.0,491.10 L890.5,491.10 L891.0,491.10 L891.5,491.10 L892.0,491.10 L892.5,491.10 L893.0,491.10 L893.5,491.10 L894.0,491.10 L894.5,491.10 L895.0,491.10 L895.5,491.10 L896.0,491.10 L896.5,491.10 L897.0,491.10 L897.5,491.10 L898.0,491.10 L898.0,491.1 L0,491.1 Z" fill="#a6a6a6"/><path d="M0.0,491.10 L0.5,491.10 L1.0,491.10 L1.5,491.10 L2.0,491.10 L2.5,491.10 L3.0,491.10 L3.5,491.10 L4.0,491.10 L4.5,491.10 L5.0,491.10 L5.5,491.10 L6.0,491.10 L6.5,491.10 L7.0,491.10 L7.5,491.10 L8.0,491.10 L8.5,491.10 L9.0,491.10 L9.5,491.10 L10.0,491.10 L10.5,491.10 L11.0,491.10 L11.5,491.10 L12.0,491.10 L12.5,491.10 L13.0,491.10 L13.5,491.10 L14.0,491.10 L14.5,491.10 L15.0,491.10 L15.5,491.10 L16.0,491.10 L16.5,491.10 L17.0,491.10 L17.5,491.10 L18.0,491.10 L18.5,491.10 L19.0,491.10 L19.5,491.10 L20.0,491.10 L20.5,491.10 L21.0,491.10 L21.5,491.10 L22.0,491.10 L22.5,491.10 L23.0,491.10 L23.5,491.10 L24.0,491.10 L24.5,491.10 L25.0,491.10 L25.5,491.10 L26.0,491.10 L26.5,491.10 L27.0,491.10 L27.5,491.10 L28.0,491.10 L28.5,491.10 L29.0,491.10 L29.5,491.10 L30.0,491.10 L30.5,491.10 L31.0,491.10 L31.5,491.10 L32.0,491.10 L32.5,491.10 L33.0,491.10 L33.5,491.10 L34.0,491.10 L34.5,491.10 L35.0,491.10 L35.5,491.10 L36.0,491.10 L36.5,491.10 L37.0,491.10 L37.5,491.10 L38.0,491.10 L38.5,491.10 L39.0,491.10 L39.5,491.10 L40.0,491.10 L40.5,491.10 L41.0,491.10 L41.5,491.10 L42.0,491.10 L42.5,491.10 L43.0,491.10 L43.5,491.10 L44.0,491.10 L44.5,491.10 L45.0,491.10 L45.5,491.10 L46.0,491.10 L46.5,491.10 L47.0,491.10 L47.5,491.10 L48.0,491.10 L48.5,491.10 L49.0,491.10 L49.5,491.10 L50.0,491.10 L50.5,491.10 L51.0,491.10 L51.5,491.10 L52.0,491.10 L52.5,491.10 L53.0,491.10 L53.5,491.10 L54.0,491.10 L54.5,491.10 L55.0,491.10 L55.5,491.10 L56.0,491.10 L56.5,491.10 L57.0,491.10 L57.5,491.10 L58.0,491.10 L58.5,491.10 L59.0,491.10 L59.5,491.10 L60.0,491.10 L60.5,491.10 L61.0,491.10 L61.5,491.10 L62.0,491.10 L62.5,491.10 L63.0,491.10 L63.5,491.10 L64.0,491.10 L64.5,491.10 L65.0,491.10 L65.5,491.10 L66.0,491.10 L66.5,491.10 L67.0,491.10 L67.5,491.10 L68.0,491.10 L68.5,491.10 L69.0,491.10 L69.5,491.10 L70.0,491.10 L70.5,491.10 L71.0,491.10 L71.5,491.10 L72.0,491.10 L72.5,491.10 L73.0,491.10 L73.5,491.10 L74.0,491.10 L74.5,491.10 L75.0,491.10 L75.5,491.10 L76.0,491.10 L76.5,491.10 L77.0,491.10 L77.5,491.10 L78.0,491.10 L78.5,491.10 L79.0,491.10 L79.5,491.10 L80.0,491.10 L80.5,491.10 L81.0,491.10 L81.5,491.10 L82.0,491.10 L82.5,491.10 L83.0,491.10 L83.5,491.10 L84.0,491.10 L84.5,491.10 L85.0,491.10 L85.5,491.10 L86.0,491.10 L86.5,491.10 L87.0,491.10 L87.5,491.10 L88.0,491.10 L88.5,491.10 L89.0,491.10 L89.5,491.10 L90.0,491.10 L90.5,491.10 L91.0,491.10 L91.5,491.10 L92.0,491.10 L92.5,491.10 L93.0,491.10 L93.5,491.10 L94.0,491.10 L94.5,491.10 L95.0,491.10 L95.5,491.10 L96.0,491.10 L96.5,491.10 L97.0,491.10 L97.5,491.10 L98.0,491.10 L98.5,491.10 L99.0,491.10 L99.5,491.10 L100.0,491.10 L100.5,491.10 L101.0,491.10 L101.5,491.10 L102.0,491.10 L102.5,491.10 L103.0,491.10 L103.5,491.10 L104.0,491.10 L104.5,491.10 L105.0,491.10 L105.5,491.10 L106.0,491.10 L106.5,491.10 L107.0,491.10 L107.5,491.10 L108.0,491.10 L108.5,491.10 L109.0,491.10 L109.5,491.10 L110.0,491.10 L110.5,491.10 L111.0,491.10 L111.5,491.10 L112.0,491.10 L112.5,491.10 L113.0,491.10 L113.5,491.10 L114.0,491.10 L114.5,491.10 L115.0,491.10 L115.5,491.10 L116.0,491.10 L116.5,491.10 L117.0,491.10 L117.5,491.10 L118.0,491.10 L118.5,491.10 L119.0,491.10 L119.5,491.10 L120.0,491.10 L120.5,491.10 L121.0,491.10 L121.5,491.10 L122.0,491.10 L122.5,491.10 L123.0,491.10 L123.5,491.10 L124.0,491.10 L124.5,491.10 L125.0,491.10 L125.5,491.10 L126.0,491.10 L126.5,491.10 L127.0,491.10 L127.5,491.10 L128.0,491.10 L128.5,491.10 L129.0,491.10 L129.5,491.10 L130.0,491.10 L130.5,491.10 L131.0,491.10 L131.5,491.10 L132.0,491.10 L132.5,491.10 L133.0,491.10 L133.5,491.10 L134.0,491.10 L134.5,491.10 L135.0,491.10 L135.5,491.10 L136.0,491.10 L136.5,491.10 L137.0,491.10 L137.5,491.10 L138.0,491.10 L138.5,491.10 L139.0,491.10 L139.5,491.10 L140.0,491.10 L140.5,491.10 L141.0,491.10 L141.5,491.10 L142.0,491.10 L142.5,491.10 L143.0,491.10 L143.5,491.10 L144.0,491.10 L144.5,491.10 L145.0,491.10 L145.5,491.10 L146.0,491.10 L146.5,491.10 L147.0,491.10 L147.5,491.10 L148.0,491.10 L148.5,491.10 L149.0,491.10 L149.5,491.10 L150.0,491.10 L150.5,491.10 L151.0,491.10 L151.5,491.10 L152.0,491.10 L152.5,491.10 L153.0,491.10 L153.5,491.10 L154.0,491.10 L154.5,491.10 L155.0,491.10 L155.5,491.10 L156.0,491.10 L156.5,491.10 L157.0,491.10 L157.5,491.10 L158.0,491.10 L158.5,491.10 L159.0,491.10 L159.5,491.10 L160.0,491.10 L160.5,491.10 L161.0,491.10 L161.5,491.10 L162.0,491.10 L162.5,491.10 L163.0,491.10 L163.5,491.10 L164.0,491.10 L164.5,491.10 L165.0,491.10 L165.5,491.10 L166.0,491.10 L166.5,491.10 L167.0,491.10 L167.5,491.10 L168.0,491.10 L168.5,491.10 L169.0,491.10 L169.5,491.10 L170.0,491.10 L170.5,491.10 L171.0,491.10 L171.5,491.10 L172.0,491.10 L172.5,491.10 L173.0,491.10 L173.5,491.10 L174.0,491.10 L174.5,491.10 L175.0,491.10 L175.5,491.10 L176.0,491.10 L176.5,491.10 L177.0,491.10 L177.5,491.10 L178.0,491.10 L178.5,491.10 L179.0,491.10 L179.5,491.10 L180.0,491.10 L180.5,491.10 L181.0,491.10 L181.5,491.10 L182.0,491.10 L182.5,491.10 L183.0,491.10 L183.5,491.10 L184.0,491.10 L184.5,491.10 L185.0,491.10 L185.5,491.10 L186.0,491.10 L186.5,491.10 L187.0,491.10 L187.5,491.10 L188.0,491.10 L188.5,491.10 L189.0,491.10 L189.5,491.10 L190.0,491.10 L190.5,491.10 L191.0,491.10 L191.5,491.10 L192.0,491.10 L192.5,491.10 L193.0,491.10 L193.5,491.10 L194.0,491.10 L194.5,491.10 L195.0,491.10 L195.5,491.10 L196.0,491.10 L196.5,491.10 L197.0,491.10 L197.5,491.10 L198.0,491.10 L198.5,491.10 L199.0,491.10 L199.5,491.10 L200.0,491.10 L200.5,491.10 L201.0,491.10 L201.5,491.10 L202.0,491.10 L202.5,491.10 L203.0,491.10 L203.5,491.10 L204.0,491.10 L204.5,491.10 L205.0,491.10 L205.5,491.10 L206.0,491.10 L206.5,491.10 L207.0,491.10 L207.5,491.10 L208.0,491.10 L208.5,491.10 L209.0,491.10 L209.5,491.10 L210.0,491.10 L210.5,491.10 L211.0,491.10 L211.5,491.10 L212.0,491.10 L212.5,491.10 L213.0,491.10 L213.5,491.10 L214.0,491.10 L214.5,491.10 L215.0,491.10 L215.5,491.10 L216.0,491.10 L216.5,491.10 L217.0,491.10 L217.5,491.10 L218.0,491.10 L218.5,491.10 L219.0,491.10 L219.5,491.10 L220.0,491.10 L220.5,491.10 L221.0,491.10 L221.5,491.10 L222.0,491.10 L222.5,491.10 L223.0,491.10 L223.5,491.10 L224.0,491.10 L224.5,491.10 L225.0,491.10 L225.5,491.10 L226.0,491.10 L226.5,491.10 L227.0,491.10 L227.5,491.10 L228.0,491.10 L228.5,491.10 L229.0,491.10 L229.5,491.10 L230.0,491.10 L230.5,491.10 L231.0,491.10 L231.5,491.10 L232.0,491.10 L232.5,491.10 L233.0,491.10 L233.5,491.10 L234.0,491.10 L234.5,491.10 L235.0,491.10 L235.5,491.10 L236.0,491.10 L236.5,491.10 L237.0,491.10 L237.5,491.10 L238.0,491.10 L238.5,491.10 L239.0,491.10 L239.5,491.10 L240.0,491.10 L240.5,491.10 L241.0,491.10 L241.5,491.10 L242.0,491.10 L242.5,491.10 L243.0,491.10 L243.5,491.10 L244.0,491.10 L244.5,491.10 L245.0,491.10 L245.5,491.10 L246.0,491.10 L246.5,491.10 L247.0,491.10 L247.5,491.10 L248.0,491.10 L248.5,491.10 L249.0,491.10 L249.5,491.10 L250.0,491.10 L250.5,491.10 L251.0,491.10 L251.5,491.10 L252.0,491.10 L252.5,491.10 L253.0,491.10 L253.5,491.10 L254.0,491.10 L254.5,491.10 L255.0,491.10 L255.5,491.10 L256.0,491.10 L256.5,491.10 L257.0,491.10 L257.5,491.10 L258.0,491.10 L258.5,491.10 L259.0,491.10 L259.5,491.10 L260.0,491.10 L260.5,491.10 L261.0,491.10 L261.5,491.10 L262.0,491.10 L262.5,491.10 L263.0,491.10 L263.5,491.10 L264.0,491.10 L264.5,491.10 L265.0,491.10 L265.5,491.10 L266.0,491.10 L266.5,491.10 L267.0,491.10 L267.5,491.10 L268.0,491.10 L268.5,491.10 L269.0,491.10 L269.5,491.10 L270.0,491.10 L270.5,491.10 L271.0,491.05 L271.5,491.04 L272.0,491.03 L272.5,491.02 L273.0,491.01 L273.5,490.99 L274.0,490.98 L274.5,490.96 L275.0,490.94 L275.5,490.92 L276.0,490.89 L276.5,490.86 L277.0,490.83 L277.5,490.80 L278.0,490.76 L278.5,490.71 L279.0,490.66 L279.5,490.61 L280.0,490.55 L280.5,490.48 L281.0,490.41 L281.5,490.32 L282.0,490.23 L282.5,490.13 L283.0,490.02 L283.5,489.90 L284.0,489.76 L284.5,489.62 L285.0,489.45 L285.5,489.28 L286.0,489.09 L286.5,488.88 L287.0,488.65 L287.5,488.40 L288.0,488.14 L288.5,487.85 L289.0,487.54 L289.5,487.20 L290.0,486.84 L290.5,486.45 L291.0,486.03 L291.5,485.58 L292.0,485.10 L292.5,484.58 L293.0,484.04 L293.5,483.45 L294.0,482.84 L294.5,482.18 L295.0,481.48 L295.5,480.75 L296.0,479.97 L296.5,479.16 L297.0,478.30 L297.5,477.40 L298.0,476.45 L298.5,475.46 L299.0,474.43 L299.5,473.35 L300.0,472.24 L300.5,471.07 L301.0,469.87 L301.5,468.63 L302.0,467.34 L302.5,466.02 L303.0,464.66 L303.5,463.27 L304.0,461.84 L304.5,460.39 L305.0,458.90 L305.5,457.39 L306.0,455.86 L306.5,454.31 L307.0,452.75 L307.5,451.17 L308.0,449.59 L308.5,448.01 L309.0,446.43 L309.5,444.85 L310.0,443.29 L310.5,441.74 L311.0,440.21 L311.5,438.71 L312.0,437.23 L312.5,435.80 L313.0,434.40 L313.5,433.05 L314.0,431.75 L314.5,430.51 L315.0,429.33 L315.5,428.21 L316.0,427.15 L316.5,426.18 L317.0,425.28 L317.5,424.46 L318.0,423.72 L318.5,423.07 L319.0,422.51 L319.5,422.04 L320.0,421.66 L320.5,421.38 L321.0,421.20 L321.5,421.11 L322.0,421.12 L322.5,421.22 L323.0,421.43 L323.5,421.73 L324.0,422.12 L324.5,422.61 L325.0,423.19 L325.5,423.86 L326.0,424.61 L326.5,425.45 L327.0,426.37 L327.5,427.36 L328.0,428.42 L328.5,429.56 L329.0,430.75 L329.5,432.01 L330.0,433.32 L330.5,434.68 L331.0,436.08 L331.5,437.53 L332.0,439.00 L332.5,440.51 L333.0,442.05 L333.5,443.60 L334.0,445.17 L334.5,446.74 L335.0,448.33 L335.5,449.91 L336.0,451.49 L336.5,453.06 L337.0,454.62 L337.5,456.17 L338.0,457.70 L338.5,459.20 L339.0,460.68 L339.5,462.13 L340.0,463.55 L340.5,464.94 L341.0,466.29 L341.5,467.60 L342.0,468.88 L342.5,470.12 L343.0,471.31 L343.5,472.46 L344.0,473.57 L344.5,474.64 L345.0,475.66 L345.5,476.64 L346.0,477.58 L346.5,478.47 L347.0,479.32 L347.5,480.13 L348.0,480.90 L348.5,481.63 L349.0,482.31 L349.5,482.96 L350.0,483.57 L350.5,484.15 L351.0,484.69 L351.5,485.20 L352.0,485.67 L352.5,486.11 L353.0,486.53 L353.5,486.91 L354.0,487.27 L354.5,487.60 L355.0,487.91 L355.5,488.19 L356.0,488.46 L356.5,488.70 L357.0,488.92 L357.5,489.13 L358.0,489.32 L358.5,489.49 L359.0,489.65 L359.5,489.79 L360.0,489.92 L360.5,490.04 L361.0,490.15 L361.5,490.25 L362.0,490.34 L362.5,490.42 L363.0,490.49 L363.5,490.56 L364.0,490.62 L364.5,490.67 L365.0,490.72 L365.5,490.76 L366.0,490.80 L366.5,490.84 L367.0,490.87 L367.5,490.90 L368.0,490.92 L368.5,490.94 L369.0,490.96 L369.5,490.98 L370.0,490.99 L370.5,491.01 L371.0,491.02 L371.5,491.03 L372.0,491.04 L372.5,491.05 L373.0,491.10 L373.5,491.10 L374.0,491.10 L374.5,491.10 L375.0,491.10 L375.5,491.10 L376.0,491.10 L376.5,491.10 L377.0,491.10 L377.5,491.10 L378.0,491.10 L378.5,491.10 L379.0,491.10 L379.5,491.10 L380.0,491.10 L380.5,491.10 L381.0,491.10 L381.5,491.10 L382.0,491.10 L382.5,491.10 L383.0,491.10 L383.5,491.10 L384.0,491.10 L384.5,491.10 L385.0,491.10 L385.5,491.10 L386.0,491.10 L386.5,491.10 L387.0,491.10 L387.5,491.10 L388.0,491.10 L388.5,491.10 L389.0,491.10 L389.5,491.10 L390.0,491.10 L390.5,491.10 L391.0,491.10 L391.5,491.10 L392.0,491.10 L392.5,491.10 L393.0,491.10 L393.5,491.10 L394.0,491.10 L394.5,491.10 L395.0,491.10 L395.5,491.10 L396.0,491.10 L396.5,491.10 L397.0,491.10 L397.5,491.10 L398.0,491.10 L398.5,491.10 L399.0,491.10 L399.5,491.10 L400.0,491.10 L400.5,491.10 L401.0,491.10 L401.5,491.10 L402.0,491.10 L402.5,491.10 L403.0,491.10 L403.5,491.10 L404.0,491.10 L404.5,491.10 L405.0,491.10 L405.5,491.10 L406.0,491.10 L406.5,491.10 L407.0,491.10 L407.5,491.10 L408.0,491.10 L408.5,491.10 L409.0,491.10 L409.5,491.10 L410.0,491.10 L410.5,491.10 L411.0,491.10 L411.5,491.10 L412.0,491.10 L412.5,491.10 L413.0,491.10 L413.5,491.10 L414.0,491.10 L414.5,491.10 L415.0,491.10 L415.5,491.10 L416.0,491.10 L416.5,491.10 L417.0,491.10 L417.5,491.10 L418.0,491.10 L418.5,491.10 L419.0,491.10 L419.5,491.10 L420.0,491.10 L420.5,491.10 L421.0,491.10 L421.5,491.10 L422.0,491.10 L422.5,491.10 L423.0,491.10 L423.5,491.10 L424.0,491.10 L424.5,491.10 L425.0,491.10 L425.5,491.10 L426.0,491.10 L426.5,491.10 L427.0,491.10 L427.5,491.10 L428.0,491.10 L428.5,491.10 L429.0,491.10 L429.5,491.10 L430.0,491.10 L430.5,491.10 L431.0,491.10 L431.5,491.10 L432.0,491.10 L432.5,491.10 L433.0,491.10 L433.5,491.10 L434.0,491.10 L434.5,491.10 L435.0,491.10 L435.5,491.10 L436.0,491.10 L436.5,491.10 L437.0,491.10 L437.5,491.10 L438.0,491.10 L438.5,491.10 L439.0,491.10 L439.5,491.10 L440.0,491.10 L440.5,491.10 L441.0,491.10 L441.5,491.10 L442.0,491.10 L442.5,491.10 L443.0,491.10 L443.5,491.10 L444.0,491.10 L444.5,491.10 L445.0,491.10 L445.5,491.10 L446.0,491.10 L446.5,491.10 L447.0,491.10 L447.5,491.10 L448.0,491.10 L448.5,491.10 L449.0,491.10 L449.5,491.10 L450.0,491.10 L450.5,491.10 L451.0,491.10 L451.5,491.10 L452.0,491.10 L452.5,491.10 L453.0,491.10 L453.5,491.10 L454.0,491.10 L454.5,491.10 L455.0,491.10 L455.5,491.10 L456.0,491.10 L456.5,491.10 L457.0,491.10 L457.5,491.10 L458.0,491.10 L458.5,491.10 L459.0,491.10 L459.5,491.10 L460.0,491.10 L460.5,491.10 L461.0,491.10 L461.5,491.10 L462.0,491.10 L462.5,491.10 L463.0,491.10 L463.5,491.10 L464.0,491.10 L464.5,491.10 L465.0,491.10 L465.5,491.10 L466.0,491.10 L466.5,491.10 L467.0,491.10 L467.5,491.10 L468.0,491.10 L468.5,491.10 L469.0,491.10 L469.5,491.10 L470.0,491.10 L470.5,491.10 L471.0,491.10 L471.5,491.10 L472.0,491.10 L472.5,491.10 L473.0,491.10 L473.5,491.10 L474.0,491.10 L474.5,491.10 L475.0,491.10 L475.5,491.10 L476.0,491.10 L476.5,491.10 L477.0,491.10 L477.5,491.10 L478.0,491.10 L478.5,491.10 L479.0,491.10 L479.5,491.10 L480.0,491.10 L480.5,491.10 L481.0,491.10 L481.5,491.10 L482.0,491.10 L482.5,491.10 L483.0,491.10 L483.5,491.10 L484.0,491.10 L484.5,491.10 L485.0,491.10 L485.5,491.10 L486.0,491.10 L486.5,491.10 L487.0,491.10 L487.5,491.10 L488.0,491.10 L488.5,491.10 L489.0,491.10 L489.5,491.10 L490.0,491.10 L490.5,491.10 L491.0,491.10 L491.5,491.10 L492.0,491.10 L492.5,491.10 L493.0,491.10 L493.5,491.10 L494.0,491.10 L494.5,491.10 L495.0,491.10 L495.5,491.10 L496.0,491.10 L496.5,491.10 L497.0,491.10 L497.5,491.10 L498.0,491.10 L498.5,491.10 L499.0,491.10 L499.5,491.10 L500.0,491.10 L500.5,491.10 L501.0,491.10 L501.5,491.10 L502.0,491.10 L502.5,491.10 L503.0,491.10 L503.5,491.10 L504.0,491.10 L504.5,491.10 L505.0,491.10 L505.5,491.10 L506.0,491.10 L506.5,491.10 L507.0,491.10 L507.5,491.10 L508.0,491.10 L508.5,491.10 L509.0,491.10 L509.5,491.10 L510.0,491.10 L510.5,491.10 L511.0,491.10 L511.5,491.10 L512.0,491.10 L512.5,491.10 L513.0,491.10 L513.5,491.10 L514.0,491.10 L514.5,491.10 L515.0,491.10 L515.5,491.10 L516.0,491.10 L516.5,491.10 L517.0,491.10 L517.5,491.10 L518.0,491.10 L518.5,491.10 L519.0,491.10 L519.5,491.10 L520.0,491.10 L520.5,491.10 L521.0,491.10 L521.5,491.10 L522.0,491.10 L522.5,491.10 L523.0,491.10 L523.5,491.10 L524.0,491.10 L524.5,491.10 L525.0,491.10 L525.5,491.10 L526.0,491.10 L526.5,491.10 L527.0,491.10 L527.5,491.10 L528.0,491.10 L528.5,491.10 L529.0,491.10 L529.5,491.10 L530.0,491.10 L530.5,491.10 L531.0,491.10 L531.5,491.10 L532.0,491.10 L532.5,491.10 L533.0,491.10 L533.5,491.10 L534.0,491.10 L534.5,491.10 L535.0,491.10 L535.5,491.10 L536.0,491.10 L536.5,491.10 L537.0,491.10 L537.5,491.10 L538.0,491.10 L538.5,491.10 L539.0,491.10 L539.5,491.10 L540.0,491.10 L540.5,491.10 L541.0,491.10 L541.5,491.10 L542.0,491.10 L542.5,491.10 L543.0,491.10 L543.5,491.10 L544.0,491.10 L544.5,491.10 L545.0,491.10 L545.5,491.10 L546.0,491.10 L546.5,491.10 L547.0,491.10 L547.5,491.10 L548.0,491.10 L548.5,491.10 L549.0,491.10 L549.5,491.10 L550.0,491.10 L550.5,491.10 L551.0,491.10 L551.5,491.10 L552.0,491.10 L552.5,491.10 L553.0,491.10 L553.5,491.10 L554.0,491.10 L554.5,491.10 L555.0,491.10 L555.5,491.10 L556.0,491.10 L556.5,491.10 L557.0,491.10 L557.5,491.10 L558.0,491.10 L558.5,491.10 L559.0,491.10 L559.5,491.10 L560.0,491.10 L560.5,491.10 L561.0,491.10 L561.5,491.10 L562.0,491.10 L562.5,491.10 L563.0,491.10 L563.5,491.10 L564.0,491.10 L564.5,491.10 L565.0,491.10 L565.5,491.10 L566.0,491.10 L566.5,491.10 L567.0,491.10 L567.5,491.10 L568.0,491.10 L568.5,491.10 L569.0,491.10 L569.5,491.10 L570.0,491.10 L570.5,491.10 L571.0,491.10 L571.5,491.10 L572.0,491.10 L572.5,491.10 L573.0,491.10 L573.5,491.10 L574.0,491.10 L574.5,491.10 L575.0,491.10 L575.5,491.10 L576.0,491.10 L576.5,491.10 L577.0,491.10 L577.5,491.10 L578.0,491.10 L578.5,491.10 L579.0,491.10 L579.5,491.10 L580.0,491.10 L580.5,491.10 L581.0,491.10 L581.5,491.10 L582.0,491.10 L582.5,491.10 L583.0,491.10 L583.5,491.10 L584.0,491.10 L584.5,491.10 L585.0,491.10 L585.5,491.10 L586.0,491.10 L586.5,491.10 L587.0,491.10 L587.5,491.10 L588.0,491.10 L588.5,491.10 L589.0,491.10 L589.5,491.10 L590.0,491.10 L590.5,491.10 L591.0,491.10 L591.5,491.10 L592.0,491.10 L592.5,491.10 L593.0,491.10 L593.5,491.10 L594.0,491.10 L594.5,491.10 L595.0,491.10 L595.5,491.10 L596.0,491.10 L596.5,491.10 L597.0,491.10 L597.5,491.10 L598.0,491.10 L598.5,491.10 L599.0,491.10 L599.5,491.10 L600.0,491.10 L600.5,491.10 L601.0,491.10 L601.5,491.10 L602.0,491.10 L602.5,491.10 L603.0,491.10 L603.5,491.10 L604.0,491.10 L604.5,491.10 L605.0,491.10 L605.5,491.10 L606.0,491.10 L606.5,491.10 L607.0,491.10 L607.5,491.10 L608.0,491.10 L608.5,491.10 L609.0,491.10 L609.5,491.10 L610.0,491.10 L610.5,491.10 L611.0,491.10 L611.5,491.10 L612.0,491.10 L612.5,491.10 L613.0,491.10 L613.5,491.10 L614.0,491.10 L614.5,491.10 L615.0,491.10 L615.5,491.10 L616.0,491.10 L616.5,491.10 L617.0,491.10 L617.5,491.10 L618.0,491.10 L618.5,491.10 L619.0,491.10 L619.5,491.10 L620.0,491.10 L620.5,491.10 L621.0,491.10 L621.5,491.10 L622.0,491.10 L622.5,491.10 L623.0,491.10 L623.5,491.10 L624.0,491.10 L624.5,491.10 L625.0,491.10 L625.5,491.10 L626.0,491.10 L626.5,491.10 L627.0,491.10 L627.5,491.10 L628.0,491.10 L628.5,491.10 L629.0,491.10 L629.5,491.10 L630.0,491.10 L630.5,491.10 L631.0,491.10 L631.5,491.10 L632.0,491.10 L632.5,491.10 L633.0,491.10 L633.5,491.10 L634.0,491.10 L634.5,491.10 L635.0,491.10 L635.5,491.10 L636.0,491.10 L636.5,491.10 L637.0,491.10 L637.5,491.10 L638.0,491.10 L638.5,491.10 L639.0,491.10 L639.5,491.10 L640.0,491.10 L640.5,491.10 L641.0,491.10 L641.5,491.10 L642.0,491.10 L642.5,491.10 L643.0,491.10 L643.5,491.10 L644.0,491.10 L644.5,491.10 L645.0,491.10 L645.5,491.10 L646.0,491.10 L646.5,491.10 L647.0,491.10 L647.5,491.10 L648.0,491.10 L648.5,491.10 L649.0,491.10 L649.5,491.10 L650.0,491.10 L650.5,491.10 L651.0,491.10 L651.5,491.10 L652.0,491.10 L652.5,491.10 L653.0,491.10 L653.5,491.10 L654.0,491.10 L654.5,491.10 L655.0,491.10 L655.5,491.10 L656.0,491.10 L656.5,491.10 L657.0,491.10 L657.5,491.10 L658.0,491.10 L658.5,491.10 L659.0,491.10 L659.5,491.10 L660.0,491.10 L660.5,491.10 L661.0,491.10 L661.5,491.10 L662.0,491.10 L662.5,491.10 L663.0,491.10 L663.5,491.10 L664.0,491.10 L664.5,491.10 L665.0,491.10 L665.5,491.10 L666.0,491.10 L666.5,491.10 L667.0,491.10 L667.5,491.10 L668.0,491.10 L668.5,491.10 L669.0,491.10 L669.5,491.10 L670.0,491.10 L670.5,491.10 L671.0,491.10 L671.5,491.10 L672.0,491.10 L672.5,491.10 L673.0,491.10 L673.5,491.10 L674.0,491.10 L674.5,491.10 L675.0,491.10 L675.5,491.10 L676.0,491.10 L676.5,491.10 L677.0,491.10 L677.5,491.10 L678.0,491.10 L678.5,491.10 L679.0,491.10 L679.5,491.10 L680.0,491.10 L680.5,491.10 L681.0,491.10 L681.5,491.10 L682.0,491.10 L682.5,491.10 L683.0,491.10 L683.5,491.10 L684.0,491.10 L684.5,491.10 L685.0,491.10 L685.5,491.10 L686.0,491.10 L686.5,491.10 L687.0,491.10 L687.5,491.10 L688.0,491.10 L688.5,491.10 L689.0,491.10 L689.5,491.10 L690.0,491.10 L690.5,491.10 L691.0,491.10 L691.5,491.10 L692.0,491.10 L692.5,491.10 L693.0,491.10 L693.5,491.10 L694.0,491.10 L694.5,491.10 L695.0,491.10 L695.5,491.10 L696.0,491.10 L696.5,491.10 L697.0,491.10 L697.5,491.10 L698.0,491.10 L698.5,491.10 L699.0,491.10 L699.5,491.10 L700.0,491.10 L700.5,491.10 L701.0,491.10 L701.5,491.10 L702.0,491.10 L702.5,491.10 L703.0,491.10 L703.5,491.10 L704.0,491.10 L704.5,491.10 L705.0,491.10 L705.5,491.10 L706.0,491.10 L706.5,491.10 L707.0,491.10 L707.5,491.10 L708.0,491.10 L708.5,491.10 L709.0,491.10 L709.5,491.10 L710.0,491.10 L710.5,491.10 L711.0,491.10 L711.5,491.10 L712.0,491.10 L712.5,491.10 L713.0,491.10 L713.5,491.10 L714.0,491.10 L714.5,491.10 L715.0,491.10 L715.5,491.10 L716.0,491.10 L716.5,491.10 L717.0,491.10 L717.5,491.10 L718.0,491.10 L718.5,491.10 L719.0,491.10 L719.5,491.10 L720.0,491.10 L720.5,491.10 L721.0,491.10 L721.5,491.10 L722.0,491.10 L722.5,491.10 L723.0,491.10 L723.5,491.10 L724.0,491.10 L724.5,491.10 L725.0,491.10 L725.5,491.10 L726.0,491.10 L726.5,491.10 L727.0,491.10 L727.5,491.10 L728.0,491.10 L728.5,491.10 L729.0,491.10 L729.5,491.10 L730.0,491.10 L730.5,491.10 L731.0,491.10 L731.5,491.10 L732.0,491.10 L732.5,491.10 L733.0,491.10 L733.5,491.10 L734.0,491.10 L734.5,491.10 L735.0,491.10 L735.5,491.10 L736.0,491.10 L736.5,491.10 L737.0,491.10 L737.5,491.10 L738.0,491.10 L738.5,491.10 L739.0,491.10 L739.5,491.10 L740.0,491.10 L740.5,491.10 L741.0,491.10 L741.5,491.10 L742.0,491.10 L742.5,491.10 L743.0,491.10 L743.5,491.10 L744.0,491.10 L744.5,491.10 L745.0,491.10 L745.5,491.10 L746.0,491.10 L746.5,491.10 L747.0,491.10 L747.5,491.10 L748.0,491.10 L748.5,491.10 L749.0,491.10 L749.5,491.10 L750.0,491.10 L750.5,491.10 L751.0,491.10 L751.5,491.10 L752.0,491.10 L752.5,491.10 L753.0,491.10 L753.5,491.10 L754.0,491.10 L754.5,491.10 L755.0,491.10 L755.5,491.10 L756.0,491.10 L756.5,491.10 L757.0,491.10 L757.5,491.10 L758.0,491.10 L758.5,491.10 L759.0,491.10 L759.5,491.10 L760.0,491.10 L760.5,491.10 L761.0,491.10 L761.5,491.10 L762.0,491.10 L762.5,491.10 L763.0,491.10 L763.5,491.10 L764.0,491.10 L764.5,491.10 L765.0,491.10 L765.5,491.10 L766.0,491.10 L766.5,491.10 L767.0,491.10 L767.5,491.10 L768.0,491.10 L768.5,491.10 L769.0,491.10 L769.5,491.10 L770.0,491.10 L770.5,491.10 L771.0,491.10 L771.5,491.10 L772.0,491.10 L772.5,491.10 L773.0,491.10 L773.5,491.10 L774.0,491.10 L774.5,491.10 L775.0,491.10 L775.5,491.10 L776.0,491.10 L776.5,491.10 L777.0,491.10 L777.5,491.10 L778.0,491.10 L778.5,491.10 L779.0,491.10 L779.5,491.10 L780.0,491.10 L780.5,491.10 L781.0,491.10 L781.5,491.10 L782.0,491.10 L782.5,491.10 L783.0,491.10 L783.5,491.10 L784.0,491.10 L784.5,491.10 L785.0,491.10 L785.5,491.10 L786.0,491.10 L786.5,491.10 L787.0,491.10 L787.5,491.10 L788.0,491.10 L788.5,491.10 L789.0,491.10 L789.5,491.10 L790.0,491.10 L790.5,491.10 L791.0,491.10 L791.5,491.10 L792.0,491.10 L792.5,491.10 L793.0,491.10 L793.5,491.10 L794.0,491.10 L794.5,491.10 L795.0,491.10 L795.5,491.10 L796.0,491.10 L796.5,491.10 L797.0,491.10 L797.5,491.10 L798.0,491.10 L798.5,491.10 L799.0,491.10 L799.5,491.10 L800.0,491.10 L800.5,491.10 L801.0,491.10 L801.5,491.10 L802.0,491.10 L802.5,491.10 L803.0,491.10 L803.5,491.10 L804.0,491.10 L804.5,491.10 L805.0,491.10 L805.5,491.10 L806.0,491.10 L806.5,491.10 L807.0,491.10 L807.5,491.10 L808.0,491.10 L808.5,491.10 L809.0,491.10 L809.5,491.10 L810.0,491.10 L810.5,491.10 L811.0,491.10 L811.5,491.10 L812.0,491.10 L812.5,491.10 L813.0,491.10 L813.5,491.10 L814.0,491.10 L814.5,491.10 L815.0,491.10 L815.5,491.10 L816.0,491.10 L816.5,491.10 L817.0,491.10 L817.5,491.10 L818.0,491.10 L818.5,491.10 L819.0,491.10 L819.5,491.10 L820.0,491.10 L820.5,491.10 L821.0,491.10 L821.5,491.10 L822.0,491.10 L822.5,491.10 L823.0,491.10 L823.5,491.10 L824.0,491.10 L824.5,491.10 L825.0,491.10 L825.5,491.10 L826.0,491.10 L826.5,491.10 L827.0,491.10 L827.5,491.10 L828.0,491.10 L828.5,491.10 L829.0,491.10 L829.5,491.10 L830.0,491.10 L830.5,491.10 L831.0,491.10 L831.5,491.10 L832.0,491.10 L832.5,491.10 L833.0,491.10 L833.5,491.10 L834.0,491.10 L834.5,491.10 L835.0,491.10 L835.5,491.10 L836.0,491.10 L836.5,491.10 L837.0,491.10 L837.5,491.10 L838.0,491.10 L838.5,491.10 L839.0,491.10 L839.5,491.10 L840.0,491.10 L840.5,491.10 L841.0,491.10 L841.5,491.10 L842.0,491.10 L842.5,491.10 L843.0,491.10 L843.5,491.10 L844.0,491.10 L844.5,491.10 L845.0,491.10 L845.5,491.10 L846.0,491.10 L846.5,491.10 L847.0,491.10 L847.5,491.10 L848.0,491.10 L848.5,491.10 L849.0,491.10 L849.5,491.10 L850.0,491.10 L850.5,491.10 L851.0,491.10 L851.5,491.10 L852.0,491.10 L852.5,491.10 L853.0,491.10 L853.5,491.10 L854.0,491.10 L854.5,491.10 L855.0,491.10 L855.5,491.10 L856.0,491.10 L856.5,491.10 L857.0,491.10 L857.5,491.10 L858.0,491.10 L858.5,491.10 L859.0,491.10 L859.5,491.10 L860.0,491.10 L860.5,491.10 L861.0,491.10 L861.5,491.10 L862.0,491.10 L862.5,491.10 L863.0,491.10 L863.5,491.10 L864.0,491.10 L864.5,491.10 L865.0,491.10 L865.5,491.10 L866.0,491.10 L866.5,491.10 L867.0,491.10 L867.5,491.10 L868.0,491.10 L868.5,491.10 L869.0,491.10 L869.5,491.10 L870.0,491.10 L870.5,491.10 L871.0,491.10 L871.5,491.10 L872.0,491.10 L872.5,491.10 L873.0,491.10 L873.5,491.10 L874.0,491.10 L874.5,491.10 L875.0,491.10 L875.5,491.10 L876.0,491.10 L876.5,491.10 L877.0,491.10 L877.5,491.10 L878.0,491.10 L878.5,491.10 L879.0,491.10 L879.5,491.10 L880.0,491.10 L880.5,491.10 L881.0,491.10 L881.5,491.10 L882.0,491.10 L882.5,491.10 L883.0,491.10 L883.5,491.10 L884.0,491.10 L884.5,491.10 L885.0,491.10 L885.5,491.10 L886.0,491.10 L886.5,491.10 L887.0,491.10 L887.5,491.10 L888.0,491.10 L888.5,491.10 L889.0,491.10 L889.5,491.10 L890.0,491.10 L890.5,491.10 L891.0,491.10 L891.5,491.10 L892.0,491.10 L892.5,491.10 L893.0,491.10 L893.5,491.10 L894.0,491.10 L894.5,491.10 L895.0,491.10 L895.5,491.10 L896.0,491.10 L896.5,491.10 L897.0,491.10 L897.5,491.10 L898.0,491.10 L898.0,491.1 L0,491.1 Z" fill="#98e898"/><path d="M0.0,491.10 L0.5,491.10 L1.0,491.10 L1.5,491.10 L2.0,491.10 L2.5,491.10 L3.0,491.10 L3.5,491.10 L4.0,491.10 L4.5,491.10 L5.0,491.10 L5.5,491.10 L6.0,491.10 L6.5,491.10 L7.0,491.10 L7.5,491.10 L8.0,491.10 L8.5,491.10 L9.0,491.10 L9.5,491.10 L10.0,491.10 L10.5,491.10 L11.0,491.10 L11.5,491.10 L12.0,491.10 L12.5,491.10 L13.0,491.10 L13.5,491.10 L14.0,491.10 L14.5,491.10 L15.0,491.10 L15.5,491.10 L16.0,491.10 L16.5,491.10 L17.0,491.10 L17.5,491.10 L18.0,491.10 L18.5,491.10 L19.0,491.10 L19.5,491.10 L20.0,491.10 L20.5,491.10 L21.0,491.10 L21.5,491.10 L22.0,491.10 L22.5,491.10 L23.0,491.10 L23.5,491.10 L24.0,491.10 L24.5,491.10 L25.0,491.10 L25.5,491.10 L26.0,491.10 L26.5,491.10 L27.0,491.10 L27.5,491.10 L28.0,491.10 L28.5,491.10 L29.0,491.10 L29.5,491.10 L30.0,491.10 L30.5,491.10 L31.0,491.10 L31.5,491.10 L32.0,491.10 L32.5,491.10 L33.0,491.10 L33.5,491.10 L34.0,491.10 L34.5,491.10 L35.0,491.10 L35.5,491.10 L36.0,491.10 L36.5,491.10 L37.0,491.10 L37.5,491.10 L38.0,491.10 L38.5,491.10 L39.0,491.10 L39.5,491.10 L40.0,491.10 L40.5,491.10 L41.0,491.10 L41.5,491.10 L42.0,491.10 L42.5,491.10 L43.0,491.10 L43.5,491.10 L44.0,491.10 L44.5,491.10 L45.0,491.10 L45.5,491.10 L46.0,491.10 L46.5,491.10 L47.0,491.10 L47.5,491.10 L48.0,491.10 L48.5,491.10 L49.0,491.10 L49.5,491.10 L50.0,491.10 L50.5,491.10 L51.0,491.10 L51.5,491.10 L52.0,491.10 L52.5,491.10 L53.0,491.10 L53.5,491.10 L54.0,491.10 L54.5,491.10 L55.0,491.10 L55.5,491.10 L56.0,491.10 L56.5,491.10 L57.0,491.10 L57.5,491.10 L58.0,491.10 L58.5,491.10 L59.0,491.10 L59.5,491.10 L60.0,491.10 L60.5,491.10 L61.0,491.10 L61.5,491.10 L62.0,491.10 L62.5,491.10 L63.0,491.10 L63.5,491.10 L64.0,491.10 L64.5,491.10 L65.0,491.10 L65.5,491.10 L66.0,491.10 L66.5,491.10 L67.0,491.10 L67.5,491.10 L68.0,491.10 L68.5,491.10 L69.0,491.10 L69.5,491.10 L70.0,491.10 L70.5,491.10 L71.0,491.10 L71.5,491.10 L72.0,491.10 L72.5,491.10 L73.0,491.10 L73.5,491.10 L74.0,491.10 L74.5,491.10 L75.0,491.10 L75.5,491.10 L76.0,491.10 L76.5,491.10 L77.0,491.10 L77.5,491.10 L78.0,491.10 L78.5,491.10 L79.0,491.10 L79.5,491.10 L80.0,491.10 L80.5,491.10 L81.0,491.10 L81.5,491.10 L82.0,491.10 L82.5,491.10 L83.0,491.10 L83.5,491.10 L84.0,491.10 L84.5,491.10 L85.0,491.10 L85.5,491.10 L86.0,491.10 L86.5,491.10 L87.0,491.10 L87.5,491.10 L88.0,491.10 L88.5,491.10 L89.0,491.10 L89.5,491.10 L90.0,491.10 L90.5,491.10 L91.0,491.10 L91.5,491.10 L92.0,491.10 L92.5,491.10 L93.0,491.10 L93.5,491.10 L94.0,491.10 L94.5,491.10 L95.0,491.10 L95.5,491.10 L96.0,491.10 L96.5,491.10 L97.0,491.10 L97.5,491.10 L98.0,491.10 L98.5,491.10 L99.0,491.10 L99.5,491.10 L100.0,491.10 L100.5,491.10 L101.0,491.10 L101.5,491.10 L102.0,491.10 L102.5,491.10 L103.0,491.10 L103.5,491.10 L104.0,491.10 L104.5,491.10 L105.0,491.10 L105.5,491.10 L106.0,491.10 L106.5,491.10 L107.0,491.10 L107.5,491.10 L108.0,491.10 L108.5,491.10 L109.0,491.10 L109.5,491.10 L110.0,491.10 L110.5,491.10 L111.0,491.10 L111.5,491.10 L112.0,491.10 L112.5,491.10 L113.0,491.10 L113.5,491.10 L114.0,491.10 L114.5,491.10 L115.0,491.10 L115.5,491.10 L116.0,491.10 L116.5,491.10 L117.0,491.10 L117.5,491.10 L118.0,491.10 L118.5,491.10 L119.0,491.10 L119.5,491.10 L120.0,491.10 L120.5,491.10 L121.0,491.10 L121.5,491.10 L122.0,491.10 L122.5,491.10 L123.0,491.10 L123.5,491.10 L124.0,491.10 L124.5,491.10 L125.0,491.10 L125.5,491.10 L126.0,491.10 L126.5,491.10 L127.0,491.10 L127.5,491.10 L128.0,491.10 L128.5,491.10 L129.0,491.10 L129.5,491.10 L130.0,491.10 L130.5,491.10 L131.0,491.10 L131.5,491.10 L132.0,491.10 L132.5,491.10 L133.0,491.10 L133.5,491.10 L134.0,491.10 L134.5,491.10 L135.0,491.10 L135.5,491.10 L136.0,491.10 L136.5,491.10 L137.0,491.10 L137.5,491.10 L138.0,491.10 L138.5,491.10 L139.0,491.10 L139.5,491.10 L140.0,491.10 L140.5,491.10 L141.0,491.10 L141.5,491.10 L142.0,491.10 L142.5,491.10 L143.0,491.10 L143.5,491.10 L144.0,491.10 L144.5,491.10 L145.0,491.10 L145.5,491.10 L146.0,491.10 L146.5,491.10 L147.0,491.10 L147.5,491.10 L148.0,491.10 L148.5,491.10 L149.0,491.10 L149.5,491.10 L150.0,491.10 L150.5,491.10 L151.0,491.10 L151.5,491.10 L152.0,491.10 L152.5,491.10 L153.0,491.10 L153.5,491.10 L154.0,491.10 L154.5,491.10 L155.0,491.10 L155.5,491.10 L156.0,491.10 L156.5,491.10 L157.0,491.10 L157.5,491.10 L158.0,491.10 L158.5,491.10 L159.0,491.10 L159.5,491.10 L160.0,491.10 L160.5,491.10 L161.0,491.10 L161.5,491.10 L162.0,491.10 L162.5,491.10 L163.0,491.10 L163.5,491.10 L164.0,491.10 L164.5,491.10 L165.0,491.10 L165.5,491.10 L166.0,491.10 L166.5,491.10 L167.0,491.10 L167.5,491.10 L168.0,491.10 L168.5,491.10 L169.0,491.10 L169.5,491.10 L170.0,491.10 L170.5,491.10 L171.0,491.10 L171.5,491.10 L172.0,491.10 L172.5,491.10 L173.0,491.10 L173.5,491.10 L174.0,491.10 L174.5,491.10 L175.0,491.10 L175.5,491.10 L176.0,491.10 L176.5,491.10 L177.0,491.10 L177.5,491.10 L178.0,491.10 L178.5,491.10 L179.0,491.10 L179.5,491.10 L180.0,491.10 L180.5,491.10 L181.0,491.10 L181.5,491.10 L182.0,491.10 L182.5,491.10 L183.0,491.10 L183.5,491.10 L184.0,491.10 L184.5,491.10 L185.0,491.10 L185.5,491.10 L186.0,491.10 L186.5,491.10 L187.0,491.10 L187.5,491.10 L188.0,491.10 L188.5,491.10 L189.0,491.10 L189.5,491.10 L190.0,491.10 L190.5,491.10 L191.0,491.10 L191.5,491.10 L192.0,491.10 L192.5,491.10 L193.0,491.10 L193.5,491.10 L194.0,491.10 L194.5,491.10 L195.0,491.10 L195.5,491.10 L196.0,491.10 L196.5,491.10 L197.0,491.10 L197.5,491.10 L198.0,491.10 L198.5,491.10 L199.0,491.10 L199.5,491.10 L200.0,491.10 L200.5,491.10 L201.0,491.10 L201.5,491.10 L202.0,491.10 L202.5,491.10 L203.0,491.10 L203.5,491.10 L204.0,491.10 L204.5,491.10 L205.0,491.10 L205.5,491.10 L206.0,491.10 L206.5,491.10 L207.0,491.10 L207.5,491.10 L208.0,491.10 L208.5,491.10 L209.0,491.10 L209.5,491.10 L210.0,491.10 L210.5,491.10 L211.0,491.10 L211.5,491.10 L212.0,491.10 L212.5,491.10 L213.0,491.10 L213.5,491.10 L214.0,491.10 L214.5,491.10 L215.0,491.10 L215.5,491.10 L216.0,491.10 L216.5,491.10 L217.0,491.10 L217.5,491.10 L218.0,491.10 L218.5,491.10 L219.0,491.10 L219.5,491.10 L220.0,491.10 L220.5,491.10 L221.0,491.10 L221.5,491.10 L222.0,491.10 L222.5,491.10 L223.0,491.10 L223.5,491.10 L224.0,491.10 L224.5,491.10 L225.0,491.10 L225.5,491.10 L226.0,491.10 L226.5,491.10 L227.0,491.10 L227.5,491.10 L228.0,491.10 L228.5,491.10 L229.0,491.10 L229.5,491.10 L230.0,491.10 L230.5,491.10 L231.0,491.10 L231.5,491.10 L232.0,491.10 L232.5,491.10 L233.0,491.10 L233.5,491.10 L234.0,491.10 L234.5,491.10 L235.0,491.10 L235.5,491.10 L236.0,491.10 L236.5,491.10 L237.0,491.10 L237.5,491.10 L238.0,491.10 L238.5,491.10 L239.0,491.10 L239.5,491.10 L240.0,491.10 L240.5,491.10 L241.0,491.10 L241.5,491.10 L242.0,491.10 L242.5,491.10 L243.0,491.10 L243.5,491.10 L244.0,491.10 L244.5,491.10 L245.0,491.10 L245.5,491.10 L246.0,491.10 L246.5,491.10 L247.0,491.10 L247.5,491.10 L248.0,491.10 L248.5,491.10 L249.0,491.10 L249.5,491.10 L250.0,491.10 L250.5,491.10 L251.0,491.10 L251.5,491.10 L252.0,491.10 L252.5,491.10 L253.0,491.10 L253.5,491.10 L254.0,491.10 L254.5,491.10 L255.0,491.10 L255.5,491.10 L256.0,491.10 L256.5,491.10 L257.0,491.10 L257.5,491.10 L258.0,491.10 L258.5,491.10 L259.0,491.10 L259.5,491.10 L260.0,491.10 L260.5,491.10 L261.0,491.10 L261.5,491.10 L262.0,491.10 L262.5,491.10 L263.0,491.10 L263.5,491.10 L264.0,491.10 L264.5,491.10 L265.0,491.10 L265.5,491.10 L266.0,491.10 L266.5,491.10 L267.0,491.10 L267.5,491.10 L268.0,491.10 L268.5,491.10 L269.0,491.10 L269.5,491.10 L270.0,491.10 L270.5,491.10 L271.0,491.05 L271.5,491.04 L272.0,491.03 L272.5,491.02 L273.0,491.01 L273.5,490.99 L274.0,490.98 L274.5,490.96 L275.0,490.94 L275.5,490.92 L276.0,490.89 L276.5,490.86 L277.0,490.83 L277.5,490.80 L278.0,490.76 L278.5,490.71 L279.0,490.66 L279.5,490.61 L280.0,490.55 L280.5,490.48 L281.0,490.41 L281.5,490.32 L282.0,490.23 L282.5,490.13 L283.0,490.02 L283.5,489.90 L284.0,489.76 L284.5,489.62 L285.0,489.45 L285.5,489.28 L286.0,489.09 L286.5,488.88 L287.0,488.65 L287.5,488.40 L288.0,488.14 L288.5,487.85 L289.0,487.54 L289.5,487.20 L290.0,486.84 L290.5,486.45 L291.0,486.03 L291.5,485.58 L292.0,485.10 L292.5,484.58 L293.0,484.04 L293.5,483.45 L294.0,482.84 L294.5,482.18 L295.0,481.48 L295.5,480.75 L296.0,479.97 L296.5,479.16 L297.0,478.30 L297.5,477.40 L298.0,476.45 L298.5,475.46 L299.0,474.97 L299.5,475.13 L300.0,475.28 L300.5,475.44 L301.0,475.61 L301.5,475.77 L302.0,475.94 L302.5,476.11 L303.0,476.28 L303.5,476.45 L304.0,476.63 L304.5,476.81 L305.0,477.00 L305.5,477.18 L306.0,477.37 L306.5,477.56 L307.0,477.76 L307.5,477.96 L308.0,478.16 L308.5,478.36 L309.0,478.57 L309.5,478.77 L310.0,478.99 L310.5,479.20 L311.0,479.42 L311.5,479.63 L312.0,479.86 L312.5,480.08 L313.0,480.30 L313.5,480.53 L314.0,480.76 L314.5,480.99 L315.0,481.22 L315.5,481.45 L316.0,481.68 L316.5,481.92 L317.0,482.15 L317.5,482.39 L318.0,482.62 L318.5,482.86 L319.0,483.09 L319.5,483.32 L320.0,483.56 L320.5,483.79 L321.0,484.02 L321.5,484.25 L322.0,484.47 L322.5,484.70 L323.0,484.92 L323.5,485.14 L324.0,485.35 L324.5,485.57 L325.0,485.78 L325.5,485.99 L326.0,486.19 L326.5,486.39 L327.0,486.59 L327.5,486.78 L328.0,486.97 L328.5,487.15 L329.0,487.33 L329.5,487.50 L330.0,487.67 L330.5,487.84 L331.0,488.00 L331.5,488.15 L332.0,488.31 L332.5,488.45 L333.0,488.59 L333.5,488.73 L334.0,488.86 L334.5,488.98 L335.0,489.11 L335.5,489.22 L336.0,489.33 L336.5,489.44 L337.0,489.54 L337.5,489.64 L338.0,489.73 L338.5,489.82 L339.0,489.90 L339.5,489.98 L340.0,490.06 L340.5,490.13 L341.0,490.20 L341.5,490.26 L342.0,490.32 L342.5,490.38 L343.0,490.43 L343.5,490.48 L344.0,490.53 L344.5,490.57 L345.0,490.61 L345.5,490.65 L346.0,490.69 L346.5,490.72 L347.0,490.75 L347.5,490.78 L348.0,490.81 L348.5,490.83 L349.0,490.86 L349.5,490.88 L350.0,490.90 L350.5,490.92 L351.0,490.93 L351.5,490.95 L352.0,490.96 L352.5,490.98 L353.0,490.99 L353.5,491.00 L354.0,491.01 L354.5,491.02 L355.0,491.03 L355.5,491.03 L356.0,491.04 L356.5,491.05 L357.0,491.10 L357.5,491.10 L358.0,491.10 L358.5,491.10 L359.0,491.10 L359.5,491.10 L360.0,491.10 L360.5,491.10 L361.0,491.10 L361.5,491.10 L362.0,491.10 L362.5,491.10 L363.0,491.10 L363.5,491.10 L364.0,491.10 L364.5,491.10 L365.0,491.10 L365.5,491.10 L366.0,491.10 L366.5,491.10 L367.0,491.10 L367.5,491.10 L368.0,491.10 L368.5,491.10 L369.0,491.10 L369.5,491.10 L370.0,491.10 L370.5,491.10 L371.0,491.10 L371.5,491.10 L372.0,491.10 L372.5,491.10 L373.0,491.10 L373.5,491.10 L374.0,491.10 L374.5,491.10 L375.0,491.10 L375.5,491.10 L376.0,491.10 L376.5,491.10 L377.0,491.10 L377.5,491.10 L378.0,491.10 L378.5,491.10 L379.0,491.10 L379.5,491.10 L380.0,491.10 L380.5,491.10 L381.0,491.10 L381.5,491.10 L382.0,491.10 L382.5,491.10 L383.0,491.10 L383.5,491.10 L384.0,491.10 L384.5,491.10 L385.0,491.10 L385.5,491.10 L386.0,491.10 L386.5,491.10 L387.0,491.10 L387.5,491.10 L388.0,491.10 L388.5,491.10 L389.0,491.10 L389.5,491.10 L390.0,491.10 L390.5,491.10 L391.0,491.10 L391.5,491.10 L392.0,491.10 L392.5,491.10 L393.0,491.10 L393.5,491.10 L394.0,491.10 L394.5,491.10 L395.0,491.10 L395.5,491.10 L396.0,491.10 L396.5,491.10 L397.0,491.10 L397.5,491.10 L398.0,491.10 L398.5,491.10 L399.0,491.10 L399.5,491.10 L400.0,491.10 L400.5,491.10 L401.0,491.10 L401.5,491.10 L402.0,491.10 L402.5,491.10 L403.0,491.10 L403.5,491.10 L404.0,491.10 L404.5,491.10 L405.0,491.10 L405.5,491.10 L406.0,491.10 L406.5,491.10 L407.0,491.10 L407.5,491.10 L408.0,491.10 L408.5,491.10 L409.0,491.10 L409.5,491.10 L410.0,491.10 L410.5,491.10 L411.0,491.10 L411.5,491.10 L412.0,491.10 L412.5,491.10 L413.0,491.10 L413.5,491.10 L414.0,491.10 L414.5,491.10 L415.0,491.10 L415.5,491.10 L416.0,491.10 L416.5,491.10 L417.0,491.10 L417.5,491.10 L418.0,491.10 L418.5,491.10 L419.0,491.10 L419.5,491.10 L420.0,491.10 L420.5,491.10 L421.0,491.10 L421.5,491.10 L422.0,491.10 L422.5,491.10 L423.0,491.10 L423.5,491.10 L424.0,491.10 L424.5,491.10 L425.0,491.10 L425.5,491.10 L426.0,491.10 L426.5,491.10 L427.0,491.10 L427.5,491.10 L428.0,491.10 L428.5,491.10 L429.0,491.10 L429.5,491.10 L430.0,491.10 L430.5,491.10 L431.0,491.10 L431.5,491.10 L432.0,491.10 L432.5,491.10 L433.0,491.10 L433.5,491.10 L434.0,491.10 L434.5,491.10 L435.0,491.10 L435.5,491.10 L436.0,491.10 L436.5,491.10 L437.0,491.10 L437.5,491.10 L438.0,491.10 L438.5,491.10 L439.0,491.10 L439.5,491.10 L440.0,491.10 L440.5,491.10 L441.0,491.10 L441.5,491.10 L442.0,491.10 L442.5,491.10 L443.0,491.10 L443.5,491.10 L444.0,491.10 L444.5,491.10 L445.0,491.10 L445.5,491.10 L446.0,491.10 L446.5,491.10 L447.0,491.10 L447.5,491.10 L448.0,491.10 L448.5,491.10 L449.0,491.10 L449.5,491.10 L450.0,491.10 L450.5,491.10 L451.0,491.10 L451.5,491.10 L452.0,491.10 L452.5,491.10 L453.0,491.10 L453.5,491.10 L454.0,491.10 L454.5,491.10 L455.0,491.10 L455.5,491.10 L456.0,491.10 L456.5,491.10 L457.0,491.10 L457.5,491.10 L458.0,491.10 L458.5,491.10 L459.0,491.10 L459.5,491.10 L460.0,491.10 L460.5,491.10 L461.0,491.10 L461.5,491.10 L462.0,491.10 L462.5,491.10 L463.0,491.10 L463.5,491.10 L464.0,491.10 L464.5,491.10 L465.0,491.10 L465.5,491.10 L466.0,491.10 L466.5,491.10 L467.0,491.10 L467.5,491.10 L468.0,491.10 L468.5,491.10 L469.0,491.10 L469.5,491.10 L470.0,491.10 L470.5,491.10 L471.0,491.10 L471.5,491.10 L472.0,491.10 L472.5,491.10 L473.0,491.10 L473.5,491.10 L474.0,491.10 L474.5,491.10 L475.0,491.10 L475.5,491.10 L476.0,491.10 L476.5,491.10 L477.0,491.10 L477.5,491.10 L478.0,491.10 L478.5,491.10 L479.0,491.10 L479.5,491.10 L480.0,491.10 L480.5,491.10 L481.0,491.10 L481.5,491.10 L482.0,491.10 L482.5,491.10 L483.0,491.10 L483.5,491.10 L484.0,491.10 L484.5,491.10 L485.0,491.10 L485.5,491.10 L486.0,491.10 L486.5,491.10 L487.0,491.10 L487.5,491.10 L488.0,491.10 L488.5,491.10 L489.0,491.10 L489.5,491.10 L490.0,491.10 L490.5,491.10 L491.0,491.10 L491.5,491.10 L492.0,491.10 L492.5,491.10 L493.0,491.10 L493.5,491.10 L494.0,491.10 L494.5,491.10 L495.0,491.10 L495.5,491.10 L496.0,491.10 L496.5,491.10 L497.0,491.10 L497.5,491.10 L498.0,491.10 L498.5,491.10 L499.0,491.10 L499.5,491.10 L500.0,491.10 L500.5,491.10 L501.0,491.10 L501.5,491.10 L502.0,491.10 L502.5,491.10 L503.0,491.10 L503.5,491.10 L504.0,491.10 L504.5,491.10 L505.0,491.10 L505.5,491.10 L506.0,491.10 L506.5,491.10 L507.0,491.10 L507.5,491.10 L508.0,491.10 L508.5,491.10 L509.0,491.10 L509.5,491.10 L510.0,491.10 L510.5,491.10 L511.0,491.10 L511.5,491.10 L512.0,491.10 L512.5,491.10 L513.0,491.10 L513.5,491.10 L514.0,491.10 L514.5,491.10 L515.0,491.10 L515.5,491.10 L516.0,491.10 L516.5,491.10 L517.0,491.10 L517.5,491.10 L518.0,491.10 L518.5,491.10 L519.0,491.10 L519.5,491.10 L520.0,491.10 L520.5,491.10 L521.0,491.10 L521.5,491.10 L522.0,491.10 L522.5,491.10 L523.0,491.10 L523.5,491.10 L524.0,491.10 L524.5,491.10 L525.0,491.10 L525.5,491.10 L526.0,491.10 L526.5,491.10 L527.0,491.10 L527.5,491.10 L528.0,491.10 L528.5,491.10 L529.0,491.10 L529.5,491.10 L530.0,491.10 L530.5,491.10 L531.0,491.10 L531.5,491.10 L532.0,491.10 L532.5,491.10 L533.0,491.10 L533.5,491.10 L534.0,491.10 L534.5,491.10 L535.0,491.10 L535.5,491.10 L536.0,491.10 L536.5,491.10 L537.0,491.10 L537.5,491.10 L538.0,491.10 L538.5,491.10 L539.0,491.10 L539.5,491.10 L540.0,491.10 L540.5,491.10 L541.0,491.10 L541.5,491.10 L542.0,491.10 L542.5,491.10 L543.0,491.10 L543.5,491.10 L544.0,491.10 L544.5,491.10 L545.0,491.10 L545.5,491.10 L546.0,491.10 L546.5,491.10 L547.0,491.10 L547.5,491.10 L548.0,491.10 L548.5,491.10 L549.0,491.10 L549.5,491.10 L550.0,491.10 L550.5,491.10 L551.0,491.10 L551.5,491.10 L552.0,491.10 L552.5,491.10 L553.0,491.10 L553.5,491.10 L554.0,491.10 L554.5,491.10 L555.0,491.10 L555.5,491.10 L556.0,491.10 L556.5,491.10 L557.0,491.10 L557.5,491.10 L558.0,491.10 L558.5,491.10 L559.0,491.10 L559.5,491.10 L560.0,491.10 L560.5,491.10 L561.0,491.10 L561.5,491.10 L562.0,491.10 L562.5,491.10 L563.0,491.10 L563.5,491.10 L564.0,491.10 L564.5,491.10 L565.0,491.10 L565.5,491.10 L566.0,491.10 L566.5,491.10 L567.0,491.10 L567.5,491.10 L568.0,491.10 L568.5,491.10 L569.0,491.10 L569.5,491.10 L570.0,491.10 L570.5,491.10 L571.0,491.10 L571.5,491.10 L572.0,491.10 L572.5,491.10 L573.0,491.10 L573.5,491.10 L574.0,491.10 L574.5,491.10 L575.0,491.10 L575.5,491.10 L576.0,491.10 L576.5,491.10 L577.0,491.10 L577.5,491.10 L578.0,491.10 L578.5,491.10 L579.0,491.10 L579.5,491.10 L580.0,491.10 L580.5,491.10 L581.0,491.10 L581.5,491.10 L582.0,491.10 L582.5,491.10 L583.0,491.10 L583.5,491.10 L584.0,491.10 L584.5,491.10 L585.0,491.10 L585.5,491.10 L586.0,491.10 L586.5,491.10 L587.0,491.10 L587.5,491.10 L588.0,491.10 L588.5,491.10 L589.0,491.10 L589.5,491.10 L590.0,491.10 L590.5,491.10 L591.0,491.10 L591.5,491.10 L592.0,491.10 L592.5,491.10 L593.0,491.10 L593.5,491.10 L594.0,491.10 L594.5,491.10 L595.0,491.10 L595.5,491.10 L596.0,491.10 L596.5,491.10 L597.0,491.10 L597.5,491.10 L598.0,491.10 L598.5,491.10 L599.0,491.10 L599.5,491.10 L600.0,491.10 L600.5,491.10 L601.0,491.10 L601.5,491.10 L602.0,491.10 L602.5,491.10 L603.0,491.10 L603.5,491.10 L604.0,491.10 L604.5,491.10 L605.0,491.10 L605.5,491.10 L606.0,491.10 L606.5,491.10 L607.0,491.10 L607.5,491.10 L608.0,491.10 L608.5,491.10 L609.0,491.10 L609.5,491.10 L610.0,491.10 L610.5,491.10 L611.0,491.10 L611.5,491.10 L612.0,491.10 L612.5,491.10 L613.0,491.10 L613.5,491.10 L614.0,491.10 L614.5,491.10 L615.0,491.10 L615.5,491.10 L616.0,491.10 L616.5,491.10 L617.0,491.10 L617.5,491.10 L618.0,491.10 L618.5,491.10 L619.0,491.10 L619.5,491.10 L620.0,491.10 L620.5,491.10 L621.0,491.10 L621.5,491.10 L622.0,491.10 L622.5,491.10 L623.0,491.10 L623.5,491.10 L624.0,491.10 L624.5,491.10 L625.0,491.10 L625.5,491.10 L626.0,491.10 L626.5,491.10 L627.0,491.10 L627.5,491.10 L628.0,491.10 L628.5,491.10 L629.0,491.10 L629.5,491.10 L630.0,491.10 L630.5,491.10 L631.0,491.10 L631.5,491.10 L632.0,491.10 L632.5,491.10 L633.0,491.10 L633.5,491.10 L634.0,491.10 L634.5,491.10 L635.0,491.10 L635.5,491.10 L636.0,491.10 L636.5,491.10 L637.0,491.10 L637.5,491.10 L638.0,491.10 L638.5,491.10 L639.0,491.10 L639.5,491.10 L640.0,491.10 L640.5,491.10 L641.0,491.10 L641.5,491.10 L642.0,491.10 L642.5,491.10 L643.0,491.10 L643.5,491.10 L644.0,491.10 L644.5,491.10 L645.0,491.10 L645.5,491.10 L646.0,491.10 L646.5,491.10 L647.0,491.10 L647.5,491.10 L648.0,491.10 L648.5,491.10 L649.0,491.10 L649.5,491.10 L650.0,491.10 L650.5,491.10 L651.0,491.10 L651.5,491.10 L652.0,491.10 L652.5,491.10 L653.0,491.10 L653.5,491.10 L654.0,491.10 L654.5,491.10 L655.0,491.10 L655.5,491.10 L656.0,491.10 L656.5,491.10 L657.0,491.10 L657.5,491.10 L658.0,491.10 L658.5,491.10 L659.0,491.10 L659.5,491.10 L660.0,491.10 L660.5,491.10 L661.0,491.10 L661.5,491.10 L662.0,491.10 L662.5,491.10 L663.0,491.10 L663.5,491.10 L664.0,491.10 L664.5,491.10 L665.0,491.10 L665.5,491.10 L666.0,491.10 L666.5,491.10 L667.0,491.10 L667.5,491.10 L668.0,491.10 L668.5,491.10 L669.0,491.10 L669.5,491.10 L670.0,491.10 L670.5,491.10 L671.0,491.10 L671.5,491.10 L672.0,491.10 L672.5,491.10 L673.0,491.10 L673.5,491.10 L674.0,491.10 L674.5,491.10 L675.0,491.10 L675.5,491.10 L676.0,491.10 L676.5,491.10 L677.0,491.10 L677.5,491.10 L678.0,491.10 L678.5,491.10 L679.0,491.10 L679.5,491.10 L680.0,491.10 L680.5,491.10 L681.0,491.10 L681.5,491.10 L682.0,491.10 L682.5,491.10 L683.0,491.10 L683.5,491.10 L684.0,491.10 L684.5,491.10 L685.0,491.10 L685.5,491.10 L686.0,491.10 L686.5,491.10 L687.0,491.10 L687.5,491.10 L688.0,491.10 L688.5,491.10 L689.0,491.10 L689.5,491.10 L690.0,491.10 L690.5,491.10 L691.0,491.10 L691.5,491.10 L692.0,491.10 L692.5,491.10 L693.0,491.10 L693.5,491.10 L694.0,491.10 L694.5,491.10 L695.0,491.10 L695.5,491.10 L696.0,491.10 L696.5,491.10 L697.0,491.10 L697.5,491.10 L698.0,491.10 L698.5,491.10 L699.0,491.10 L699.5,491.10 L700.0,491.10 L700.5,491.10 L701.0,491.10 L701.5,491.10 L702.0,491.10 L702.5,491.10 L703.0,491.10 L703.5,491.10 L704.0,491.10 L704.5,491.10 L705.0,491.10 L705.5,491.10 L706.0,491.10 L706.5,491.10 L707.0,491.10 L707.5,491.10 L708.0,491.10 L708.5,491.10 L709.0,491.10 L709.5,491.10 L710.0,491.10 L710.5,491.10 L711.0,491.10 L711.5,491.10 L712.0,491.10 L712.5,491.10 L713.0,491.10 L713.5,491.10 L714.0,491.10 L714.5,491.10 L715.0,491.10 L715.5,491.10 L716.0,491.10 L716.5,491.10 L717.0,491.10 L717.5,491.10 L718.0,491.10 L718.5,491.10 L719.0,491.10 L719.5,491.10 L720.0,491.10 L720.5,491.10 L721.0,491.10 L721.5,491.10 L722.0,491.10 L722.5,491.10 L723.0,491.10 L723.5,491.10 L724.0,491.10 L724.5,491.10 L725.0,491.10 L725.5,491.10 L726.0,491.10 L726.5,491.10 L727.0,491.10 L727.5,491.10 L728.0,491.10 L728.5,491.10 L729.0,491.10 L729.5,491.10 L730.0,491.10 L730.5,491.10 L731.0,491.10 L731.5,491.10 L732.0,491.10 L732.5,491.10 L733.0,491.10 L733.5,491.10 L734.0,491.10 L734.5,491.10 L735.0,491.10 L735.5,491.10 L736.0,491.10 L736.5,491.10 L737.0,491.10 L737.5,491.10 L738.0,491.10 L738.5,491.10 L739.0,491.10 L739.5,491.10 L740.0,491.10 L740.5,491.10 L741.0,491.10 L741.5,491.10 L742.0,491.10 L742.5,491.10 L743.0,491.10 L743.5,491.10 L744.0,491.10 L744.5,491.10 L745.0,491.10 L745.5,491.10 L746.0,491.10 L746.5,491.10 L747.0,491.10 L747.5,491.10 L748.0,491.10 L748.5,491.10 L749.0,491.10 L749.5,491.10 L750.0,491.10 L750.5,491.10 L751.0,491.10 L751.5,491.10 L752.0,491.10 L752.5,491.10 L753.0,491.10 L753.5,491.10 L754.0,491.10 L754.5,491.10 L755.0,491.10 L755.5,491.10 L756.0,491.10 L756.5,491.10 L757.0,491.10 L757.5,491.10 L758.0,491.10 L758.5,491.10 L759.0,491.10 L759.5,491.10 L760.0,491.10 L760.5,491.10 L761.0,491.10 L761.5,491.10 L762.0,491.10 L762.5,491.10 L763.0,491.10 L763.5,491.10 L764.0,491.10 L764.5,491.10 L765.0,491.10 L765.5,491.10 L766.0,491.10 L766.5,491.10 L767.0,491.10 L767.5,491.10 L768.0,491.10 L768.5,491.10 L769.0,491.10 L769.5,491.10 L770.0,491.10 L770.5,491.10 L771.0,491.10 L771.5,491.10 L772.0,491.10 L772.5,491.10 L773.0,491.10 L773.5,491.10 L774.0,491.10 L774.5,491.10 L775.0,491.10 L775.5,491.10 L776.0,491.10 L776.5,491.10 L777.0,491.10 L777.5,491.10 L778.0,491.10 L778.5,491.10 L779.0,491.10 L779.5,491.10 L780.0,491.10 L780.5,491.10 L781.0,491.10 L781.5,491.10 L782.0,491.10 L782.5,491.10 L783.0,491.10 L783.5,491.10 L784.0,491.10 L784.5,491.10 L785.0,491.10 L785.5,491.10 L786.0,491.10 L786.5,491.10 L787.0,491.10 L787.5,491.10 L788.0,491.10 L788.5,491.10 L789.0,491.10 L789.5,491.10 L790.0,491.10 L790.5,491.10 L791.0,491.10 L791.5,491.10 L792.0,491.10 L792.5,491.10 L793.0,491.10 L793.5,491.10 L794.0,491.10 L794.5,491.10 L795.0,491.10 L795.5,491.10 L796.0,491.10 L796.5,491.10 L797.0,491.10 L797.5,491.10 L798.0,491.10 L798.5,491.10 L799.0,491.10 L799.5,491.10 L800.0,491.10 L800.5,491.10 L801.0,491.10 L801.5,491.10 L802.0,491.10 L802.5,491.10 L803.0,491.10 L803.5,491.10 L804.0,491.10 L804.5,491.10 L805.0,491.10 L805.5,491.10 L806.0,491.10 L806.5,491.10 L807.0,491.10 L807.5,491.10 L808.0,491.10 L808.5,491.10 L809.0,491.10 L809.5,491.10 L810.0,491.10 L810.5,491.10 L811.0,491.10 L811.5,491.10 L812.0,491.10 L812.5,491.10 L813.0,491.10 L813.5,491.10 L814.0,491.10 L814.5,491.10 L815.0,491.10 L815.5,491.10 L816.0,491.10 L816.5,491.10 L817.0,491.10 L817.5,491.10 L818.0,491.10 L818.5,491.10 L819.0,491.10 L819.5,491.10 L820.0,491.10 L820.5,491.10 L821.0,491.10 L821.5,491.10 L822.0,491.10 L822.5,491.10 L823.0,491.10 L823.5,491.10 L824.0,491.10 L824.5,491.10 L825.0,491.10 L825.5,491.10 L826.0,491.10 L826.5,491.10 L827.0,491.10 L827.5,491.10 L828.0,491.10 L828.5,491.10 L829.0,491.10 L829.5,491.10 L830.0,491.10 L830.5,491.10 L831.0,491.10 L831.5,491.10 L832.0,491.10 L832.5,491.10 L833.0,491.10 L833.5,491.10 L834.0,491.10 L834.5,491.10 L835.0,491.10 L835.5,491.10 L836.0,491.10 L836.5,491.10 L837.0,491.10 L837.5,491.10 L838.0,491.10 L838.5,491.10 L839.0,491.10 L839.5,491.10 L840.0,491.10 L840.5,491.10 L841.0,491.10 L841.5,491.10 L842.0,491.10 L842.5,491.10 L843.0,491.10 L843.5,491.10 L844.0,491.10 L844.5,491.10 L845.0,491.10 L845.5,491.10 L846.0,491.10 L846.5,491.10 L847.0,491.10 L847.5,491.10 L848.0,491.10 L848.5,491.10 L849.0,491.10 L849.5,491.10 L850.0,491.10 L850.5,491.10 L851.0,491.10 L851.5,491.10 L852.0,491.10 L852.5,491.10 L853.0,491.10 L853.5,491.10 L854.0,491.10 L854.5,491.10 L855.0,491.10 L855.5,491.10 L856.0,491.10 L856.5,491.10 L857.0,491.10 L857.5,491.10 L858.0,491.10 L858.5,491.10 L859.0,491.10 L859.5,491.10 L860.0,491.10 L860.5,491.10 L861.0,491.10 L861.5,491.10 L862.0,491.10 L862.5,491.10 L863.0,491.10 L863.5,491.10 L864.0,491.10 L864.5,491.10 L865.0,491.10 L865.5,491.10 L866.0,491.10 L866.5,491.10 L867.0,491.10 L867.5,491.10 L868.0,491.10 L868.5,491.10 L869.0,491.10 L869.5,491.10 L870.0,491.10 L870.5,491.10 L871.0,491.10 L871.5,491.10 L872.0,491.10 L872.5,491.10 L873.0,491.10 L873.5,491.10 L874.0,491.10 L874.5,491.10 L875.0,491.10 L875.5,491.10 L876.0,491.10 L876.5,491.10 L877.0,491.10 L877.5,491.10 L878.0,491.10 L878.5,491.10 L879.0,491.10 L879.5,491.10 L880.0,491.10 L880.5,491.10 L881.0,491.10 L881.5,491.10 L882.0,491.10 L882.5,491.10 L883.0,491.10 L883.5,491.10 L884.0,491.10 L884.5,491.10 L885.0,491.10 L885.5,491.10 L886.0,491.10 L886.5,491.10 L887.0,491.10 L887.5,491.10 L888.0,491.10 L888.5,491.10 L889.0,491.10 L889.5,491.10 L890.0,491.10 L890.5,491.10 L891.0,491.10 L891.5,491.10 L892.0,491.10 L892.5,491.10 L893.0,491.10 L893.5,491.10 L894.0,491.10 L894.5,491.10 L895.0,491.10 L895.5,491.10 L896.0,491.10 L896.5,491.10 L897.0,491.10 L897.5,491.10 L898.0,491.10 L898.0,491.1 L0,491.1 Z" fill="#a6d872"/><path d="M0.0,491.10 L0.5,491.10 L1.0,491.10 L1.5,491.10 L2.0,491.10 L2.5,491.10 L3.0,491.10 L3.5,491.10 L4.0,491.10 L4.5,491.10 L5.0,491.10 L5.5,491.10 L6.0,491.10 L6.5,491.10 L7.0,491.10 L7.5,491.10 L8.0,491.10 L8.5,491.10 L9.0,491.10 L9.5,491.10 L10.0,491.10 L10.5,491.10 L11.0,491.10 L11.5,491.10 L12.0,491.10 L12.5,491.10 L13.0,491.10 L13.5,491.10 L14.0,491.10 L14.5,491.10 L15.0,491.10 L15.5,491.10 L16.0,491.10 L16.5,491.10 L17.0,491.10 L17.5,491.10 L18.0,491.10 L18.5,491.10 L19.0,491.10 L19.5,491.10 L20.0,491.10 L20.5,491.10 L21.0,491.10 L21.5,491.10 L22.0,491.10 L22.5,491.10 L23.0,491.10 L23.5,491.10 L24.0,491.10 L24.5,491.10 L25.0,491.10 L25.5,491.10 L26.0,491.10 L26.5,491.10 L27.0,491.10 L27.5,491.10 L28.0,491.10 L28.5,491.10 L29.0,491.10 L29.5,491.10 L30.0,491.10 L30.5,491.10 L31.0,491.10 L31.5,491.10 L32.0,491.10 L32.5,491.10 L33.0,491.10 L33.5,491.10 L34.0,491.10 L34.5,491.10 L35.0,491.10 L35.5,491.10 L36.0,491.10 L36.5,491.10 L37.0,491.10 L37.5,491.10 L38.0,491.10 L38.5,491.10 L39.0,491.10 L39.5,491.10 L40.0,491.10 L40.5,491.10 L41.0,491.10 L41.5,491.10 L42.0,491.10 L42.5,491.10 L43.0,491.10 L43.5,491.10 L44.0,491.10 L44.5,491.10 L45.0,491.10 L45.5,491.10 L46.0,491.10 L46.5,491.10 L47.0,491.10 L47.5,491.10 L48.0,491.10 L48.5,491.10 L49.0,491.10 L49.5,491.10 L50.0,491.10 L50.5,491.10 L51.0,491.10 L51.5,491.10 L52.0,491.10 L52.5,491.10 L53.0,491.10 L53.5,491.10 L54.0,491.10 L54.5,491.10 L55.0,491.10 L55.5,491.10 L56.0,491.10 L56.5,491.10 L57.0,491.10 L57.5,491.10 L58.0,491.10 L58.5,491.10 L59.0,491.10 L59.5,491.10 L60.0,491.10 L60.5,491.10 L61.0,491.10 L61.5,491.10 L62.0,491.10 L62.5,491.10 L63.0,491.10 L63.5,491.10 L64.0,491.10 L64.5,491.10 L65.0,491.10 L65.5,491.10 L66.0,491.10 L66.5,491.10 L67.0,491.10 L67.5,491.10 L68.0,491.10 L68.5,491.10 L69.0,491.10 L69.5,491.10 L70.0,491.10 L70.5,491.10 L71.0,491.10 L71.5,491.10 L72.0,491.10 L72.5,491.10 L73.0,491.10 L73.5,491.10 L74.0,491.10 L74.5,491.10 L75.0,491.10 L75.5,491.10 L76.0,491.10 L76.5,491.10 L77.0,491.10 L77.5,491.10 L78.0,491.10 L78.5,491.10 L79.0,491.10 L79.5,491.10 L80.0,491.10 L80.5,491.10 L81.0,491.10 L81.5,491.10 L82.0,491.10 L82.5,491.10 L83.0,491.10 L83.5,491.10 L84.0,491.10 L84.5,491.10 L85.0,491.10 L85.5,491.10 L86.0,491.10 L86.5,491.10 L87.0,491.10 L87.5,491.10 L88.0,491.10 L88.5,491.10 L89.0,491.10 L89.5,491.10 L90.0,491.10 L90.5,491.10 L91.0,491.10 L91.5,491.10 L92.0,491.10 L92.5,491.10 L93.0,491.10 L93.5,491.10 L94.0,491.10 L94.5,491.10 L95.0,491.10 L95.5,491.10 L96.0,491.10 L96.5,491.10 L97.0,491.10 L97.5,491.10 L98.0,491.10 L98.5,491.10 L99.0,491.10 L99.5,491.10 L100.0,491.10 L100.5,491.10 L101.0,491.10 L101.5,491.10 L102.0,491.10 L102.5,491.10 L103.0,491.10 L103.5,491.10 L104.0,491.10 L104.5,491.10 L105.0,491.10 L105.5,491.10 L106.0,491.10 L106.5,491.10 L107.0,491.10 L107.5,491.10 L108.0,491.10 L108.5,491.10 L109.0,491.10 L109.5,491.10 L110.0,491.10 L110.5,491.10 L111.0,491.10 L111.5,491.10 L112.0,491.10 L112.5,491.10 L113.0,491.10 L113.5,491.10 L114.0,491.10 L114.5,491.10 L115.0,491.10 L115.5,491.10 L116.0,491.10 L116.5,491.10 L117.0,491.10 L117.5,491.10 L118.0,491.10 L118.5,491.10 L119.0,491.10 L119.5,491.10 L120.0,491.10 L120.5,491.10 L121.0,491.10 L121.5,491.10 L122.0,491.10 L122.5,491.10 L123.0,491.10 L123.5,491.10 L124.0,491.10 L124.5,491.10 L125.0,491.10 L125.5,491.10 L126.0,491.10 L126.5,491.10 L127.0,491.10 L127.5,491.10 L128.0,491.10 L128.5,491.10 L129.0,491.10 L129.5,491.10 L130.0,491.10 L130.5,491.10 L131.0,491.10 L131.5,491.10 L132.0,491.10 L132.5,491.10 L133.0,491.10 L133.5,491.10 L134.0,491.10 L134.5,491.10 L135.0,491.10 L135.5,491.10 L136.0,491.10 L136.5,491.10 L137.0,491.10 L137.5,491.10 L138.0,491.10 L138.5,491.10 L139.0,491.10 L139.5,491.10 L140.0,491.10 L140.5,491.10 L141.0,491.10 L141.5,491.10 L142.0,491.10 L142.5,491.10 L143.0,491.10 L143.5,491.10 L144.0,491.10 L144.5,491.10 L145.0,491.10 L145.5,491.10 L146.0,491.10 L146.5,491.10 L147.0,491.10 L147.5,491.10 L148.0,491.10 L148.5,491.10 L149.0,491.10 L149.5,491.10 L150.0,491.10 L150.5,491.10 L151.0,491.10 L151.5,491.10 L152.0,491.10 L152.5,491.10 L153.0,491.10 L153.5,491.10 L154.0,491.10 L154.5,491.10 L155.0,491.10 L155.5,491.10 L156.0,491.10 L156.5,491.10 L157.0,491.10 L157.5,491.10 L158.0,491.10 L158.5,491.10 L159.0,491.10 L159.5,491.10 L160.0,491.10 L160.5,491.10 L161.0,491.10 L161.5,491.10 L162.0,491.10 L162.5,491.10 L163.0,491.10 L163.5,491.10 L164.0,491.10 L164.5,491.10 L165.0,491.10 L165.5,491.10 L166.0,491.10 L166.5,491.10 L167.0,491.10 L167.5,491.10 L168.0,491.10 L168.5,491.10 L169.0,491.10 L169.5,491.10 L170.0,491.10 L170.5,491.10 L171.0,491.10 L171.5,491.10 L172.0,491.10 L172.5,491.10 L173.0,491.10 L173.5,491.10 L174.0,491.10 L174.5,491.10 L175.0,491.10 L175.5,491.10 L176.0,491.10 L176.5,491.10 L177.0,491.10 L177.5,491.10 L178.0,491.10 L178.5,491.10 L179.0,491.10 L179.5,491.10 L180.0,491.10 L180.5,491.10 L181.0,491.10 L181.5,491.10 L182.0,491.10 L182.5,491.10 L183.0,491.10 L183.5,491.10 L184.0,491.10 L184.5,491.10 L185.0,491.10 L185.5,491.10 L186.0,491.10 L186.5,491.10 L187.0,491.10 L187.5,491.10 L188.0,491.10 L188.5,491.10 L189.0,491.10 L189.5,491.10 L190.0,491.10 L190.5,491.10 L191.0,491.10 L191.5,491.10 L192.0,491.10 L192.5,491.10 L193.0,491.10 L193.5,491.10 L194.0,491.10 L194.5,491.10 L195.0,491.10 L195.5,491.10 L196.0,491.10 L196.5,491.10 L197.0,491.10 L197.5,491.10 L198.0,491.10 L198.5,491.10 L199.0,491.10 L199.5,491.10 L200.0,491.10 L200.5,491.10 L201.0,491.10 L201.5,491.10 L202.0,491.10 L202.5,491.10 L203.0,491.10 L203.5,491.10 L204.0,491.10 L204.5,491.10 L205.0,491.10 L205.5,491.10 L206.0,491.10 L206.5,491.10 L207.0,491.10 L207.5,491.10 L208.0,491.10 L208.5,491.10 L209.0,491.10 L209.5,491.10 L210.0,491.10 L210.5,491.10 L211.0,491.10 L211.5,491.10 L212.0,491.10 L212.5,491.10 L213.0,491.10 L213.5,491.10 L214.0,491.10 L214.5,491.10 L215.0,491.10 L215.5,491.10 L216.0,491.10 L216.5,491.10 L217.0,491.10 L217.5,491.10 L218.0,491.10 L218.5,491.10 L219.0,491.10 L219.5,491.10 L220.0,491.10 L220.5,491.10 L221.0,491.10 L221.5,491.10 L222.0,491.10 L222.5,491.10 L223.0,491.10 L223.5,491.10 L224.0,491.10 L224.5,491.10 L225.0,491.10 L225.5,491.10 L226.0,491.10 L226.5,491.10 L227.0,491.10 L227.5,491.10 L228.0,491.10 L228.5,491.10 L229.0,491.10 L229.5,491.10 L230.0,491.10 L230.5,491.10 L231.0,491.10 L231.5,491.10 L232.0,491.10 L232.5,491.10 L233.0,491.10 L233.5,491.10 L234.0,491.10 L234.5,491.10 L235.0,491.10 L235.5,491.10 L236.0,491.10 L236.5,491.10 L237.0,491.10 L237.5,491.10 L238.0,491.10 L238.5,491.10 L239.0,491.10 L239.5,491.10 L240.0,491.10 L240.5,491.10 L241.0,491.10 L241.5,491.10 L242.0,491.10 L242.5,491.10 L243.0,491.10 L243.5,491.10 L244.0,491.10 L244.5,491.10 L245.0,491.10 L245.5,491.10 L246.0,491.10 L246.5,491.10 L247.0,491.10 L247.5,491.10 L248.0,491.10 L248.5,491.10 L249.0,491.10 L249.5,491.10 L250.0,491.10 L250.5,491.10 L251.0,491.10 L251.5,491.10 L252.0,491.10 L252.5,491.10 L253.0,491.10 L253.5,491.10 L254.0,491.10 L254.5,491.10 L255.0,491.10 L255.5,491.10 L256.0,491.10 L256.5,491.10 L257.0,491.10 L257.5,491.10 L258.0,491.10 L258.5,491.10 L259.0,491.10 L259.5,491.10 L260.0,491.10 L260.5,491.10 L261.0,491.10 L261.5,491.10 L262.0,491.10 L262.5,491.10 L263.0,491.10 L263.5,491.09 L264.0,491.09 L264.5,491.09 L265.0,491.09 L265.5,491.09 L266.0,491.09 L266.5,491.09 L267.0,491.08 L267.5,491.08 L268.0,491.08 L268.5,491.07 L269.0,491.07 L269.5,491.06 L270.0,491.06 L270.5,491.05 L271.0,491.05 L271.5,491.04 L272.0,491.03 L272.5,491.02 L273.0,491.01 L273.5,490.99 L274.0,490.98 L274.5,490.96 L275.0,490.94 L275.5,490.92 L276.0,490.89 L276.5,490.86 L277.0,490.83 L277.5,490.80 L278.0,490.76 L278.5,490.71 L279.0,490.66 L279.5,490.61 L280.0,490.55 L280.5,490.48 L281.0,490.41 L281.5,490.32 L282.0,490.23 L282.5,490.13 L283.0,490.02 L283.5,489.90 L284.0,489.76 L284.5,489.62 L285.0,489.45 L285.5,489.28 L286.0,489.09 L286.5,488.88 L287.0,488.65 L287.5,488.40 L288.0,488.14 L288.5,487.85 L289.0,487.54 L289.5,487.20 L290.0,486.84 L290.5,486.45 L291.0,486.03 L291.5,485.58 L292.0,485.10 L292.5,484.58 L293.0,484.04 L293.5,483.45 L294.0,482.84 L294.5,482.18 L295.0,481.48 L295.5,480.75 L296.0,479.97 L296.5,479.16 L297.0,478.30 L297.5,477.40 L298.0,476.45 L298.5,475.46 L299.0,474.43 L299.5,473.35 L300.0,472.24 L300.5,471.07 L301.0,469.87 L301.5,468.63 L302.0,467.34 L302.5,466.02 L303.0,464.66 L303.5,463.27 L304.0,461.84 L304.5,460.39 L305.0,458.90 L305.5,457.39 L306.0,455.86 L306.5,454.31 L307.0,452.75 L307.5,451.17 L308.0,449.59 L308.5,448.01 L309.0,446.43 L309.5,444.85 L310.0,443.29 L310.5,441.74 L311.0,440.21 L311.5,438.71 L312.0,437.23 L312.5,435.80 L313.0,434.40 L313.5,433.05 L314.0,431.75 L314.5,430.51 L315.0,429.33 L315.5,428.21 L316.0,427.15 L316.5,426.18 L317.0,425.28 L317.5,424.46 L318.0,423.72 L318.5,423.07 L319.0,422.51 L319.5,422.04 L320.0,421.66 L320.5,421.38 L321.0,421.20 L321.5,421.11 L322.0,421.12 L322.5,421.22 L323.0,421.43 L323.5,421.73 L324.0,422.12 L324.5,422.61 L325.0,423.19 L325.5,423.86 L326.0,424.61 L326.5,425.45 L327.0,426.37 L327.5,427.36 L328.0,428.42 L328.5,429.56 L329.0,430.75 L329.5,432.01 L330.0,433.32 L330.5,434.68 L331.0,436.08 L331.5,437.53 L332.0,439.00 L332.5,440.51 L333.0,442.05 L333.5,443.60 L334.0,445.17 L334.5,446.74 L335.0,448.33 L335.5,449.91 L336.0,451.49 L336.5,453.06 L337.0,454.62 L337.5,456.17 L338.0,457.70 L338.5,459.20 L339.0,460.68 L339.5,462.13 L340.0,463.55 L340.5,464.94 L341.0,466.29 L341.5,467.60 L342.0,468.88 L342.5,470.12 L343.0,471.31 L343.5,472.46 L344.0,473.57 L344.5,474.64 L345.0,475.66 L345.5,476.64 L346.0,477.58 L346.5,478.47 L347.0,479.32 L347.5,480.13 L348.0,480.90 L348.5,481.63 L349.0,482.31 L349.5,482.96 L350.0,483.57 L350.5,484.15 L351.0,484.69 L351.5,485.20 L352.0,485.67 L352.5,486.11 L353.0,486.53 L353.5,486.91 L354.0,487.27 L354.5,487.60 L355.0,487.91 L355.5,488.19 L356.0,488.46 L356.5,488.70 L357.0,488.92 L357.5,489.13 L358.0,489.32 L358.5,489.49 L359.0,489.65 L359.5,489.79 L360.0,489.92 L360.5,490.04 L361.0,490.15 L361.5,490.25 L362.0,490.34 L362.5,490.42 L363.0,490.49 L363.5,490.56 L364.0,490.62 L364.5,490.67 L365.0,490.72 L365.5,490.76 L366.0,490.80 L366.5,490.84 L367.0,490.87 L367.5,490.90 L368.0,490.92 L368.5,490.94 L369.0,490.96 L369.5,490.98 L370.0,490.99 L370.5,491.01 L371.0,491.02 L371.5,491.03 L372.0,491.04 L372.5,491.05 L373.0,491.05 L373.5,491.06 L374.0,491.07 L374.5,491.07 L375.0,491.07 L375.5,491.08 L376.0,491.08 L376.5,491.08 L377.0,491.09 L377.5,491.09 L378.0,491.09 L378.5,491.09 L379.0,491.09 L379.5,491.09 L380.0,491.09 L380.5,491.10 L381.0,491.10 L381.5,491.10 L382.0,491.10 L382.5,491.10 L383.0,491.10 L383.5,491.10 L384.0,491.10 L384.5,491.10 L385.0,491.10 L385.5,491.10 L386.0,491.10 L386.5,491.10 L387.0,491.10 L387.5,491.10 L388.0,491.10 L388.5,491.10 L389.0,491.10 L389.5,491.10 L390.0,491.10 L390.5,491.10 L391.0,491.10 L391.5,491.10 L392.0,491.10 L392.5,491.10 L393.0,491.10 L393.5,491.10 L394.0,491.10 L394.5,491.10 L395.0,491.10 L395.5,491.10 L396.0,491.10 L396.5,491.10 L397.0,491.10 L397.5,491.10 L398.0,491.10 L398.5,491.10 L399.0,491.10 L399.5,491.10 L400.0,491.10 L400.5,491.10 L401.0,491.10 L401.5,491.10 L402.0,491.10 L402.5,491.10 L403.0,491.10 L403.5,491.10 L404.0,491.10 L404.5,491.10 L405.0,491.10 L405.5,491.10 L406.0,491.10 L406.5,491.10 L407.0,491.10 L407.5,491.10 L408.0,491.10 L408.5,491.10 L409.0,491.10 L409.5,491.10 L410.0,491.10 L410.5,491.10 L411.0,491.10 L411.5,491.10 L412.0,491.10 L412.5,491.10 L413.0,491.10 L413.5,491.10 L414.0,491.10 L414.5,491.10 L415.0,491.10 L415.5,491.10 L416.0,491.10 L416.5,491.10 L417.0,491.10 L417.5,491.10 L418.0,491.10 L418.5,491.10 L419.0,491.10 L419.5,491.10 L420.0,491.10 L420.5,491.10 L421.0,491.10 L421.5,491.10 L422.0,491.10 L422.5,491.10 L423.0,491.10 L423.5,491.10 L424.0,491.10 L424.5,491.10 L425.0,491.10 L425.5,491.10 L426.0,491.10 L426.5,491.10 L427.0,491.10 L427.5,491.10 L428.0,491.10 L428.5,491.10 L429.0,491.10 L429.5,491.10 L430.0,491.10 L430.5,491.10 L431.0,491.10 L431.5,491.10 L432.0,491.10 L432.5,491.10 L433.0,491.10 L433.5,491.10 L434.0,491.10 L434.5,491.10 L435.0,491.10 L435.5,491.10 L436.0,491.10 L436.5,491.10 L437.0,491.10 L437.5,491.10 L438.0,491.10 L438.5,491.10 L439.0,491.10 L439.5,491.10 L440.0,491.10 L440.5,491.10 L441.0,491.10 L441.5,491.10 L442.0,491.10 L442.5,491.10 L443.0,491.10 L443.5,491.10 L444.0,491.10 L444.5,491.10 L445.0,491.10 L445.5,491.10 L446.0,491.10 L446.5,491.10 L447.0,491.10 L447.5,491.10 L448.0,491.10 L448.5,491.10 L449.0,491.10 L449.5,491.10 L450.0,491.10 L450.5,491.10 L451.0,491.10 L451.5,491.10 L452.0,491.10 L452.5,491.10 L453.0,491.10 L453.5,491.10 L454.0,491.10 L454.5,491.10 L455.0,491.10 L455.5,491.10 L456.0,491.10 L456.5,491.10 L457.0,491.10 L457.5,491.10 L458.0,491.10 L458.5,491.10 L459.0,491.10 L459.5,491.10 L460.0,491.10 L460.5,491.10 L461.0,491.10 L461.5,491.10 L462.0,491.10 L462.5,491.10 L463.0,491.10 L463.5,491.10 L464.0,491.10 L464.5,491.10 L465.0,491.10 L465.5,491.10 L466.0,491.10 L466.5,491.10 L467.0,491.10 L467.5,491.10 L468.0,491.10 L468.5,491.10 L469.0,491.10 L469.5,491.10 L470.0,491.10 L470.5,491.10 L471.0,491.10 L471.5,491.10 L472.0,491.10 L472.5,491.10 L473.0,491.10 L473.5,491.10 L474.0,491.10 L474.5,491.10 L475.0,491.10 L475.5,491.10 L476.0,491.10 L476.5,491.10 L477.0,491.10 L477.5,491.10 L478.0,491.10 L478.5,491.10 L479.0,491.10 L479.5,491.10 L480.0,491.10 L480.5,491.10 L481.0,491.10 L481.5,491.10 L482.0,491.10 L482.5,491.10 L483.0,491.10 L483.5,491.10 L484.0,491.10 L484.5,491.10 L485.0,491.10 L485.5,491.10 L486.0,491.10 L486.5,491.10 L487.0,491.10 L487.5,491.10 L488.0,491.10 L488.5,491.10 L489.0,491.10 L489.5,491.10 L490.0,491.10 L490.5,491.10 L491.0,491.10 L491.5,491.10 L492.0,491.10 L492.5,491.10 L493.0,491.10 L493.5,491.10 L494.0,491.10 L494.5,491.10 L495.0,491.10 L495.5,491.10 L496.0,491.10 L496.5,491.10 L497.0,491.10 L497.5,491.10 L498.0,491.10 L498.5,491.10 L499.0,491.10 L499.5,491.10 L500.0,491.10 L500.5,491.10 L501.0,491.10 L501.5,491.10 L502.0,491.10 L502.5,491.10 L503.0,491.10 L503.5,491.10 L504.0,491.10 L504.5,491.10 L505.0,491.10 L505.5,491.10 L506.0,491.10 L506.5,491.10 L507.0,491.10 L507.5,491.10 L508.0,491.10 L508.5,491.10 L509.0,491.10 L509.5,491.10 L510.0,491.10 L510.5,491.10 L511.0,491.10 L511.5,491.10 L512.0,491.10 L512.5,491.10 L513.0,491.10 L513.5,491.10 L514.0,491.10 L514.5,491.10 L515.0,491.10 L515.5,491.10 L516.0,491.10 L516.5,491.10 L517.0,491.10 L517.5,491.10 L518.0,491.10 L518.5,491.10 L519.0,491.10 L519.5,491.10 L520.0,491.10 L520.5,491.10 L521.0,491.10 L521.5,491.10 L522.0,491.10 L522.5,491.10 L523.0,491.10 L523.5,491.10 L524.0,491.10 L524.5,491.10 L525.0,491.10 L525.5,491.10 L526.0,491.10 L526.5,491.10 L527.0,491.10 L527.5,491.10 L528.0,491.10 L528.5,491.10 L529.0,491.10 L529.5,491.10 L530.0,491.10 L530.5,491.10 L531.0,491.10 L531.5,491.10 L532.0,491.10 L532.5,491.10 L533.0,491.10 L533.5,491.10 L534.0,491.10 L534.5,491.10 L535.0,491.10 L535.5,491.10 L536.0,491.10 L536.5,491.10 L537.0,491.10 L537.5,491.10 L538.0,491.10 L538.5,491.10 L539.0,491.10 L539.5,491.10 L540.0,491.10 L540.5,491.10 L541.0,491.10 L541.5,491.10 L542.0,491.10 L542.5,491.10 L543.0,491.10 L543.5,491.10 L544.0,491.10 L544.5,491.10 L545.0,491.10 L545.5,491.10 L546.0,491.10 L546.5,491.10 L547.0,491.10 L547.5,491.10 L548.0,491.10 L548.5,491.10 L549.0,491.10 L549.5,491.10 L550.0,491.10 L550.5,491.10 L551.0,491.10 L551.5,491.10 L552.0,491.10 L552.5,491.10 L553.0,491.10 L553.5,491.10 L554.0,491.10 L554.5,491.10 L555.0,491.10 L555.5,491.10 L556.0,491.10 L556.5,491.10 L557.0,491.10 L557.5,491.10 L558.0,491.10 L558.5,491.10 L559.0,491.10 L559.5,491.10 L560.0,491.10 L560.5,491.10 L561.0,491.10 L561.5,491.10 L562.0,491.10 L562.5,491.10 L563.0,491.10 L563.5,491.10 L564.0,491.10 L564.5,491.10 L565.0,491.10 L565.5,491.10 L566.0,491.10 L566.5,491.10 L567.0,491.10 L567.5,491.10 L568.0,491.10 L568.5,491.10 L569.0,491.10 L569.5,491.10 L570.0,491.10 L570.5,491.10 L571.0,491.10 L571.5,491.10 L572.0,491.10 L572.5,491.10 L573.0,491.10 L573.5,491.10 L574.0,491.10 L574.5,491.10 L575.0,491.10 L575.5,491.10 L576.0,491.10 L576.5,491.10 L577.0,491.10 L577.5,491.10 L578.0,491.10 L578.5,491.10 L579.0,491.10 L579.5,491.10 L580.0,491.10 L580.5,491.10 L581.0,491.10 L581.5,491.10 L582.0,491.10 L582.5,491.10 L583.0,491.10 L583.5,491.10 L584.0,491.10 L584.5,491.10 L585.0,491.10 L585.5,491.10 L586.0,491.10 L586.5,491.10 L587.0,491.10 L587.5,491.10 L588.0,491.10 L588.5,491.10 L589.0,491.10 L589.5,491.10 L590.0,491.10 L590.5,491.10 L591.0,491.10 L591.5,491.10 L592.0,491.10 L592.5,491.10 L593.0,491.10 L593.5,491.10 L594.0,491.10 L594.5,491.10 L595.0,491.10 L595.5,491.10 L596.0,491.10 L596.5,491.10 L597.0,491.10 L597.5,491.10 L598.0,491.10 L598.5,491.10 L599.0,491.10 L599.5,491.10 L600.0,491.10 L600.5,491.10 L601.0,491.10 L601.5,491.10 L602.0,491.10 L602.5,491.10 L603.0,491.10 L603.5,491.10 L604.0,491.10 L604.5,491.10 L605.0,491.10 L605.5,491.10 L606.0,491.10 L606.5,491.10 L607.0,491.10 L607.5,491.10 L608.0,491.10 L608.5,491.10 L609.0,491.10 L609.5,491.10 L610.0,491.10 L610.5,491.10 L611.0,491.10 L611.5,491.10 L612.0,491.10 L612.5,491.10 L613.0,491.10 L613.5,491.10 L614.0,491.10 L614.5,491.10 L615.0,491.10 L615.5,491.10 L616.0,491.10 L616.5,491.10 L617.0,491.10 L617.5,491.10 L618.0,491.10 L618.5,491.10 L619.0,491.10 L619.5,491.10 L620.0,491.10 L620.5,491.10 L621.0,491.10 L621.5,491.10 L622.0,491.10 L622.5,491.10 L623.0,491.10 L623.5,491.10 L624.0,491.10 L624.5,491.10 L625.0,491.10 L625.5,491.10 L626.0,491.10 L626.5,491.10 L627.0,491.10 L627.5,491.10 L628.0,491.10 L628.5,491.10 L629.0,491.10 L629.5,491.10 L630.0,491.10 L630.5,491.10 L631.0,491.10 L631.5,491.10 L632.0,491.10 L632.5,491.10 L633.0,491.10 L633.5,491.10 L634.0,491.10 L634.5,491.10 L635.0,491.10 L635.5,491.10 L636.0,491.10 L636.5,491.10 L637.0,491.10 L637.5,491.10 L638.0,491.10 L638.5,491.10 L639.0,491.10 L639.5,491.10 L640.0,491.10 L640.5,491.10 L641.0,491.10 L641.5,491.10 L642.0,491.10 L642.5,491.10 L643.0,491.10 L643.5,491.10 L644.0,491.10 L644.5,491.10 L645.0,491.10 L645.5,491.10 L646.0,491.10 L646.5,491.10 L647.0,491.10 L647.5,491.10 L648.0,491.10 L648.5,491.10 L649.0,491.10 L649.5,491.10 L650.0,491.10 L650.5,491.10 L651.0,491.10 L651.5,491.10 L652.0,491.10 L652.5,491.10 L653.0,491.10 L653.5,491.10 L654.0,491.10 L654.5,491.10 L655.0,491.10 L655.5,491.10 L656.0,491.10 L656.5,491.10 L657.0,491.10 L657.5,491.10 L658.0,491.10 L658.5,491.10 L659.0,491.10 L659.5,491.10 L660.0,491.10 L660.5,491.10 L661.0,491.10 L661.5,491.10 L662.0,491.10 L662.5,491.10 L663.0,491.10 L663.5,491.10 L664.0,491.10 L664.5,491.10 L665.0,491.10 L665.5,491.10 L666.0,491.10 L666.5,491.10 L667.0,491.10 L667.5,491.10 L668.0,491.10 L668.5,491.10 L669.0,491.10 L669.5,491.10 L670.0,491.10 L670.5,491.10 L671.0,491.10 L671.5,491.10 L672.0,491.10 L672.5,491.10 L673.0,491.10 L673.5,491.10 L674.0,491.10 L674.5,491.10 L675.0,491.10 L675.5,491.10 L676.0,491.10 L676.5,491.10 L677.0,491.10 L677.5,491.10 L678.0,491.10 L678.5,491.10 L679.0,491.10 L679.5,491.10 L680.0,491.10 L680.5,491.10 L681.0,491.10 L681.5,491.10 L682.0,491.10 L682.5,491.10 L683.0,491.10 L683.5,491.10 L684.0,491.10 L684.5,491.10 L685.0,491.10 L685.5,491.10 L686.0,491.10 L686.5,491.10 L687.0,491.10 L687.5,491.10 L688.0,491.10 L688.5,491.10 L689.0,491.10 L689.5,491.10 L690.0,491.10 L690.5,491.10 L691.0,491.10 L691.5,491.10 L692.0,491.10 L692.5,491.10 L693.0,491.10 L693.5,491.10 L694.0,491.10 L694.5,491.10 L695.0,491.10 L695.5,491.10 L696.0,491.10 L696.5,491.10 L697.0,491.10 L697.5,491.10 L698.0,491.10 L698.5,491.10 L699.0,491.10 L699.5,491.10 L700.0,491.10 L700.5,491.10 L701.0,491.10 L701.5,491.10 L702.0,491.10 L702.5,491.10 L703.0,491.10 L703.5,491.10 L704.0,491.10 L704.5,491.10 L705.0,491.10 L705.5,491.10 L706.0,491.10 L706.5,491.10 L707.0,491.10 L707.5,491.10 L708.0,491.10 L708.5,491.10 L709.0,491.10 L709.5,491.10 L710.0,491.10 L710.5,491.10 L711.0,491.10 L711.5,491.10 L712.0,491.10 L712.5,491.10 L713.0,491.10 L713.5,491.10 L714.0,491.10 L714.5,491.10 L715.0,491.10 L715.5,491.10 L716.0,491.10 L716.5,491.10 L717.0,491.10 L717.5,491.10 L718.0,491.10 L718.5,491.10 L719.0,491.10 L719.5,491.10 L720.0,491.10 L720.5,491.10 L721.0,491.10 L721.5,491.10 L722.0,491.10 L722.5,491.10 L723.0,491.10 L723.5,491.10 L724.0,491.10 L724.5,491.10 L725.0,491.10 L725.5,491.10 L726.0,491.10 L726.5,491.10 L727.0,491.10 L727.5,491.10 L728.0,491.10 L728.5,491.10 L729.0,491.10 L729.5,491.10 L730.0,491.10 L730.5,491.10 L731.0,491.10 L731.5,491.10 L732.0,491.10 L732.5,491.10 L733.0,491.10 L733.5,491.10 L734.0,491.10 L734.5,491.10 L735.0,491.10 L735.5,491.10 L736.0,491.10 L736.5,491.10 L737.0,491.10 L737.5,491.10 L738.0,491.10 L738.5,491.10 L739.0,491.10 L739.5,491.10 L740.0,491.10 L740.5,491.10 L741.0,491.10 L741.5,491.10 L742.0,491.10 L742.5,491.10 L743.0,491.10 L743.5,491.10 L744.0,491.10 L744.5,491.10 L745.0,491.10 L745.5,491.10 L746.0,491.10 L746.5,491.10 L747.0,491.10 L747.5,491.10 L748.0,491.10 L748.5,491.10 L749.0,491.10 L749.5,491.10 L750.0,491.10 L750.5,491.10 L751.0,491.10 L751.5,491.10 L752.0,491.10 L752.5,491.10 L753.0,491.10 L753.5,491.10 L754.0,491.10 L754.5,491.10 L755.0,491.10 L755.5,491.10 L756.0,491.10 L756.5,491.10 L757.0,491.10 L757.5,491.10 L758.0,491.10 L758.5,491.10 L759.0,491.10 L759.5,491.10 L760.0,491.10 L760.5,491.10 L761.0,491.10 L761.5,491.10 L762.0,491.10 L762.5,491.10 L763.0,491.10 L763.5,491.10 L764.0,491.10 L764.5,491.10 L765.0,491.10 L765.5,491.10 L766.0,491.10 L766.5,491.10 L767.0,491.10 L767.5,491.10 L768.0,491.10 L768.5,491.10 L769.0,491.10 L769.5,491.10 L770.0,491.10 L770.5,491.10 L771.0,491.10 L771.5,491.10 L772.0,491.10 L772.5,491.10 L773.0,491.10 L773.5,491.10 L774.0,491.10 L774.5,491.10 L775.0,491.10 L775.5,491.10 L776.0,491.10 L776.5,491.10 L777.0,491.10 L777.5,491.10 L778.0,491.10 L778.5,491.10 L779.0,491.10 L779.5,491.10 L780.0,491.10 L780.5,491.10 L781.0,491.10 L781.5,491.10 L782.0,491.10 L782.5,491.10 L783.0,491.10 L783.5,491.10 L784.0,491.10 L784.5,491.10 L785.0,491.10 L785.5,491.10 L786.0,491.10 L786.5,491.10 L787.0,491.10 L787.5,491.10 L788.0,491.10 L788.5,491.10 L789.0,491.10 L789.5,491.10 L790.0,491.10 L790.5,491.10 L791.0,491.10 L791.5,491.10 L792.0,491.10 L792.5,491.10 L793.0,491.10 L793.5,491.10 L794.0,491.10 L794.5,491.10 L795.0,491.10 L795.5,491.10 L796.0,491.10 L796.5,491.10 L797.0,491.10 L797.5,491.10 L798.0,491.10 L798.5,491.10 L799.0,491.10 L799.5,491.10 L800.0,491.10 L800.5,491.10 L801.0,491.10 L801.5,491.10 L802.0,491.10 L802.5,491.10 L803.0,491.10 L803.5,491.10 L804.0,491.10 L804.5,491.10 L805.0,491.10 L805.5,491.10 L806.0,491.10 L806.5,491.10 L807.0,491.10 L807.5,491.10 L808.0,491.10 L808.5,491.10 L809.0,491.10 L809.5,491.10 L810.0,491.10 L810.5,491.10 L811.0,491.10 L811.5,491.10 L812.0,491.10 L812.5,491.10 L813.0,491.10 L813.5,491.10 L814.0,491.10 L814.5,491.10 L815.0,491.10 L815.5,491.10 L816.0,491.10 L816.5,491.10 L817.0,491.10 L817.5,491.10 L818.0,491.10 L818.5,491.10 L819.0,491.10 L819.5,491.10 L820.0,491.10 L820.5,491.10 L821.0,491.10 L821.5,491.10 L822.0,491.10 L822.5,491.10 L823.0,491.10 L823.5,491.10 L824.0,491.10 L824.5,491.10 L825.0,491.10 L825.5,491.10 L826.0,491.10 L826.5,491.10 L827.0,491.10 L827.5,491.10 L828.0,491.10 L828.5,491.10 L829.0,491.10 L829.5,491.10 L830.0,491.10 L830.5,491.10 L831.0,491.10 L831.5,491.10 L832.0,491.10 L832.5,491.10 L833.0,491.10 L833.5,491.10 L834.0,491.10 L834.5,491.10 L835.0,491.10 L835.5,491.10 L836.0,491.10 L836.5,491.10 L837.0,491.10 L837.5,491.10 L838.0,491.10 L838.5,491.10 L839.0,491.10 L839.5,491.10 L840.0,491.10 L840.5,491.10 L841.0,491.10 L841.5,491.10 L842.0,491.10 L842.5,491.10 L843.0,491.10 L843.5,491.10 L844.0,491.10 L844.5,491.10 L845.0,491.10 L845.5,491.10 L846.0,491.10 L846.5,491.10 L847.0,491.10 L847.5,491.10 L848.0,491.10 L848.5,491.10 L849.0,491.10 L849.5,491.10 L850.0,491.10 L850.5,491.10 L851.0,491.10 L851.5,491.10 L852.0,491.10 L852.5,491.10 L853.0,491.10 L853.5,491.10 L854.0,491.10 L854.5,491.10 L855.0,491.10 L855.5,491.10 L856.0,491.10 L856.5,491.10 L857.0,491.10 L857.5,491.10 L858.0,491.10 L858.5,491.10 L859.0,491.10 L859.5,491.10 L860.0,491.10 L860.5,491.10 L861.0,491.10 L861.5,491.10 L862.0,491.10 L862.5,491.10 L863.0,491.10 L863.5,491.10 L864.0,491.10 L864.5,491.10 L865.0,491.10 L865.5,491.10 L866.0,491.10 L866.5,491.10 L867.0,491.10 L867.5,491.10 L868.0,491.10 L868.5,491.10 L869.0,491.10 L869.5,491.10 L870.0,491.10 L870.5,491.10 L871.0,491.10 L871.5,491.10 L872.0,491.10 L872.5,491.10 L873.0,491.10 L873.5,491.10 L874.0,491.10 L874.5,491.10 L875.0,491.10 L875.5,491.10 L876.0,491.10 L876.5,491.10 L877.0,491.10 L877.5,491.10 L878.0,491.10 L878.5,491.10 L879.0,491.10 L879.5,491.10 L880.0,491.10 L880.5,491.10 L881.0,491.10 L881.5,491.10 L882.0,491.10 L882.5,491.10 L883.0,491.10 L883.5,491.10 L884.0,491.10 L884.5,491.10 L885.0,491.10 L885.5,491.10 L886.0,491.10 L886.5,491.10 L887.0,491.10 L887.5,491.10 L888.0,491.10 L888.5,491.10 L889.0,491.10 L889.5,491.10 L890.0,491.10 L890.5,491.10 L891.0,491.10 L891.5,491.10 L892.0,491.10 L892.5,491.10 L893.0,491.10 L893.5,491.10 L894.0,491.10 L894.5,491.10 L895.0,491.10 L895.5,491.10 L896.0,491.10 L896.5,491.10 L897.0,491.10 L897.5,491.10 L898.0,491.10" fill="none" stroke="#60e060" stroke-width="0.8"/><path d="M0.0,491.10 L0.5,491.10 L1.0,491.10 L1.5,491.10 L2.0,491.10 L2.5,491.10 L3.0,491.10 L3.5,491.10 L4.0,491.10 L4.5,491.10 L5.0,491.10 L5.5,491.10 L6.0,491.10 L6.5,491.10 L7.0,491.10 L7.5,491.10 L8.0,491.10 L8.5,491.10 L9.0,491.10 L9.5,491.10 L10.0,491.10 L10.5,491.10 L11.0,491.10 L11.5,491.10 L12.0,491.10 L12.5,491.10 L13.0,491.10 L13.5,491.10 L14.0,491.10 L14.5,491.10 L15.0,491.10 L15.5,491.10 L16.0,491.10 L16.5,491.10 L17.0,491.10 L17.5,491.10 L18.0,491.10 L18.5,491.10 L19.0,491.10 L19.5,491.10 L20.0,491.10 L20.5,491.10 L21.0,491.10 L21.5,491.10 L22.0,491.10 L22.5,491.10 L23.0,491.10 L23.5,491.10 L24.0,491.10 L24.5,491.10 L25.0,491.10 L25.5,491.10 L26.0,491.10 L26.5,491.10 L27.0,491.10 L27.5,491.10 L28.0,491.10 L28.5,491.10 L29.0,491.10 L29.5,491.10 L30.0,491.10 L30.5,491.10 L31.0,491.10 L31.5,491.10 L32.0,491.10 L32.5,491.10 L33.0,491.10 L33.5,491.10 L34.0,491.10 L34.5,491.10 L35.0,491.10 L35.5,491.10 L36.0,491.10 L36.5,491.10 L37.0,491.10 L37.5,491.10 L38.0,491.10 L38.5,491.10 L39.0,491.10 L39.5,491.10 L40.0,491.10 L40.5,491.10 L41.0,491.10 L41.5,491.10 L42.0,491.10 L42.5,491.10 L43.0,491.10 L43.5,491.10 L44.0,491.10 L44.5,491.10 L45.0,491.10 L45.5,491.10 L46.0,491.10 L46.5,491.10 L47.0,491.10 L47.5,491.10 L48.0,491.10 L48.5,491.10 L49.0,491.10 L49.5,491.10 L50.0,491.10 L50.5,491.10 L51.0,491.10 L51.5,491.10 L52.0,491.10 L52.5,491.10 L53.0,491.10 L53.5,491.10 L54.0,491.10 L54.5,491.10 L55.0,491.10 L55.5,491.10 L56.0,491.10 L56.5,491.10 L57.0,491.10 L57.5,491.10 L58.0,491.10 L58.5,491.10 L59.0,491.10 L59.5,491.10 L60.0,491.10 L60.5,491.10 L61.0,491.10 L61.5,491.10 L62.0,491.10 L62.5,491.10 L63.0,491.10 L63.5,491.10 L64.0,491.10 L64.5,491.10 L65.0,491.10 L65.5,491.10 L66.0,491.10 L66.5,491.10 L67.0,491.10 L67.5,491.10 L68.0,491.10 L68.5,491.10 L69.0,491.10 L69.5,491.10 L70.0,491.10 L70.5,491.10 L71.0,491.10 L71.5,491.10 L72.0,491.10 L72.5,491.10 L73.0,491.10 L73.5,491.10 L74.0,491.10 L74.5,491.10 L75.0,491.10 L75.5,491.10 L76.0,491.10 L76.5,491.10 L77.0,491.10 L77.5,491.10 L78.0,491.10 L78.5,491.10 L79.0,491.10 L79.5,491.10 L80.0,491.10 L80.5,491.10 L81.0,491.10 L81.5,491.10 L82.0,491.10 L82.5,491.10 L83.0,491.10 L83.5,491.10 L84.0,491.10 L84.5,491.10 L85.0,491.10 L85.5,491.10 L86.0,491.10 L86.5,491.10 L87.0,491.10 L87.5,491.10 L88.0,491.10 L88.5,491.10 L89.0,491.10 L89.5,491.10 L90.0,491.10 L90.5,491.10 L91.0,491.10 L91.5,491.10 L92.0,491.10 L92.5,491.10 L93.0,491.10 L93.5,491.10 L94.0,491.10 L94.5,491.10 L95.0,491.10 L95.5,491.10 L96.0,491.10 L96.5,491.10 L97.0,491.10 L97.5,491.10 L98.0,491.10 L98.5,491.10 L99.0,491.10 L99.5,491.10 L100.0,491.10 L100.5,491.10 L101.0,491.10 L101.5,491.10 L102.0,491.10 L102.5,491.10 L103.0,491.10 L103.5,491.10 L104.0,491.10 L104.5,491.10 L105.0,491.10 L105.5,491.10 L106.0,491.10 L106.5,491.00 L107.0,490.97 L107.5,490.92 L108.0,490.85 L108.5,490.77 L109.0,490.66 L109.5,490.54 L110.0,490.39 L110.5,490.22 L111.0,490.04 L111.5,489.85 L112.0,489.68 L112.5,489.52 L113.0,489.38 L113.5,489.27 L114.0,489.18 L114.5,489.11 L115.0,489.05 L115.5,489.01 L116.0,488.98 L116.5,488.96 L117.0,488.94 L117.5,488.93 L118.0,488.92 L118.5,488.92 L119.0,488.91 L119.5,488.91 L120.0,488.90 L120.5,488.90 L121.0,488.90 L121.5,488.90 L122.0,488.90 L122.5,488.90 L123.0,488.90 L123.5,488.89 L124.0,488.89 L124.5,488.89 L125.0,488.89 L125.5,488.88 L126.0,488.88 L126.5,488.87 L127.0,488.86 L127.5,488.85 L128.0,488.84 L128.5,488.82 L129.0,488.80 L129.5,488.77 L130.0,488.74 L130.5,488.70 L131.0,488.65 L131.5,488.59 L132.0,488.51 L132.5,488.42 L133.0,488.31 L133.5,488.18 L134.0,488.02 L134.5,487.83 L135.0,487.60 L135.5,487.32 L136.0,487.00 L136.5,486.61 L137.0,486.16 L137.5,485.62 L138.0,485.00 L138.5,484.27 L139.0,483.41 L139.5,482.43 L140.0,481.29 L140.5,479.97 L141.0,478.47 L141.5,476.74 L142.0,474.78 L142.5,472.55 L143.0,470.04 L143.5,467.20 L144.0,464.02 L144.5,460.45 L145.0,456.49 L145.5,452.08 L146.0,447.21 L146.5,444.04 L147.0,438.16 L147.5,431.72 L148.0,424.71 L148.5,417.11 L149.0,408.89 L149.5,400.06 L150.0,390.59 L150.5,380.49 L151.0,369.76 L151.5,358.40 L152.0,346.44 L152.5,333.90 L153.0,320.81 L153.5,307.21 L154.0,293.15 L154.5,278.68 L155.0,263.87 L155.5,248.79 L156.0,233.52 L156.5,218.15 L157.0,202.76 L157.5,187.46 L158.0,172.34 L158.5,157.52 L159.0,143.09 L159.5,129.18 L160.0,115.87 L160.5,103.28 L161.0,91.52 L161.5,80.66 L162.0,70.82 L162.5,62.06 L163.0,54.47 L163.5,48.10 L164.0,43.01 L164.5,39.24 L165.0,36.83 L165.5,35.77 L166.0,36.09 L166.5,37.77 L167.0,40.79 L167.5,45.10 L168.0,50.67 L168.5,57.44 L169.0,65.34 L169.5,74.29 L170.0,84.20 L170.5,94.98 L171.0,106.53 L171.5,118.76 L172.0,131.55 L172.5,144.80 L173.0,158.40 L173.5,172.26 L174.0,186.26 L174.5,200.30 L175.0,214.31 L175.5,228.18 L176.0,241.83 L176.5,255.20 L177.0,268.22 L177.5,280.82 L178.0,292.96 L178.5,304.60 L179.0,315.69 L179.5,326.23 L180.0,336.18 L180.5,345.54 L181.0,354.30 L181.5,362.47 L182.0,370.06 L182.5,377.07 L183.0,383.54 L183.5,389.46 L184.0,394.89 L184.5,399.83 L185.0,404.33 L185.5,408.41 L186.0,412.10 L186.5,415.40 L187.0,418.37 L187.5,421.05 L188.0,423.47 L188.5,425.64 L189.0,427.61 L189.5,429.39 L190.0,431.01 L190.5,432.49 L191.0,433.84 L191.5,435.08 L192.0,436.23 L192.5,437.30 L193.0,438.29 L193.5,439.23 L194.0,440.10 L194.5,440.93 L195.0,441.70 L195.5,442.44 L196.0,443.14 L196.5,443.80 L197.0,444.42 L197.5,445.00 L198.0,445.56 L198.5,446.08 L199.0,446.56 L199.5,447.02 L200.0,447.44 L200.5,447.83 L201.0,448.19 L201.5,448.53 L202.0,448.83 L202.5,449.11 L203.0,449.37 L203.5,449.60 L204.0,449.81 L204.5,450.04 L205.0,450.25 L205.5,450.45 L206.0,450.64 L206.5,450.81 L207.0,450.97 L207.5,451.12 L208.0,451.26 L208.5,451.40 L209.0,451.53 L209.5,451.66 L210.0,451.79 L210.5,451.91 L211.0,452.03 L211.5,452.15 L212.0,452.28 L212.5,452.40 L213.0,452.53 L213.5,452.65 L214.0,452.79 L214.5,452.92 L215.0,453.06 L215.5,453.20 L216.0,453.34 L216.5,453.49 L217.0,453.64 L217.5,453.79 L218.0,453.95 L218.5,454.11 L219.0,454.27 L219.5,454.43 L220.0,454.59 L220.5,454.76 L221.0,454.92 L221.5,455.09 L222.0,455.25 L222.5,455.42 L223.0,455.58 L223.5,455.74 L224.0,455.89 L224.5,456.05 L225.0,456.19 L225.5,456.29 L226.0,456.37 L226.5,456.45 L227.0,456.52 L227.5,456.58 L228.0,456.64 L228.5,456.69 L229.0,456.73 L229.5,456.77 L230.0,456.81 L230.5,456.83 L231.0,456.85 L231.5,456.87 L232.0,456.88 L232.5,456.88 L233.0,456.88 L233.5,456.88 L234.0,456.87 L234.5,456.86 L235.0,456.85 L235.5,456.84 L236.0,456.83 L236.5,456.81 L237.0,456.80 L237.5,456.79 L238.0,456.79 L238.5,456.78 L239.0,456.78 L239.5,456.79 L240.0,456.80 L240.5,456.81 L241.0,456.84 L241.5,456.87 L242.0,456.90 L242.5,456.95 L243.0,457.00 L243.5,457.06 L244.0,457.13 L244.5,457.20 L245.0,457.29 L245.5,457.38 L246.0,457.48 L246.5,457.55 L247.0,457.62 L247.5,457.70 L248.0,457.78 L248.5,457.87 L249.0,457.96 L249.5,458.05 L250.0,458.14 L250.5,458.24 L251.0,458.34 L251.5,458.43 L252.0,458.53 L252.5,458.62 L253.0,458.71 L253.5,458.79 L254.0,458.88 L254.5,458.95 L255.0,459.02 L255.5,459.08 L256.0,459.14 L256.5,459.19 L257.0,459.23 L257.5,459.26 L258.0,459.29 L258.5,459.30 L259.0,459.31 L259.5,459.31 L260.0,459.30 L260.5,459.29 L261.0,459.27 L261.5,459.36 L262.0,459.47 L262.5,459.58 L263.0,459.68 L263.5,459.78 L264.0,459.87 L264.5,459.96 L265.0,460.05 L265.5,460.13 L266.0,460.22 L266.5,460.30 L267.0,460.38 L267.5,460.46 L268.0,460.55 L268.5,460.63 L269.0,460.72 L269.5,460.81 L270.0,460.90 L270.5,460.99 L271.0,461.08 L271.5,461.18 L272.0,461.28 L272.5,461.38 L273.0,461.48 L273.5,461.58 L274.0,461.68 L274.5,461.79 L275.0,461.89 L275.5,461.99 L276.0,462.09 L276.5,462.18 L277.0,462.27 L277.5,462.35 L278.0,462.43 L278.5,462.49 L279.0,462.55 L279.5,462.63 L280.0,462.71 L280.5,462.77 L281.0,462.81 L281.5,462.84 L282.0,462.85 L282.5,462.84 L283.0,462.81 L283.5,462.75 L284.0,462.68 L284.5,462.57 L285.0,462.44 L285.5,462.28 L286.0,462.10 L286.5,461.88 L287.0,461.63 L287.5,461.35 L288.0,461.03 L288.5,460.68 L289.0,460.30 L289.5,459.88 L290.0,459.42 L290.5,458.93 L291.0,458.40 L291.5,457.84 L292.0,457.24 L292.5,456.60 L293.0,455.93 L293.5,455.21 L294.0,454.47 L294.5,453.68 L295.0,452.86 L295.5,452.01 L296.0,451.12 L296.5,450.21 L297.0,449.26 L297.5,448.28 L298.0,447.27 L298.5,446.23 L299.0,445.18 L299.5,444.09 L300.0,442.99 L300.5,441.87 L301.0,440.74 L301.5,439.59 L302.0,438.43 L302.5,437.26 L303.0,436.08 L303.5,434.91 L304.0,433.74 L304.5,432.57 L305.0,431.41 L305.5,430.26 L306.0,429.12 L306.5,428.01 L307.0,426.92 L307.5,425.77 L308.0,424.64 L308.5,423.54 L309.0,422.48 L309.5,421.46 L310.0,420.48 L310.5,419.55 L311.0,418.67 L311.5,417.84 L312.0,417.08 L312.5,416.37 L313.0,415.72 L313.5,415.14 L314.0,414.63 L314.5,414.19 L315.0,413.82 L315.5,413.53 L316.0,413.31 L316.5,413.17 L317.0,413.11 L317.5,413.13 L318.0,413.23 L318.5,413.41 L319.0,413.67 L319.5,414.01 L320.0,414.43 L320.5,414.93 L321.0,415.50 L321.5,416.15 L322.0,416.88 L322.5,417.68 L323.0,418.55 L323.5,419.48 L324.0,420.49 L324.5,421.55 L325.0,422.67 L325.5,423.85 L326.0,425.09 L326.5,426.37 L327.0,427.70 L327.5,429.07 L328.0,430.48 L328.5,431.93 L329.0,433.40 L329.5,434.90 L330.0,436.43 L330.5,437.97 L331.0,439.53 L331.5,441.10 L332.0,442.68 L332.5,444.26 L333.0,445.84 L333.5,447.41 L334.0,448.98 L334.5,450.54 L335.0,452.09 L335.5,453.62 L336.0,455.13 L336.5,456.62 L337.0,458.08 L337.5,459.52 L338.0,460.92 L338.5,462.30 L339.0,463.64 L339.5,464.95 L340.0,466.23 L340.5,467.46 L341.0,468.66 L341.5,469.82 L342.0,470.94 L342.5,472.02 L343.0,473.06 L343.5,474.05 L344.0,475.01 L344.5,475.92 L345.0,476.79 L345.5,477.62 L346.0,478.41 L346.5,479.16 L347.0,479.87 L347.5,480.54 L348.0,481.18 L348.5,481.77 L349.0,482.33 L349.5,482.85 L350.0,483.34 L350.5,483.79 L351.0,484.21 L351.5,484.60 L352.0,484.96 L352.5,485.30 L353.0,485.60 L353.5,485.88 L354.0,486.13 L354.5,486.36 L355.0,486.57 L355.5,486.76 L356.0,486.93 L356.5,487.08 L357.0,487.21 L357.5,487.33 L358.0,487.44 L358.5,487.53 L359.0,487.62 L359.5,487.69 L360.0,487.75 L360.5,487.81 L361.0,487.86 L361.5,487.91 L362.0,487.95 L362.5,487.99 L363.0,488.02 L363.5,488.06 L364.0,488.09 L364.5,488.13 L365.0,488.16 L365.5,488.20 L366.0,488.24 L366.5,488.28 L367.0,488.32 L367.5,488.37 L368.0,488.41 L368.5,488.47 L369.0,488.52 L369.5,488.58 L370.0,488.64 L370.5,488.70 L371.0,488.77 L371.5,488.84 L372.0,488.91 L372.5,488.99 L373.0,489.06 L373.5,489.14 L374.0,489.22 L374.5,489.30 L375.0,489.38 L375.5,489.46 L376.0,489.54 L376.5,489.62 L377.0,489.70 L377.5,489.77 L378.0,489.85 L378.5,489.93 L379.0,490.00 L379.5,490.07 L380.0,490.14 L380.5,490.20 L381.0,490.27 L381.5,490.33 L382.0,490.39 L382.5,490.44 L383.0,490.50 L383.5,490.55 L384.0,490.59 L384.5,490.64 L385.0,490.68 L385.5,490.72 L386.0,490.75 L386.5,490.79 L387.0,490.82 L387.5,490.85 L388.0,490.87 L388.5,490.90 L389.0,490.92 L389.5,490.94 L390.0,490.96 L390.5,490.97 L391.0,490.99 L391.5,491.00 L392.0,491.01 L392.5,491.02 L393.0,491.03 L393.5,491.04 L394.0,491.05 L394.5,491.06 L395.0,491.06 L395.5,491.07 L396.0,491.07 L396.5,491.08 L397.0,491.08 L397.5,491.08 L398.0,491.08 L398.5,491.09 L399.0,491.09 L399.5,491.09 L400.0,491.09 L400.5,491.09 L401.0,491.09 L401.5,491.10 L402.0,491.10 L402.5,491.10 L403.0,491.10 L403.5,491.10 L404.0,491.10 L404.5,491.10 L405.0,491.10 L405.5,491.10 L406.0,491.10 L406.5,491.10 L407.0,491.10 L407.5,491.10 L408.0,491.10 L408.5,491.10 L409.0,491.10 L409.5,491.10 L410.0,491.10 L410.5,491.10 L411.0,491.10 L411.5,491.10 L412.0,491.10 L412.5,491.10 L413.0,491.10 L413.5,491.10 L414.0,491.10 L414.5,491.10 L415.0,491.10 L415.5,491.10 L416.0,491.10 L416.5,491.10 L417.0,491.10 L417.5,491.10 L418.0,491.10 L418.5,491.10 L419.0,491.10 L419.5,491.10 L420.0,491.10 L420.5,491.10 L421.0,491.10 L421.5,491.10 L422.0,491.10 L422.5,491.10 L423.0,491.10 L423.5,491.10 L424.0,491.10 L424.5,491.10 L425.0,491.10 L425.5,491.10 L426.0,491.10 L426.5,491.10 L427.0,491.10 L427.5,491.10 L428.0,491.10 L428.5,491.10 L429.0,491.10 L429.5,491.10 L430.0,491.10 L430.5,491.10 L431.0,491.10 L431.5,491.10 L432.0,491.10 L432.5,491.10 L433.0,491.10 L433.5,491.10 L434.0,491.10 L434.5,491.10 L435.0,491.10 L435.5,491.10 L436.0,491.10 L436.5,491.10 L437.0,491.10 L437.5,491.10 L438.0,491.10 L438.5,491.10 L439.0,491.10 L439.5,491.10 L440.0,491.10 L440.5,491.10 L441.0,491.10 L441.5,491.10 L442.0,491.10 L442.5,491.10 L443.0,491.10 L443.5,491.10 L444.0,491.10 L444.5,491.10 L445.0,491.10 L445.5,491.10 L446.0,491.10 L446.5,491.10 L447.0,491.10 L447.5,491.10 L448.0,491.10 L448.5,491.10 L449.0,491.10 L449.5,491.10 L450.0,491.10 L450.5,491.10 L451.0,491.10 L451.5,491.10 L452.0,491.10 L452.5,491.10 L453.0,491.10 L453.5,491.10 L454.0,491.10 L454.5,491.10 L455.0,491.10 L455.5,491.10 L456.0,491.10 L456.5,491.10 L457.0,491.10 L457.5,491.10 L458.0,491.10 L458.5,491.10 L459.0,491.10 L459.5,491.10 L460.0,491.10 L460.5,491.10 L461.0,491.10 L461.5,491.10 L462.0,491.10 L462.5,491.10 L463.0,491.10 L463.5,491.10 L464.0,491.10 L464.5,491.10 L465.0,491.10 L465.5,491.10 L466.0,491.10 L466.5,491.10 L467.0,491.10 L467.5,491.10 L468.0,491.10 L468.5,491.10 L469.0,491.10 L469.5,491.10 L470.0,491.10 L470.5,491.10 L471.0,491.10 L471.5,491.10 L472.0,491.10 L472.5,491.10 L473.0,491.10 L473.5,491.10 L474.0,491.10 L474.5,491.10 L475.0,491.10 L475.5,491.10 L476.0,491.10 L476.5,491.10 L477.0,491.10 L477.5,491.10 L478.0,491.10 L478.5,491.10 L479.0,491.10 L479.5,491.10 L480.0,491.10 L480.5,491.10 L481.0,491.10 L481.5,491.10 L482.0,491.10 L482.5,491.10 L483.0,491.10 L483.5,491.10 L484.0,491.10 L484.5,491.10 L485.0,491.10 L485.5,491.10 L486.0,491.10 L486.5,491.10 L487.0,491.10 L487.5,491.10 L488.0,491.10 L488.5,491.10 L489.0,491.10 L489.5,491.10 L490.0,491.10 L490.5,491.10 L491.0,491.10 L491.5,491.10 L492.0,491.10 L492.5,491.10 L493.0,491.10 L493.5,491.10 L494.0,491.10 L494.5,491.10 L495.0,491.10 L495.5,491.10 L496.0,491.10 L496.5,491.10 L497.0,491.10 L497.5,491.10 L498.0,491.10 L498.5,491.10 L499.0,491.10 L499.5,491.10 L500.0,491.10 L500.5,491.10 L501.0,491.10 L501.5,491.10 L502.0,491.10 L502.5,491.10 L503.0,491.10 L503.5,491.10 L504.0,491.10 L504.5,491.10 L505.0,491.10 L505.5,491.10 L506.0,491.10 L506.5,491.10 L507.0,491.10 L507.5,491.10 L508.0,491.10 L508.5,491.10 L509.0,491.10 L509.5,491.10 L510.0,491.10 L510.5,491.10 L511.0,491.10 L511.5,491.10 L512.0,491.10 L512.5,491.10 L513.0,491.10 L513.5,491.10 L514.0,491.10 L514.5,491.10 L515.0,491.10 L515.5,491.10 L516.0,491.10 L516.5,491.10 L517.0,491.10 L517.5,491.10 L518.0,491.10 L518.5,491.10 L519.0,491.10 L519.5,491.10 L520.0,491.10 L520.5,491.10 L521.0,491.10 L521.5,491.10 L522.0,491.10 L522.5,491.10 L523.0,491.10 L523.5,491.10 L524.0,491.10 L524.5,491.10 L525.0,491.10 L525.5,491.10 L526.0,491.10 L526.5,491.10 L527.0,491.10 L527.5,491.10 L528.0,491.10 L528.5,491.10 L529.0,491.10 L529.5,491.10 L530.0,491.10 L530.5,491.10 L531.0,491.10 L531.5,491.10 L532.0,491.10 L532.5,491.10 L533.0,491.10 L533.5,491.10 L534.0,491.10 L534.5,491.10 L535.0,491.10 L535.5,491.10 L536.0,491.10 L536.5,491.10 L537.0,491.10 L537.5,491.10 L538.0,491.10 L538.5,491.10 L539.0,491.10 L539.5,491.10 L540.0,491.10 L540.5,491.10 L541.0,491.10 L541.5,491.10 L542.0,491.10 L542.5,491.10 L543.0,491.10 L543.5,491.10 L544.0,491.10 L544.5,491.10 L545.0,491.10 L545.5,491.10 L546.0,491.10 L546.5,491.10 L547.0,491.10 L547.5,491.10 L548.0,491.10 L548.5,491.10 L549.0,491.10 L549.5,491.10 L550.0,491.10 L550.5,491.10 L551.0,491.10 L551.5,491.10 L552.0,491.10 L552.5,491.10 L553.0,491.10 L553.5,491.10 L554.0,491.10 L554.5,491.10 L555.0,491.10 L555.5,491.10 L556.0,491.10 L556.5,491.10 L557.0,491.10 L557.5,491.10 L558.0,491.10 L558.5,491.10 L559.0,491.10 L559.5,491.10 L560.0,491.10 L560.5,491.10 L561.0,491.10 L561.5,491.10 L562.0,491.10 L562.5,491.10 L563.0,491.10 L563.5,491.10 L564.0,491.10 L564.5,491.10 L565.0,491.10 L565.5,491.10 L566.0,491.10 L566.5,491.10 L567.0,491.10 L567.5,491.10 L568.0,491.10 L568.5,491.10 L569.0,491.10 L569.5,491.10 L570.0,491.10 L570.5,491.10 L571.0,491.10 L571.5,491.10 L572.0,491.10 L572.5,491.10 L573.0,491.10 L573.5,491.10 L574.0,491.10 L574.5,491.10 L575.0,491.10 L575.5,491.10 L576.0,491.10 L576.5,491.10 L577.0,491.10 L577.5,491.10 L578.0,491.10 L578.5,491.10 L579.0,491.10 L579.5,491.10 L580.0,491.10 L580.5,491.10 L581.0,491.10 L581.5,491.10 L582.0,491.10 L582.5,491.10 L583.0,491.10 L583.5,491.10 L584.0,491.10 L584.5,491.10 L585.0,491.10 L585.5,491.10 L586.0,491.10 L586.5,491.10 L587.0,491.10 L587.5,491.10 L588.0,491.10 L588.5,491.10 L589.0,491.10 L589.5,491.10 L590.0,491.10 L590.5,491.10 L591.0,491.10 L591.5,491.10 L592.0,491.10 L592.5,491.10 L593.0,491.10 L593.5,491.10 L594.0,491.10 L594.5,491.10 L595.0,491.10 L595.5,491.10 L596.0,491.10 L596.5,491.10 L597.0,491.10 L597.5,491.10 L598.0,491.10 L598.5,491.10 L599.0,491.10 L599.5,491.10 L600.0,491.10 L600.5,491.10 L601.0,491.10 L601.5,491.10 L602.0,491.10 L602.5,491.10 L603.0,491.10 L603.5,491.10 L604.0,491.10 L604.5,491.10 L605.0,491.10 L605.5,491.10 L606.0,491.10 L606.5,491.10 L607.0,491.10 L607.5,491.10 L608.0,491.10 L608.5,491.10 L609.0,491.10 L609.5,491.10 L610.0,491.10 L610.5,491.10 L611.0,491.10 L611.5,491.10 L612.0,491.10 L612.5,491.10 L613.0,491.10 L613.5,491.10 L614.0,491.10 L614.5,491.10 L615.0,491.10 L615.5,491.10 L616.0,491.10 L616.5,491.10 L617.0,491.10 L617.5,491.10 L618.0,491.10 L618.5,491.10 L619.0,491.10 L619.5,491.10 L620.0,491.10 L620.5,491.10 L621.0,491.10 L621.5,491.10 L622.0,491.10 L622.5,491.10 L623.0,491.10 L623.5,491.10 L624.0,491.10 L624.5,491.10 L625.0,491.10 L625.5,491.10 L626.0,491.10 L626.5,491.10 L627.0,491.10 L627.5,491.10 L628.0,491.10 L628.5,491.10 L629.0,491.10 L629.5,491.10 L630.0,491.10 L630.5,491.10 L631.0,491.10 L631.5,491.10 L632.0,491.10 L632.5,491.10 L633.0,491.10 L633.5,491.10 L634.0,491.10 L634.5,491.10 L635.0,491.10 L635.5,491.10 L636.0,491.10 L636.5,491.10 L637.0,491.10 L637.5,491.10 L638.0,491.10 L638.5,491.10 L639.0,491.10 L639.5,491.10 L640.0,491.10 L640.5,491.10 L641.0,491.10 L641.5,491.10 L642.0,491.10 L642.5,491.10 L643.0,491.10 L643.5,491.10 L644.0,491.10 L644.5,491.10 L645.0,491.10 L645.5,491.10 L646.0,491.10 L646.5,491.10 L647.0,491.10 L647.5,491.10 L648.0,491.10 L648.5,491.10 L649.0,491.10 L649.5,491.10 L650.0,491.10 L650.5,491.10 L651.0,491.10 L651.5,491.10 L652.0,491.10 L652.5,491.10 L653.0,491.10 L653.5,491.10 L654.0,491.10 L654.5,491.10 L655.0,491.10 L655.5,491.10 L656.0,491.10 L656.5,491.10 L657.0,491.10 L657.5,491.10 L658.0,491.10 L658.5,491.10 L659.0,491.10 L659.5,491.10 L660.0,491.10 L660.5,491.10 L661.0,491.10 L661.5,491.10 L662.0,491.10 L662.5,491.10 L663.0,491.10 L663.5,491.10 L664.0,491.10 L664.5,491.10 L665.0,491.10 L665.5,491.10 L666.0,491.10 L666.5,491.10 L667.0,491.10 L667.5,491.10 L668.0,491.10 L668.5,491.10 L669.0,491.10 L669.5,491.10 L670.0,491.10 L670.5,491.10 L671.0,491.10 L671.5,491.10 L672.0,491.10 L672.5,491.10 L673.0,491.10 L673.5,491.10 L674.0,491.10 L674.5,491.10 L675.0,491.10 L675.5,491.10 L676.0,491.10 L676.5,491.10 L677.0,491.10 L677.5,491.10 L678.0,491.10 L678.5,491.10 L679.0,491.10 L679.5,491.10 L680.0,491.10 L680.5,491.10 L681.0,491.10 L681.5,491.10 L682.0,491.10 L682.5,491.10 L683.0,491.10 L683.5,491.10 L684.0,491.10 L684.5,491.10 L685.0,491.10 L685.5,491.10 L686.0,491.10 L686.5,491.10 L687.0,491.10 L687.5,491.10 L688.0,491.10 L688.5,491.10 L689.0,491.10 L689.5,491.10 L690.0,491.10 L690.5,491.10 L691.0,491.10 L691.5,491.10 L692.0,491.10 L692.5,491.10 L693.0,491.10 L693.5,491.10 L694.0,491.10 L694.5,491.10 L695.0,491.10 L695.5,491.10 L696.0,491.10 L696.5,491.10 L697.0,491.10 L697.5,491.10 L698.0,491.10 L698.5,491.10 L699.0,491.10 L699.5,491.10 L700.0,491.10 L700.5,491.10 L701.0,491.10 L701.5,491.10 L702.0,491.10 L702.5,491.10 L703.0,491.10 L703.5,491.10 L704.0,491.10 L704.5,491.10 L705.0,491.10 L705.5,491.10 L706.0,491.10 L706.5,491.10 L707.0,491.10 L707.5,491.10 L708.0,491.10 L708.5,491.10 L709.0,491.10 L709.5,491.10 L710.0,491.10 L710.5,491.10 L711.0,491.10 L711.5,491.10 L712.0,491.10 L712.5,491.10 L713.0,491.10 L713.5,491.10 L714.0,491.10 L714.5,491.10 L715.0,491.10 L715.5,491.10 L716.0,491.10 L716.5,491.10 L717.0,491.10 L717.5,491.10 L718.0,491.10 L718.5,491.10 L719.0,491.10 L719.5,491.10 L720.0,491.10 L720.5,491.10 L721.0,491.10 L721.5,491.10 L722.0,491.10 L722.5,491.10 L723.0,491.10 L723.5,491.10 L724.0,491.10 L724.5,491.10 L725.0,491.10 L725.5,491.10 L726.0,491.10 L726.5,491.10 L727.0,491.10 L727.5,491.10 L728.0,491.10 L728.5,491.10 L729.0,491.10 L729.5,491.10 L730.0,491.10 L730.5,491.10 L731.0,491.10 L731.5,491.10 L732.0,491.10 L732.5,491.10 L733.0,491.10 L733.5,491.10 L734.0,491.10 L734.5,491.10 L735.0,491.10 L735.5,491.10 L736.0,491.10 L736.5,491.10 L737.0,491.10 L737.5,491.10 L738.0,491.10 L738.5,491.10 L739.0,491.10 L739.5,491.10 L740.0,491.10 L740.5,491.10 L741.0,491.10 L741.5,491.10 L742.0,491.10 L742.5,491.10 L743.0,491.10 L743.5,491.10 L744.0,491.10 L744.5,491.10 L745.0,491.10 L745.5,491.10 L746.0,491.10 L746.5,491.10 L747.0,491.10 L747.5,491.10 L748.0,491.10 L748.5,491.10 L749.0,491.10 L749.5,491.10 L750.0,491.10 L750.5,491.10 L751.0,491.10 L751.5,491.10 L752.0,491.10 L752.5,491.10 L753.0,491.10 L753.5,491.10 L754.0,491.10 L754.5,491.10 L755.0,491.10 L755.5,491.10 L756.0,491.10 L756.5,491.10 L757.0,491.10 L757.5,491.10 L758.0,491.10 L758.5,491.10 L759.0,491.10 L759.5,491.10 L760.0,491.10 L760.5,491.10 L761.0,491.10 L761.5,491.10 L762.0,491.10 L762.5,491.10 L763.0,491.10 L763.5,491.10 L764.0,491.10 L764.5,491.10 L765.0,491.10 L765.5,491.10 L766.0,491.10 L766.5,491.10 L767.0,491.10 L767.5,491.10 L768.0,491.10 L768.5,491.10 L769.0,491.10 L769.5,491.10 L770.0,491.10 L770.5,491.10 L771.0,491.10 L771.5,491.10 L772.0,491.10 L772.5,491.10 L773.0,491.10 L773.5,491.10 L774.0,491.10 L774.5,491.10 L775.0,491.10 L775.5,491.10 L776.0,491.10 L776.5,491.10 L777.0,491.10 L777.5,491.10 L778.0,491.10 L778.5,491.10 L779.0,491.10 L779.5,491.10 L780.0,491.10 L780.5,491.10 L781.0,491.10 L781.5,491.10 L782.0,491.10 L782.5,491.10 L783.0,491.10 L783.5,491.10 L784.0,491.10 L784.5,491.10 L785.0,491.10 L785.5,491.10 L786.0,491.10 L786.5,491.10 L787.0,491.10 L787.5,491.10 L788.0,491.10 L788.5,491.10 L789.0,491.10 L789.5,491.10 L790.0,491.10 L790.5,491.10 L791.0,491.10 L791.5,491.10 L792.0,491.10 L792.5,491.10 L793.0,491.10 L793.5,491.10 L794.0,491.10 L794.5,491.10 L795.0,491.10 L795.5,491.10 L796.0,491.10 L796.5,491.10 L797.0,491.10 L797.5,491.10 L798.0,491.10 L798.5,491.10 L799.0,491.10 L799.5,491.10 L800.0,491.10 L800.5,491.10 L801.0,491.10 L801.5,491.10 L802.0,491.10 L802.5,491.10 L803.0,491.10 L803.5,491.10 L804.0,491.10 L804.5,491.10 L805.0,491.10 L805.5,491.10 L806.0,491.10 L806.5,491.10 L807.0,491.10 L807.5,491.10 L808.0,491.10 L808.5,491.10 L809.0,491.10 L809.5,491.10 L810.0,491.10 L810.5,491.10 L811.0,491.10 L811.5,491.10 L812.0,491.10 L812.5,491.10 L813.0,491.10 L813.5,491.10 L814.0,491.10 L814.5,491.10 L815.0,491.10 L815.5,491.10 L816.0,491.10 L816.5,491.10 L817.0,491.10 L817.5,491.10 L818.0,491.10 L818.5,491.10 L819.0,491.10 L819.5,491.10 L820.0,491.10 L820.5,491.10 L821.0,491.10 L821.5,491.10 L822.0,491.10 L822.5,491.10 L823.0,491.10 L823.5,491.10 L824.0,491.10 L824.5,491.10 L825.0,491.10 L825.5,491.10 L826.0,491.10 L826.5,491.10 L827.0,491.10 L827.5,491.10 L828.0,491.10 L828.5,491.10 L829.0,491.10 L829.5,491.10 L830.0,491.10 L830.5,491.10 L831.0,491.10 L831.5,491.10 L832.0,491.10 L832.5,491.10 L833.0,491.10 L833.5,491.10 L834.0,491.10 L834.5,491.10 L835.0,491.10 L835.5,491.10 L836.0,491.10 L836.5,491.10 L837.0,491.10 L837.5,491.10 L838.0,491.10 L838.5,491.10 L839.0,491.10 L839.5,491.10 L840.0,491.10 L840.5,491.10 L841.0,491.10 L841.5,491.10 L842.0,491.10 L842.5,491.10 L843.0,491.10 L843.5,491.10 L844.0,491.10 L844.5,491.10 L845.0,491.10 L845.5,491.10 L846.0,491.10 L846.5,491.10 L847.0,491.10 L847.5,491.10 L848.0,491.10 L848.5,491.10 L849.0,491.10 L849.5,491.10 L850.0,491.10 L850.5,491.10 L851.0,491.10 L851.5,491.10 L852.0,491.10 L852.5,491.10 L853.0,491.10 L853.5,491.10 L854.0,491.10 L854.5,491.10 L855.0,491.10 L855.5,491.10 L856.0,491.10 L856.5,491.10 L857.0,491.10 L857.5,491.10 L858.0,491.10 L858.5,491.10 L859.0,491.10 L859.5,491.10 L860.0,491.10 L860.5,491.10 L861.0,491.10 L861.5,491.10 L862.0,491.10 L862.5,491.10 L863.0,491.10 L863.5,491.10 L864.0,491.10 L864.5,491.10 L865.0,491.10 L865.5,491.10 L866.0,491.10 L866.5,491.10 L867.0,491.10 L867.5,491.10 L868.0,491.10 L868.5,491.10 L869.0,491.10 L869.5,491.10 L870.0,491.10 L870.5,491.10 L871.0,491.10 L871.5,491.10 L872.0,491.10 L872.5,491.10 L873.0,491.10 L873.5,491.10 L874.0,491.10 L874.5,491.10 L875.0,491.10 L875.5,491.10 L876.0,491.10 L876.5,491.10 L877.0,491.10 L877.5,491.10 L878.0,491.10 L878.5,491.10 L879.0,491.10 L879.5,491.10 L880.0,491.10 L880.5,491.10 L881.0,491.10 L881.5,491.10 L882.0,491.10 L882.5,491.10 L883.0,491.10 L883.5,491.10 L884.0,491.10 L884.5,491.10 L885.0,491.10 L885.5,491.10 L886.0,491.10 L886.5,491.10 L887.0,491.10 L887.5,491.10 L888.0,491.10 L888.5,491.10 L889.0,491.10 L889.5,491.10 L890.0,491.10 L890.5,491.10 L891.0,491.10 L891.5,491.10 L892.0,491.10 L892.5,491.10 L893.0,491.10 L893.5,491.10 L894.0,491.10 L894.5,491.10 L895.0,491.10 L895.5,491.10 L896.0,491.10 L896.5,491.10 L897.0,491.10 L897.5,491.10 L898.0,491.10" fill="none" stroke="#000" stroke-width="2.6" stroke-linejoin="round"/><path d="M0.0,491.10 L0.5,491.10 L1.0,491.10 L1.5,491.10 L2.0,491.10 L2.5,491.10 L3.0,491.10 L3.5,491.10 L4.0,491.10 L4.5,491.10 L5.0,491.10 L5.5,491.10 L6.0,491.10 L6.5,491.10 L7.0,491.10 L7.5,491.10 L8.0,491.10 L8.5,491.10 L9.0,491.10 L9.5,491.10 L10.0,491.10 L10.5,491.10 L11.0,491.10 L11.5,491.10 L12.0,491.10 L12.5,491.10 L13.0,491.10 L13.5,491.10 L14.0,491.10 L14.5,491.10 L15.0,491.10 L15.5,491.10 L16.0,491.10 L16.5,491.10 L17.0,491.10 L17.5,491.10 L18.0,491.10 L18.5,491.10 L19.0,491.10 L19.5,491.10 L20.0,491.10 L20.5,491.10 L21.0,491.10 L21.5,491.10 L22.0,491.10 L22.5,491.10 L23.0,491.10 L23.5,491.10 L24.0,491.10 L24.5,491.10 L25.0,491.10 L25.5,491.10 L26.0,491.10 L26.5,491.10 L27.0,491.10 L27.5,491.10 L28.0,491.10 L28.5,491.10 L29.0,491.10 L29.5,491.10 L30.0,491.10 L30.5,491.10 L31.0,491.10 L31.5,491.10 L32.0,491.10 L32.5,491.10 L33.0,491.10 L33.5,491.10 L34.0,491.10 L34.5,491.10 L35.0,491.10 L35.5,491.10 L36.0,491.10 L36.5,491.10 L37.0,491.10 L37.5,491.10 L38.0,491.10 L38.5,491.10 L39.0,491.10 L39.5,491.10 L40.0,491.10 L40.5,491.10 L41.0,491.10 L41.5,491.10 L42.0,491.10 L42.5,491.10 L43.0,491.10 L43.5,491.10 L44.0,491.10 L44.5,491.10 L45.0,491.10 L45.5,491.10 L46.0,491.10 L46.5,491.10 L47.0,491.10 L47.5,491.10 L48.0,491.10 L48.5,491.10 L49.0,491.10 L49.5,491.10 L50.0,491.10 L50.5,491.10 L51.0,491.10 L51.5,491.10 L52.0,491.10 L52.5,491.10 L53.0,491.10 L53.5,491.10 L54.0,491.10 L54.5,491.10 L55.0,491.10 L55.5,491.10 L56.0,491.10 L56.5,491.10 L57.0,491.10 L57.5,491.10 L58.0,491.10 L58.5,491.10 L59.0,491.10 L59.5,491.10 L60.0,491.10 L60.5,491.10 L61.0,491.10 L61.5,491.10 L62.0,491.10 L62.5,491.10 L63.0,491.10 L63.5,491.10 L64.0,491.10 L64.5,491.10 L65.0,491.10 L65.5,491.10 L66.0,491.10 L66.5,491.10 L67.0,491.10 L67.5,491.10 L68.0,491.10 L68.5,491.10 L69.0,491.10 L69.5,491.10 L70.0,491.10 L70.5,491.10 L71.0,491.10 L71.5,491.10 L72.0,491.10 L72.5,491.10 L73.0,491.10 L73.5,491.10 L74.0,491.10 L74.5,491.10 L75.0,491.10 L75.5,491.10 L76.0,491.10 L76.5,491.10 L77.0,491.10 L77.5,491.10 L78.0,491.10 L78.5,491.10 L79.0,491.10 L79.5,491.10 L80.0,491.10 L80.5,491.10 L81.0,491.10 L81.5,491.10 L82.0,491.10 L82.5,491.10 L83.0,491.10 L83.5,491.10 L84.0,491.10 L84.5,491.10 L85.0,491.10 L85.5,491.10 L86.0,491.10 L86.5,491.10 L87.0,491.10 L87.5,491.10 L88.0,491.10 L88.5,491.10 L89.0,491.10 L89.5,491.10 L90.0,491.10 L90.5,491.10 L91.0,491.10 L91.5,491.10 L92.0,491.10 L92.5,491.10 L93.0,491.10 L93.5,491.10 L94.0,491.10 L94.5,491.10 L95.0,491.10 L95.5,491.10 L96.0,491.10 L96.5,491.10 L97.0,491.10 L97.5,491.10 L98.0,491.10 L98.5,491.10 L99.0,491.10 L99.5,491.10 L100.0,491.10 L100.5,491.10 L101.0,491.10 L101.5,491.10 L102.0,491.10 L102.5,491.10 L103.0,491.10 L103.5,491.10 L104.0,491.10 L104.5,491.10 L105.0,491.10 L105.5,491.10 L106.0,491.10 L106.5,491.10 L107.0,491.10 L107.5,491.10 L108.0,491.10 L108.5,491.10 L109.0,491.10 L109.5,491.10 L110.0,491.10 L110.5,491.10 L111.0,491.10 L111.5,491.10 L112.0,491.10 L112.5,491.10 L113.0,491.10 L113.5,491.10 L114.0,491.10 L114.5,491.10 L115.0,491.10 L115.5,491.10 L116.0,491.10 L116.5,491.10 L117.0,491.10 L117.5,491.10 L118.0,491.10 L118.5,491.10 L119.0,491.10 L119.5,491.10 L120.0,491.10 L120.5,491.10 L121.0,491.10 L121.5,491.10 L122.0,491.10 L122.5,491.10 L123.0,491.10 L123.5,491.10 L124.0,491.10 L124.5,491.10 L125.0,491.09 L125.5,491.09 L126.0,491.09 L126.5,491.09 L127.0,491.08 L127.5,491.08 L128.0,491.07 L128.5,491.07 L129.0,491.05 L129.5,491.04 L130.0,491.02 L130.5,491.00 L131.0,490.98 L131.5,490.94 L132.0,490.90 L132.5,490.85 L133.0,490.78 L133.5,490.70 L134.0,490.60 L134.5,490.48 L135.0,490.33 L135.5,490.15 L136.0,489.93 L136.5,489.66 L137.0,489.34 L137.5,488.95 L138.0,488.49 L138.5,487.94 L139.0,487.29 L139.5,486.52 L140.0,485.61 L140.5,484.55 L141.0,483.31 L141.5,481.87 L142.0,480.20 L142.5,478.28 L143.0,476.08 L143.5,473.56 L144.0,470.68 L144.5,467.43 L145.0,463.75 L145.5,459.62 L146.0,454.99 L146.5,449.83 L147.0,444.10 L147.5,437.78 L148.0,430.81 L148.5,423.18 L149.0,414.86 L149.5,405.83 L150.0,396.07 L150.5,385.58 L151.0,374.34 L151.5,362.38 L152.0,349.69 L152.5,336.32 L153.0,322.28 L153.5,307.63 L154.0,292.43 L154.5,276.74 L155.0,260.63 L155.5,244.20 L156.0,227.54 L156.5,210.77 L157.0,193.99 L157.5,177.33 L158.0,160.91 L158.5,144.87 L159.0,129.34 L159.5,114.46 L160.0,100.36 L160.5,87.16 L161.0,74.98 L161.5,63.96 L162.0,54.18 L162.5,45.75 L163.0,38.74 L163.5,33.23 L164.0,29.26 L164.5,26.87 L165.0,26.08 L165.5,26.89 L166.0,29.28 L166.5,33.22 L167.0,38.66 L167.5,45.54 L168.0,53.77 L168.5,63.26 L169.0,73.91 L169.5,85.61 L170.0,98.24 L170.5,111.67 L171.0,125.77 L171.5,140.41 L172.0,155.45 L172.5,170.78 L173.0,186.26 L173.5,201.78 L174.0,217.22 L174.5,232.48 L175.0,247.46 L175.5,262.08 L176.0,276.26 L176.5,289.93 L177.0,303.04 L177.5,315.55 L178.0,327.42 L178.5,338.62 L179.0,349.15 L179.5,358.99 L180.0,368.14 L180.5,376.62 L181.0,384.44 L181.5,391.61 L182.0,398.17 L182.5,404.13 L183.0,409.54 L183.5,414.41 L184.0,418.80 L184.5,422.72 L185.0,426.22 L185.5,429.33 L186.0,432.09 L186.5,434.52 L187.0,436.66 L187.5,438.53 L188.0,440.17 L188.5,441.61 L189.0,442.85 L189.5,443.94 L190.0,444.88 L190.5,445.70 L191.0,446.41 L191.5,447.02 L192.0,447.56 L192.5,448.02 L193.0,448.43 L193.5,448.79 L194.0,449.10 L194.5,449.39 L195.0,449.64 L195.5,449.86 L196.0,450.07 L196.5,450.26 L197.0,450.43 L197.5,450.60 L198.0,450.75 L198.5,450.90 L199.0,451.04 L199.5,451.17 L200.0,451.30 L200.5,451.43 L201.0,451.56 L201.5,451.68 L202.0,451.80 L202.5,451.93 L203.0,452.05 L203.5,452.17 L204.0,452.28 L204.5,452.40 L205.0,452.52 L205.5,452.64 L206.0,452.76 L206.5,452.87 L207.0,452.99 L207.5,453.11 L208.0,453.22 L208.5,453.34 L209.0,453.46 L209.5,453.57 L210.0,453.69 L210.5,453.81 L211.0,453.93 L211.5,454.04 L212.0,454.16 L212.5,454.28 L213.0,454.39 L213.5,454.51 L214.0,454.63 L214.5,454.74 L215.0,454.86 L215.5,454.98 L216.0,455.09 L216.5,455.21 L217.0,455.33 L217.5,455.44 L218.0,455.56 L218.5,455.68 L219.0,455.79 L219.5,455.91 L220.0,456.03 L220.5,456.14 L221.0,456.26 L221.5,456.38 L222.0,456.50 L222.5,456.61 L223.0,456.73 L223.5,456.85 L224.0,456.96 L224.5,457.08 L225.0,457.20 L225.5,457.31 L226.0,457.43 L226.5,457.55 L227.0,457.66 L227.5,457.78 L228.0,457.90 L228.5,458.01 L229.0,458.13 L229.5,458.25 L230.0,458.36 L230.5,458.48 L231.0,458.60 L231.5,458.71 L232.0,458.83 L232.5,458.95 L233.0,459.06 L233.5,459.18 L234.0,459.30 L234.5,459.42 L235.0,459.53 L235.5,459.65 L236.0,459.77 L236.5,459.88 L237.0,460.00 L237.5,460.12 L238.0,460.23 L238.5,460.35 L239.0,460.47 L239.5,460.58 L240.0,460.70 L240.5,460.82 L241.0,460.93 L241.5,461.05 L242.0,461.17 L242.5,461.28 L243.0,461.40 L243.5,461.52 L244.0,461.63 L244.5,461.75 L245.0,461.87 L245.5,461.99 L246.0,462.10 L246.5,462.22 L247.0,462.34 L247.5,462.45 L248.0,462.57 L248.5,462.69 L249.0,462.80 L249.5,462.92 L250.0,463.04 L250.5,463.15 L251.0,463.27 L251.5,463.39 L252.0,463.50 L252.5,463.62 L253.0,463.74 L253.5,463.85 L254.0,463.97 L254.5,464.09 L255.0,464.20 L255.5,464.32 L256.0,464.44 L256.5,464.55 L257.0,464.67 L257.5,464.79 L258.0,464.90 L258.5,465.02 L259.0,465.14 L259.5,465.25 L260.0,465.37 L260.5,465.49 L261.0,465.60 L261.5,465.72 L262.0,465.84 L262.5,465.95 L263.0,466.07 L263.5,466.18 L264.0,466.30 L264.5,466.42 L265.0,466.53 L265.5,466.65 L266.0,466.76 L266.5,466.88 L267.0,466.99 L267.5,467.11 L268.0,467.22 L268.5,467.33 L269.0,467.45 L269.5,467.56 L270.0,467.67 L270.5,467.78 L271.0,467.89 L271.5,468.00 L272.0,468.11 L272.5,468.21 L273.0,468.32 L273.5,468.42 L274.0,468.52 L274.5,468.62 L275.0,468.72 L275.5,468.81 L276.0,468.91 L276.5,469.00 L277.0,469.08 L277.5,469.16 L278.0,469.24 L278.5,469.31 L279.0,469.38 L279.5,469.45 L280.0,469.50 L280.5,469.55 L281.0,469.60 L281.5,469.63 L282.0,469.66 L282.5,469.68 L283.0,469.69 L283.5,469.68 L284.0,469.67 L284.5,469.64 L285.0,469.60 L285.5,469.55 L286.0,469.48 L286.5,469.39 L287.0,469.29 L287.5,469.16 L288.0,469.02 L288.5,468.85 L289.0,468.67 L289.5,468.46 L290.0,468.22 L290.5,467.96 L291.0,467.66 L291.5,467.34 L292.0,466.99 L292.5,466.61 L293.0,466.20 L293.5,465.75 L294.0,465.27 L294.5,464.75 L295.0,464.19 L295.5,463.59 L296.0,462.96 L296.5,462.28 L297.0,461.57 L297.5,460.81 L298.0,460.02 L298.5,459.18 L299.0,458.30 L299.5,457.38 L300.0,456.42 L300.5,455.42 L301.0,454.38 L301.5,453.30 L302.0,452.18 L302.5,451.03 L303.0,449.84 L303.5,448.62 L304.0,447.37 L304.5,446.10 L305.0,444.80 L305.5,443.47 L306.0,442.13 L306.5,440.78 L307.0,439.41 L307.5,438.03 L308.0,436.65 L308.5,435.27 L309.0,433.89 L309.5,432.53 L310.0,431.17 L310.5,429.84 L311.0,428.52 L311.5,427.24 L312.0,425.99 L312.5,424.78 L313.0,423.61 L313.5,422.48 L314.0,421.41 L314.5,420.40 L315.0,419.44 L315.5,418.56 L316.0,417.74 L316.5,417.00 L317.0,416.33 L317.5,415.74 L318.0,415.24 L318.5,414.82 L319.0,414.50 L319.5,414.26 L320.0,414.12 L320.5,414.07 L321.0,414.11 L321.5,414.25 L322.0,414.49 L322.5,414.82 L323.0,415.25 L323.5,415.77 L324.0,416.38 L324.5,417.08 L325.0,417.87 L325.5,418.75 L326.0,419.70 L326.5,420.74 L327.0,421.85 L327.5,423.04 L328.0,424.29 L328.5,425.61 L329.0,426.98 L329.5,428.41 L330.0,429.89 L330.5,431.42 L331.0,432.98 L331.5,434.58 L332.0,436.21 L332.5,437.86 L333.0,439.54 L333.5,441.23 L334.0,442.92 L334.5,444.63 L335.0,446.33 L335.5,448.03 L336.0,449.72 L336.5,451.40 L337.0,453.06 L337.5,454.71 L338.0,456.33 L338.5,457.92 L339.0,459.48 L339.5,461.01 L340.0,462.51 L340.5,463.97 L341.0,465.39 L341.5,466.76 L342.0,468.10 L342.5,469.39 L343.0,470.64 L343.5,471.84 L344.0,473.00 L344.5,474.11 L345.0,475.18 L345.5,476.20 L346.0,477.17 L346.5,478.09 L347.0,478.98 L347.5,479.81 L348.0,480.61 L348.5,481.36 L349.0,482.07 L349.5,482.74 L350.0,483.37 L350.5,483.97 L351.0,484.52 L351.5,485.05 L352.0,485.53 L352.5,485.99 L353.0,486.41 L353.5,486.81 L354.0,487.18 L354.5,487.52 L355.0,487.83 L355.5,488.13 L356.0,488.40 L356.5,488.64 L357.0,488.87 L357.5,489.08 L358.0,489.28 L358.5,489.45 L359.0,489.62 L359.5,489.76 L360.0,489.90 L360.5,490.02 L361.0,490.13 L361.5,490.23 L362.0,490.33 L362.5,490.41 L363.0,490.48 L363.5,490.55 L364.0,490.61 L364.5,490.67 L365.0,490.72 L365.5,490.76 L366.0,490.80 L366.5,490.83 L367.0,490.87 L367.5,490.89 L368.0,490.92 L368.5,490.94 L369.0,490.96 L369.5,490.98 L370.0,490.99 L370.5,491.01 L371.0,491.02 L371.5,491.03 L372.0,491.04 L372.5,491.05 L373.0,491.05 L373.5,491.06 L374.0,491.07 L374.5,491.07 L375.0,491.07 L375.5,491.08 L376.0,491.08 L376.5,491.08 L377.0,491.09 L377.5,491.09 L378.0,491.09 L378.5,491.09 L379.0,491.09 L379.5,491.09 L380.0,491.09 L380.5,491.10 L381.0,491.10 L381.5,491.10 L382.0,491.10 L382.5,491.10 L383.0,491.10 L383.5,491.10 L384.0,491.10 L384.5,491.10 L385.0,491.10 L385.5,491.10 L386.0,491.10 L386.5,491.10 L387.0,491.10 L387.5,491.10 L388.0,491.10 L388.5,491.10 L389.0,491.10 L389.5,491.10 L390.0,491.10 L390.5,491.10 L391.0,491.10 L391.5,491.10 L392.0,491.10 L392.5,491.10 L393.0,491.10 L393.5,491.10 L394.0,491.10 L394.5,491.10 L395.0,491.10 L395.5,491.10 L396.0,491.10 L396.5,491.10 L397.0,491.10 L397.5,491.10 L398.0,491.10 L398.5,491.10 L399.0,491.10 L399.5,491.10 L400.0,491.10 L400.5,491.10 L401.0,491.10 L401.5,491.10 L402.0,491.10 L402.5,491.10 L403.0,491.10 L403.5,491.10 L404.0,491.10 L404.5,491.10 L405.0,491.10 L405.5,491.10 L406.0,491.10 L406.5,491.10 L407.0,491.10 L407.5,491.10 L408.0,491.10 L408.5,491.10 L409.0,491.10 L409.5,491.10 L410.0,491.10 L410.5,491.10 L411.0,491.10 L411.5,491.10 L412.0,491.10 L412.5,491.10 L413.0,491.10 L413.5,491.10 L414.0,491.10 L414.5,491.10 L415.0,491.10 L415.5,491.10 L416.0,491.10 L416.5,491.10 L417.0,491.10 L417.5,491.10 L418.0,491.10 L418.5,491.10 L419.0,491.10 L419.5,491.10 L420.0,491.10 L420.5,491.10 L421.0,491.10 L421.5,491.10 L422.0,491.10 L422.5,491.10 L423.0,491.10 L423.5,491.10 L424.0,491.10 L424.5,491.10 L425.0,491.10 L425.5,491.10 L426.0,491.10 L426.5,491.10 L427.0,491.10 L427.5,491.10 L428.0,491.10 L428.5,491.10 L429.0,491.10 L429.5,491.10 L430.0,491.10 L430.5,491.10 L431.0,491.10 L431.5,491.10 L432.0,491.10 L432.5,491.10 L433.0,491.10 L433.5,491.10 L434.0,491.10 L434.5,491.10 L435.0,491.10 L435.5,491.10 L436.0,491.10 L436.5,491.10 L437.0,491.10 L437.5,491.10 L438.0,491.10 L438.5,491.10 L439.0,491.10 L439.5,491.10 L440.0,491.10 L440.5,491.10 L441.0,491.10 L441.5,491.10 L442.0,491.10 L442.5,491.10 L443.0,491.10 L443.5,491.10 L444.0,491.10 L444.5,491.10 L445.0,491.10 L445.5,491.10 L446.0,491.10 L446.5,491.10 L447.0,491.10 L447.5,491.10 L448.0,491.10 L448.5,491.10 L449.0,491.10 L449.5,491.10 L450.0,491.10 L450.5,491.10 L451.0,491.10 L451.5,491.10 L452.0,491.10 L452.5,491.10 L453.0,491.10 L453.5,491.10 L454.0,491.10 L454.5,491.10 L455.0,491.10 L455.5,491.10 L456.0,491.10 L456.5,491.10 L457.0,491.10 L457.5,491.10 L458.0,491.10 L458.5,491.10 L459.0,491.10 L459.5,491.10 L460.0,491.10 L460.5,491.10 L461.0,491.10 L461.5,491.10 L462.0,491.10 L462.5,491.10 L463.0,491.10 L463.5,491.10 L464.0,491.10 L464.5,491.10 L465.0,491.10 L465.5,491.10 L466.0,491.10 L466.5,491.10 L467.0,491.10 L467.5,491.10 L468.0,491.10 L468.5,491.10 L469.0,491.10 L469.5,491.10 L470.0,491.10 L470.5,491.10 L471.0,491.10 L471.5,491.10 L472.0,491.10 L472.5,491.10 L473.0,491.10 L473.5,491.10 L474.0,491.10 L474.5,491.10 L475.0,491.10 L475.5,491.10 L476.0,491.10 L476.5,491.10 L477.0,491.10 L477.5,491.10 L478.0,491.10 L478.5,491.10 L479.0,491.10 L479.5,491.10 L480.0,491.10 L480.5,491.10 L481.0,491.10 L481.5,491.10 L482.0,491.10 L482.5,491.10 L483.0,491.10 L483.5,491.10 L484.0,491.10 L484.5,491.10 L485.0,491.10 L485.5,491.10 L486.0,491.10 L486.5,491.10 L487.0,491.10 L487.5,491.10 L488.0,491.10 L488.5,491.10 L489.0,491.10 L489.5,491.10 L490.0,491.10 L490.5,491.10 L491.0,491.10 L491.5,491.10 L492.0,491.10 L492.5,491.10 L493.0,491.10 L493.5,491.10 L494.0,491.10 L494.5,491.10 L495.0,491.10 L495.5,491.10 L496.0,491.10 L496.5,491.10 L497.0,491.10 L497.5,491.10 L498.0,491.10 L498.5,491.10 L499.0,491.10 L499.5,491.10 L500.0,491.10 L500.5,491.10 L501.0,491.10 L501.5,491.10 L502.0,491.10 L502.5,491.10 L503.0,491.10 L503.5,491.10 L504.0,491.10 L504.5,491.10 L505.0,491.10 L505.5,491.10 L506.0,491.10 L506.5,491.10 L507.0,491.10 L507.5,491.10 L508.0,491.10 L508.5,491.10 L509.0,491.10 L509.5,491.10 L510.0,491.10 L510.5,491.10 L511.0,491.10 L511.5,491.10 L512.0,491.10 L512.5,491.10 L513.0,491.10 L513.5,491.10 L514.0,491.10 L514.5,491.10 L515.0,491.10 L515.5,491.10 L516.0,491.10 L516.5,491.10 L517.0,491.10 L517.5,491.10 L518.0,491.10 L518.5,491.10 L519.0,491.10 L519.5,491.10 L520.0,491.10 L520.5,491.10 L521.0,491.10 L521.5,491.10 L522.0,491.10 L522.5,491.10 L523.0,491.10 L523.5,491.10 L524.0,491.10 L524.5,491.10 L525.0,491.10 L525.5,491.10 L526.0,491.10 L526.5,491.10 L527.0,491.10 L527.5,491.10 L528.0,491.10 L528.5,491.10 L529.0,491.10 L529.5,491.10 L530.0,491.10 L530.5,491.10 L531.0,491.10 L531.5,491.10 L532.0,491.10 L532.5,491.10 L533.0,491.10 L533.5,491.10 L534.0,491.10 L534.5,491.10 L535.0,491.10 L535.5,491.10 L536.0,491.10 L536.5,491.10 L537.0,491.10 L537.5,491.10 L538.0,491.10 L538.5,491.10 L539.0,491.10 L539.5,491.10 L540.0,491.10 L540.5,491.10 L541.0,491.10 L541.5,491.10 L542.0,491.10 L542.5,491.10 L543.0,491.10 L543.5,491.10 L544.0,491.10 L544.5,491.10 L545.0,491.10 L545.5,491.10 L546.0,491.10 L546.5,491.10 L547.0,491.10 L547.5,491.10 L548.0,491.10 L548.5,491.10 L549.0,491.10 L549.5,491.10 L550.0,491.10 L550.5,491.10 L551.0,491.10 L551.5,491.10 L552.0,491.10 L552.5,491.10 L553.0,491.10 L553.5,491.10 L554.0,491.10 L554.5,491.10 L555.0,491.10 L555.5,491.10 L556.0,491.10 L556.5,491.10 L557.0,491.10 L557.5,491.10 L558.0,491.10 L558.5,491.10 L559.0,491.10 L559.5,491.10 L560.0,491.10 L560.5,491.10 L561.0,491.10 L561.5,491.10 L562.0,491.10 L562.5,491.10 L563.0,491.10 L563.5,491.10 L564.0,491.10 L564.5,491.10 L565.0,491.10 L565.5,491.10 L566.0,491.10 L566.5,491.10 L567.0,491.10 L567.5,491.10 L568.0,491.10 L568.5,491.10 L569.0,491.10 L569.5,491.10 L570.0,491.10 L570.5,491.10 L571.0,491.10 L571.5,491.10 L572.0,491.10 L572.5,491.10 L573.0,491.10 L573.5,491.10 L574.0,491.10 L574.5,491.10 L575.0,491.10 L575.5,491.10 L576.0,491.10 L576.5,491.10 L577.0,491.10 L577.5,491.10 L578.0,491.10 L578.5,491.10 L579.0,491.10 L579.5,491.10 L580.0,491.10 L580.5,491.10 L581.0,491.10 L581.5,491.10 L582.0,491.10 L582.5,491.10 L583.0,491.10 L583.5,491.10 L584.0,491.10 L584.5,491.10 L585.0,491.10 L585.5,491.10 L586.0,491.10 L586.5,491.10 L587.0,491.10 L587.5,491.10 L588.0,491.10 L588.5,491.10 L589.0,491.10 L589.5,491.10 L590.0,491.10 L590.5,491.10 L591.0,491.10 L591.5,491.10 L592.0,491.10 L592.5,491.10 L593.0,491.10 L593.5,491.10 L594.0,491.10 L594.5,491.10 L595.0,491.10 L595.5,491.10 L596.0,491.10 L596.5,491.10 L597.0,491.10 L597.5,491.10 L598.0,491.10 L598.5,491.10 L599.0,491.10 L599.5,491.10 L600.0,491.10 L600.5,491.10 L601.0,491.10 L601.5,491.10 L602.0,491.10 L602.5,491.10 L603.0,491.10 L603.5,491.10 L604.0,491.10 L604.5,491.10 L605.0,491.10 L605.5,491.10 L606.0,491.10 L606.5,491.10 L607.0,491.10 L607.5,491.10 L608.0,491.10 L608.5,491.10 L609.0,491.10 L609.5,491.10 L610.0,491.10 L610.5,491.10 L611.0,491.10 L611.5,491.10 L612.0,491.10 L612.5,491.10 L613.0,491.10 L613.5,491.10 L614.0,491.10 L614.5,491.10 L615.0,491.10 L615.5,491.10 L616.0,491.10 L616.5,491.10 L617.0,491.10 L617.5,491.10 L618.0,491.10 L618.5,491.10 L619.0,491.10 L619.5,491.10 L620.0,491.10 L620.5,491.10 L621.0,491.10 L621.5,491.10 L622.0,491.10 L622.5,491.10 L623.0,491.10 L623.5,491.10 L624.0,491.10 L624.5,491.10 L625.0,491.10 L625.5,491.10 L626.0,491.10 L626.5,491.10 L627.0,491.10 L627.5,491.10 L628.0,491.10 L628.5,491.10 L629.0,491.10 L629.5,491.10 L630.0,491.10 L630.5,491.10 L631.0,491.10 L631.5,491.10 L632.0,491.10 L632.5,491.10 L633.0,491.10 L633.5,491.10 L634.0,491.10 L634.5,491.10 L635.0,491.10 L635.5,491.10 L636.0,491.10 L636.5,491.10 L637.0,491.10 L637.5,491.10 L638.0,491.10 L638.5,491.10 L639.0,491.10 L639.5,491.10 L640.0,491.10 L640.5,491.10 L641.0,491.10 L641.5,491.10 L642.0,491.10 L642.5,491.10 L643.0,491.10 L643.5,491.10 L644.0,491.10 L644.5,491.10 L645.0,491.10 L645.5,491.10 L646.0,491.10 L646.5,491.10 L647.0,491.10 L647.5,491.10 L648.0,491.10 L648.5,491.10 L649.0,491.10 L649.5,491.10 L650.0,491.10 L650.5,491.10 L651.0,491.10 L651.5,491.10 L652.0,491.10 L652.5,491.10 L653.0,491.10 L653.5,491.10 L654.0,491.10 L654.5,491.10 L655.0,491.10 L655.5,491.10 L656.0,491.10 L656.5,491.10 L657.0,491.10 L657.5,491.10 L658.0,491.10 L658.5,491.10 L659.0,491.10 L659.5,491.10 L660.0,491.10 L660.5,491.10 L661.0,491.10 L661.5,491.10 L662.0,491.10 L662.5,491.10 L663.0,491.10 L663.5,491.10 L664.0,491.10 L664.5,491.10 L665.0,491.10 L665.5,491.10 L666.0,491.10 L666.5,491.10 L667.0,491.10 L667.5,491.10 L668.0,491.10 L668.5,491.10 L669.0,491.10 L669.5,491.10 L670.0,491.10 L670.5,491.10 L671.0,491.10 L671.5,491.10 L672.0,491.10 L672.5,491.10 L673.0,491.10 L673.5,491.10 L674.0,491.10 L674.5,491.10 L675.0,491.10 L675.5,491.10 L676.0,491.10 L676.5,491.10 L677.0,491.10 L677.5,491.10 L678.0,491.10 L678.5,491.10 L679.0,491.10 L679.5,491.10 L680.0,491.10 L680.5,491.10 L681.0,491.10 L681.5,491.10 L682.0,491.10 L682.5,491.10 L683.0,491.10 L683.5,491.10 L684.0,491.10 L684.5,491.10 L685.0,491.10 L685.5,491.10 L686.0,491.10 L686.5,491.10 L687.0,491.10 L687.5,491.10 L688.0,491.10 L688.5,491.10 L689.0,491.10 L689.5,491.10 L690.0,491.10 L690.5,491.10 L691.0,491.10 L691.5,491.10 L692.0,491.10 L692.5,491.10 L693.0,491.10 L693.5,491.10 L694.0,491.10 L694.5,491.10 L695.0,491.10 L695.5,491.10 L696.0,491.10 L696.5,491.10 L697.0,491.10 L697.5,491.10 L698.0,491.10 L698.5,491.10 L699.0,491.10 L699.5,491.10 L700.0,491.10 L700.5,491.10 L701.0,491.10 L701.5,491.10 L702.0,491.10 L702.5,491.10 L703.0,491.10 L703.5,491.10 L704.0,491.10 L704.5,491.10 L705.0,491.10 L705.5,491.10 L706.0,491.10 L706.5,491.10 L707.0,491.10 L707.5,491.10 L708.0,491.10 L708.5,491.10 L709.0,491.10 L709.5,491.10 L710.0,491.10 L710.5,491.10 L711.0,491.10 L711.5,491.10 L712.0,491.10 L712.5,491.10 L713.0,491.10 L713.5,491.10 L714.0,491.10 L714.5,491.10 L715.0,491.10 L715.5,491.10 L716.0,491.10 L716.5,491.10 L717.0,491.10 L717.5,491.10 L718.0,491.10 L718.5,491.10 L719.0,491.10 L719.5,491.10 L720.0,491.10 L720.5,491.10 L721.0,491.10 L721.5,491.10 L722.0,491.10 L722.5,491.10 L723.0,491.10 L723.5,491.10 L724.0,491.10 L724.5,491.10 L725.0,491.10 L725.5,491.10 L726.0,491.10 L726.5,491.10 L727.0,491.10 L727.5,491.10 L728.0,491.10 L728.5,491.10 L729.0,491.10 L729.5,491.10 L730.0,491.10 L730.5,491.10 L731.0,491.10 L731.5,491.10 L732.0,491.10 L732.5,491.10 L733.0,491.10 L733.5,491.10 L734.0,491.10 L734.5,491.10 L735.0,491.10 L735.5,491.10 L736.0,491.10 L736.5,491.10 L737.0,491.10 L737.5,491.10 L738.0,491.10 L738.5,491.10 L739.0,491.10 L739.5,491.10 L740.0,491.10 L740.5,491.10 L741.0,491.10 L741.5,491.10 L742.0,491.10 L742.5,491.10 L743.0,491.10 L743.5,491.10 L744.0,491.10 L744.5,491.10 L745.0,491.10 L745.5,491.10 L746.0,491.10 L746.5,491.10 L747.0,491.10 L747.5,491.10 L748.0,491.10 L748.5,491.10 L749.0,491.10 L749.5,491.10 L750.0,491.10 L750.5,491.10 L751.0,491.10 L751.5,491.10 L752.0,491.10 L752.5,491.10 L753.0,491.10 L753.5,491.10 L754.0,491.10 L754.5,491.10 L755.0,491.10 L755.5,491.10 L756.0,491.10 L756.5,491.10 L757.0,491.10 L757.5,491.10 L758.0,491.10 L758.5,491.10 L759.0,491.10 L759.5,491.10 L760.0,491.10 L760.5,491.10 L761.0,491.10 L761.5,491.10 L762.0,491.10 L762.5,491.10 L763.0,491.10 L763.5,491.10 L764.0,491.10 L764.5,491.10 L765.0,491.10 L765.5,491.10 L766.0,491.10 L766.5,491.10 L767.0,491.10 L767.5,491.10 L768.0,491.10 L768.5,491.10 L769.0,491.10 L769.5,491.10 L770.0,491.10 L770.5,491.10 L771.0,491.10 L771.5,491.10 L772.0,491.10 L772.5,491.10 L773.0,491.10 L773.5,491.10 L774.0,491.10 L774.5,491.10 L775.0,491.10 L775.5,491.10 L776.0,491.10 L776.5,491.10 L777.0,491.10 L777.5,491.10 L778.0,491.10 L778.5,491.10 L779.0,491.10 L779.5,491.10 L780.0,491.10 L780.5,491.10 L781.0,491.10 L781.5,491.10 L782.0,491.10 L782.5,491.10 L783.0,491.10 L783.5,491.10 L784.0,491.10 L784.5,491.10 L785.0,491.10 L785.5,491.10 L786.0,491.10 L786.5,491.10 L787.0,491.10 L787.5,491.10 L788.0,491.10 L788.5,491.10 L789.0,491.10 L789.5,491.10 L790.0,491.10 L790.5,491.10 L791.0,491.10 L791.5,491.10 L792.0,491.10 L792.5,491.10 L793.0,491.10 L793.5,491.10 L794.0,491.10 L794.5,491.10 L795.0,491.10 L795.5,491.10 L796.0,491.10 L796.5,491.10 L797.0,491.10 L797.5,491.10 L798.0,491.10 L798.5,491.10 L799.0,491.10 L799.5,491.10 L800.0,491.10 L800.5,491.10 L801.0,491.10 L801.5,491.10 L802.0,491.10 L802.5,491.10 L803.0,491.10 L803.5,491.10 L804.0,491.10 L804.5,491.10 L805.0,491.10 L805.5,491.10 L806.0,491.10 L806.5,491.10 L807.0,491.10 L807.5,491.10 L808.0,491.10 L808.5,491.10 L809.0,491.10 L809.5,491.10 L810.0,491.10 L810.5,491.10 L811.0,491.10 L811.5,491.10 L812.0,491.10 L812.5,491.10 L813.0,491.10 L813.5,491.10 L814.0,491.10 L814.5,491.10 L815.0,491.10 L815.5,491.10 L816.0,491.10 L816.5,491.10 L817.0,491.10 L817.5,491.10 L818.0,491.10 L818.5,491.10 L819.0,491.10 L819.5,491.10 L820.0,491.10 L820.5,491.10 L821.0,491.10 L821.5,491.10 L822.0,491.10 L822.5,491.10 L823.0,491.10 L823.5,491.10 L824.0,491.10 L824.5,491.10 L825.0,491.10 L825.5,491.10 L826.0,491.10 L826.5,491.10 L827.0,491.10 L827.5,491.10 L828.0,491.10 L828.5,491.10 L829.0,491.10 L829.5,491.10 L830.0,491.10 L830.5,491.10 L831.0,491.10 L831.5,491.10 L832.0,491.10 L832.5,491.10 L833.0,491.10 L833.5,491.10 L834.0,491.10 L834.5,491.10 L835.0,491.10 L835.5,491.10 L836.0,491.10 L836.5,491.10 L837.0,491.10 L837.5,491.10 L838.0,491.10 L838.5,491.10 L839.0,491.10 L839.5,491.10 L840.0,491.10 L840.5,491.10 L841.0,491.10 L841.5,491.10 L842.0,491.10 L842.5,491.10 L843.0,491.10 L843.5,491.10 L844.0,491.10 L844.5,491.10 L845.0,491.10 L845.5,491.10 L846.0,491.10 L846.5,491.10 L847.0,491.10 L847.5,491.10 L848.0,491.10 L848.5,491.10 L849.0,491.10 L849.5,491.10 L850.0,491.10 L850.5,491.10 L851.0,491.10 L851.5,491.10 L852.0,491.10 L852.5,491.10 L853.0,491.10 L853.5,491.10 L854.0,491.10 L854.5,491.10 L855.0,491.10 L855.5,491.10 L856.0,491.10 L856.5,491.10 L857.0,491.10 L857.5,491.10 L858.0,491.10 L858.5,491.10 L859.0,491.10 L859.5,491.10 L860.0,491.10 L860.5,491.10 L861.0,491.10 L861.5,491.10 L862.0,491.10 L862.5,491.10 L863.0,491.10 L863.5,491.10 L864.0,491.10 L864.5,491.10 L865.0,491.10 L865.5,491.10 L866.0,491.10 L866.5,491.10 L867.0,491.10 L867.5,491.10 L868.0,491.10 L868.5,491.10 L869.0,491.10 L869.5,491.10 L870.0,491.10 L870.5,491.10 L871.0,491.10 L871.5,491.10 L872.0,491.10 L872.5,491.10 L873.0,491.10 L873.5,491.10 L874.0,491.10 L874.5,491.10 L875.0,491.10 L875.5,491.10 L876.0,491.10 L876.5,491.10 L877.0,491.10 L877.5,491.10 L878.0,491.10 L878.5,491.10 L879.0,491.10 L879.5,491.10 L880.0,491.10 L880.5,491.10 L881.0,491.10 L881.5,491.10 L882.0,491.10 L882.5,491.10 L883.0,491.10 L883.5,491.10 L884.0,491.10 L884.5,491.10 L885.0,491.10 L885.5,491.10 L886.0,491.10 L886.5,491.10 L887.0,491.10 L887.5,491.10 L888.0,491.10 L888.5,491.10 L889.0,491.10 L889.5,491.10 L890.0,491.10 L890.5,491.10 L891.0,491.10 L891.5,491.10 L892.0,491.10 L892.5,491.10 L893.0,491.10 L893.5,491.10 L894.0,491.10 L894.5,491.10 L895.0,491.10 L895.5,491.10 L896.0,491.10 L896.5,491.10 L897.0,491.10 L897.5,491.10 L898.0,491.10" fill="none" stroke="#f010f0" stroke-width="2.2" stroke-linejoin="round"/><rect x="0.5" y="0.5" width="897.1" height="490.6" fill="none" stroke="#111" stroke-width="1.5"/></svg><svg style="left:0px;top:0px;pointer-events:none;" width="1920" height="700" viewBox="0 0 1920 700"><line x1="728" y1="653.40" x2="740" y2="653.40" stroke="#111" stroke-width="2.8"/><line x1="733.5" y1="626.82" x2="740" y2="626.82" stroke="#111" stroke-width="1.5"/><line x1="733.5" y1="600.25" x2="740" y2="600.25" stroke="#111" stroke-width="1.5"/><line x1="733.5" y1="573.67" x2="740" y2="573.67" stroke="#111" stroke-width="1.5"/><line x1="728" y1="547.10" x2="740" y2="547.10" stroke="#111" stroke-width="2.8"/><line x1="733.5" y1="520.52" x2="740" y2="520.52" stroke="#111" stroke-width="1.5"/><line x1="733.5" y1="493.95" x2="740" y2="493.95" stroke="#111" stroke-width="1.5"/><line x1="733.5" y1="467.38" x2="740" y2="467.38" stroke="#111" stroke-width="1.5"/><line x1="728" y1="440.80" x2="740" y2="440.80" stroke="#111" stroke-width="2.8"/><line x1="733.5" y1="414.23" x2="740" y2="414.23" stroke="#111" stroke-width="1.5"/><line x1="733.5" y1="387.65" x2="740" y2="387.65" stroke="#111" stroke-width="1.5"/><line x1="733.5" y1="361.07" x2="740" y2="361.07" stroke="#111" stroke-width="1.5"/><line x1="728" y1="334.50" x2="740" y2="334.50" stroke="#111" stroke-width="2.8"/><line x1="733.5" y1="307.93" x2="740" y2="307.93" stroke="#111" stroke-width="1.5"/><line x1="733.5" y1="281.35" x2="740" y2="281.35" stroke="#111" stroke-width="1.5"/><line x1="733.5" y1="254.77" x2="740" y2="254.77" stroke="#111" stroke-width="1.5"/><line x1="728" y1="228.20" x2="740" y2="228.20" stroke="#111" stroke-width="2.8"/><line x1="733.5" y1="201.62" x2="740" y2="201.62" stroke="#111" stroke-width="1.5"/><line x1="733.5" y1="175.05" x2="740" y2="175.05" stroke="#111" stroke-width="1.5"/><line x1="728" y1="653.40" x2="1637.0" y2="653.40" stroke="#111" stroke-width="2.4"/><line x1="738.90" y1="653.4" x2="738.90" y2="663.6" stroke="#111" stroke-width="2.6"/><line x1="773.12" y1="653.4" x2="773.12" y2="660" stroke="#111" stroke-width="1.5"/><line x1="807.34" y1="653.4" x2="807.34" y2="660" stroke="#111" stroke-width="1.5"/><line x1="841.56" y1="653.4" x2="841.56" y2="660" stroke="#111" stroke-width="1.5"/><line x1="875.78" y1="653.4" x2="875.78" y2="660" stroke="#111" stroke-width="1.5"/><line x1="910.00" y1="653.4" x2="910.00" y2="663.6" stroke="#111" stroke-width="2.6"/><line x1="944.22" y1="653.4" x2="944.22" y2="660" stroke="#111" stroke-width="1.5"/><line x1="978.44" y1="653.4" x2="978.44" y2="660" stroke="#111" stroke-width="1.5"/><line x1="1012.66" y1="653.4" x2="1012.66" y2="660" stroke="#111" stroke-width="1.5"/><line x1="1046.88" y1="653.4" x2="1046.88" y2="660" stroke="#111" stroke-width="1.5"/><line x1="1081.10" y1="653.4" x2="1081.10" y2="663.6" stroke="#111" stroke-width="2.6"/><line x1="1115.32" y1="653.4" x2="1115.32" y2="660" stroke="#111" stroke-width="1.5"/><line x1="1149.54" y1="653.4" x2="1149.54" y2="660" stroke="#111" stroke-width="1.5"/><line x1="1183.76" y1="653.4" x2="1183.76" y2="660" stroke="#111" stroke-width="1.5"/><line x1="1217.98" y1="653.4" x2="1217.98" y2="660" stroke="#111" stroke-width="1.5"/><line x1="1252.20" y1="653.4" x2="1252.20" y2="663.6" stroke="#111" stroke-width="2.6"/><line x1="1286.42" y1="653.4" x2="1286.42" y2="660" stroke="#111" stroke-width="1.5"/><line x1="1320.64" y1="653.4" x2="1320.64" y2="660" stroke="#111" stroke-width="1.5"/><line x1="1354.86" y1="653.4" x2="1354.86" y2="660" stroke="#111" stroke-width="1.5"/><line x1="1389.08" y1="653.4" x2="1389.08" y2="660" stroke="#111" stroke-width="1.5"/><line x1="1423.30" y1="653.4" x2="1423.30" y2="663.6" stroke="#111" stroke-width="2.6"/><line x1="1457.52" y1="653.4" x2="1457.52" y2="660" stroke="#111" stroke-width="1.5"/><line x1="1491.74" y1="653.4" x2="1491.74" y2="660" stroke="#111" stroke-width="1.5"/><line x1="1525.96" y1="653.4" x2="1525.96" y2="660" stroke="#111" stroke-width="1.5"/><line x1="1560.18" y1="653.4" x2="1560.18" y2="660" stroke="#111" stroke-width="1.5"/><line x1="1594.40" y1="653.4" x2="1594.40" y2="663.6" stroke="#111" stroke-width="2.6"/><line x1="1628.62" y1="653.4" x2="1628.62" y2="660" stroke="#111" stroke-width="1.5"/></svg><div class="t" style="top:639.48px;font-size:15.5px;line-height:15.5px;color:#1a1a1a;letter-spacing:0.1px;right:1199.50px;">0</div><div class="t" style="top:542.48px;font-size:15.5px;line-height:15.5px;color:#1a1a1a;letter-spacing:0.1px;right:1199.50px;">200</div><div class="t" style="top:435.78px;font-size:15.5px;line-height:15.5px;color:#1a1a1a;letter-spacing:0.1px;right:1199.50px;">400</div><div class="t" style="top:329.18px;font-size:15.5px;line-height:15.5px;color:#1a1a1a;letter-spacing:0.1px;right:1199.50px;">600</div><div class="t" style="top:222.48px;font-size:15.5px;line-height:15.5px;color:#1a1a1a;letter-spacing:0.1px;right:1199.50px;">800</div><div class="t" style="top:671.88px;font-size:15.5px;line-height:15.5px;color:#1a1a1a;letter-spacing:0.1px;left:701.40px;width:80px;text-align:center;">0</div><div class="t" style="top:671.88px;font-size:15.5px;line-height:15.5px;color:#1a1a1a;letter-spacing:0.1px;left:870.00px;width:80px;text-align:center;">50K</div><div class="t" style="top:671.88px;font-size:15.5px;line-height:15.5px;color:#1a1a1a;letter-spacing:0.1px;left:1041.10px;width:80px;text-align:center;">100K</div><div class="t" style="top:671.88px;font-size:15.5px;line-height:15.5px;color:#1a1a1a;letter-spacing:0.1px;left:1212.20px;width:80px;text-align:center;">150K</div><div class="t" style="top:671.88px;font-size:15.5px;line-height:15.5px;color:#1a1a1a;letter-spacing:0.1px;left:1383.30px;width:80px;text-align:center;">200K</div><div class="t" style="top:671.88px;font-size:15.5px;line-height:15.5px;color:#1a1a1a;letter-spacing:0.1px;left:1554.40px;width:80px;text-align:center;">250K</div><div style="left:1011px;top:708px;width:329px;height:31px;border:1px solid #6a6a6a;background:#c0c0c0;box-shadow:inset 1px 1px 0 #e4e4e4, inset -1px -1px 0 #e4e4e4;"></div><div style="left:1016px;top:715px;width:18px;height:17px;background:#ffffff;"></div><div class="t" style="top:718.73px;font-size:14.5px;line-height:14.5px;color:#111;letter-spacing:0.366px;left:1150.50px;">DAPI-A</div><svg style="left:1310px;top:719px;" width="15" height="13" viewBox="0 0 15 13"><polygon points="0.5,0.5 14.5,0.5 7.5,12.5" fill="#111"/></svg><div style="left:1626px;top:708px;width:49px;height:31px;border:1px solid #a0a0a0;border-radius:4px;background:linear-gradient(180deg,#fdfdfd,#eaeaea);box-shadow:0 1px 1px rgba(0,0,0,0.2);"></div><div class="t" style="top:717.23px;font-size:14.5px;line-height:14.5px;color:#111;letter-spacing:0.288px;left:1632.50px;">Reset</div><div style="left:675px;top:753px;width:1002px;height:1px;background:#a8a8a8;"></div><div style="left:675px;top:754px;width:1002px;height:1px;background:#fafafa;"></div><div style="left:675px;top:804px;width:1002px;height:1px;background:#a8a8a8;"></div><div style="left:675px;top:805px;width:1002px;height:1px;background:#fafafa;"></div><div class="t" style="top:760.13px;font-size:14.5px;line-height:14.5px;color:#1a1a1a;font-weight:700;letter-spacing:0.861px;left:678.40px;">Model</div><div class="t" style="top:760.13px;font-size:14.5px;line-height:14.5px;color:#1a1a1a;font-weight:700;letter-spacing:0.284px;left:839.40px;">Root Me...</div><div class="t" style="top:760.13px;font-size:14.5px;line-height:14.5px;color:#1a1a1a;font-weight:700;letter-spacing:0.664px;left:922.50px;">%G1</div><div class="t" style="top:760.13px;font-size:14.5px;line-height:14.5px;color:#1a1a1a;font-weight:700;letter-spacing:-0.393px;left:1007.00px;">%S</div><div class="t" style="top:760.13px;font-size:14.5px;line-height:14.5px;color:#1a1a1a;font-weight:700;letter-spacing:0.664px;left:1091.50px;">%G2</div><div class="t" style="top:760.13px;font-size:14.5px;line-height:14.5px;color:#1a1a1a;font-weight:700;letter-spacing:0.87px;left:1175.20px;">G1 Mean</div><div class="t" style="top:760.13px;font-size:14.5px;line-height:14.5px;color:#1a1a1a;font-weight:700;letter-spacing:0.97px;left:1258.80px;">G2 Mean</div><div class="t" style="top:760.13px;font-size:14.5px;line-height:14.5px;color:#1a1a1a;font-weight:700;letter-spacing:0.539px;left:1343.00px;">G1 CV</div><div class="t" style="top:760.13px;font-size:14.5px;line-height:14.5px;color:#1a1a1a;font-weight:700;letter-spacing:0.539px;left:1427.00px;">G2 CV</div><div class="t" style="top:760.13px;font-size:14.5px;line-height:14.5px;color:#1a1a1a;font-weight:700;letter-spacing:0.281px;left:1510.50px;">% &lt; G1</div><div class="t" style="top:760.13px;font-size:14.5px;line-height:14.5px;color:#1a1a1a;font-weight:700;letter-spacing:0.581px;left:1596.00px;">% &gt; G2</div><div class="t" style="top:783.73px;font-size:14.5px;line-height:14.5px;color:#1a1a1a;font-weight:700;letter-spacing:0.282px;left:678.40px;">Dean-Jett-Fox</div><div class="t" style="top:783.73px;font-size:14.5px;line-height:14.5px;color:#1a1a1a;letter-spacing:0.948px;left:838.40px;">1,88</div><div class="t" style="top:783.73px;font-size:14.5px;line-height:14.5px;color:#1a1a1a;letter-spacing:1.114px;left:922.50px;">48,9</div><div class="t" style="top:783.73px;font-size:14.5px;line-height:14.5px;color:#1a1a1a;letter-spacing:0.614px;left:1007.00px;">33,6</div><div class="t" style="top:783.73px;font-size:14.5px;line-height:14.5px;color:#1a1a1a;letter-spacing:0.948px;left:1090.50px;">17,0</div><div class="t" style="top:783.73px;font-size:14.5px;line-height:14.5px;color:#1a1a1a;letter-spacing:0.936px;left:1175.20px;">47849</div><div class="t" style="top:783.73px;font-size:14.5px;line-height:14.5px;color:#1a1a1a;letter-spacing:0.686px;left:1258.80px;">94021</div><div class="t" style="top:783.73px;font-size:14.5px;line-height:14.5px;color:#1a1a1a;letter-spacing:0.614px;left:1343.00px;">5,67</div><div class="t" style="top:783.73px;font-size:14.5px;line-height:14.5px;color:#1a1a1a;letter-spacing:0.614px;left:1427.00px;">6,34</div><div class="t" style="top:783.73px;font-size:14.5px;line-height:14.5px;color:#1a1a1a;letter-spacing:0.754px;left:1510.50px;">-1,26</div><div class="t" style="top:783.73px;font-size:14.5px;line-height:14.5px;color:#1a1a1a;letter-spacing:0.754px;left:1596.00px;">-0,32</div><div style="left:675px;top:820px;width:1002px;height:198px;border:1px solid #8c8c8c;border-radius:3px 3px 0 0;background:#f0f0f0;"></div><div style="left:676px;top:821px;width:1000px;height:27px;background:linear-gradient(180deg,#f6f6f6 0%,#e4e4e4 40%,#f0f3f3 100%);border-radius:3px 3px 0 0;"></div><div style="left:676px;top:847px;width:1000px;height:1px;background:#a8bcc4;"></div><div class="t" style="top:827.93px;font-size:14.5px;line-height:14.5px;color:#1a1a1a;font-weight:700;letter-spacing:0.836px;left:691.80px;">Model</div><svg style="left:1645px;top:826px;" width="15" height="15" viewBox="0 0 15 15"><path d="M2 7 L7.5 2 L13 7 M2 13 L7.5 8 L13 13" fill="none" stroke="#444" stroke-width="1.6"/></svg><div style="left:695px;top:873px;width:371px;height:124px;border:1px solid #d4d4d4;box-shadow:inset 1px 1px 0 #fbfbfb;"></div><div style="left:702px;top:871px;width:50px;height:5px;background:#f0f0f0;"></div><div class="t" style="top:867.73px;font-size:14.5px;line-height:14.5px;color:#1e1e1e;letter-spacing:1.432px;left:704.00px;">Model</div><div style="left:1073px;top:873px;width:398px;height:124px;border:1px solid #d4d4d4;box-shadow:inset 1px 1px 0 #fbfbfb;"></div><div style="left:1080.6px;top:871px;width:46px;height:5px;background:#f0f0f0;"></div><div class="t" style="top:867.73px;font-size:14.5px;line-height:14.5px;color:#1e1e1e;letter-spacing:0.341px;left:1083.60px;">Gates</div><div style="left:1478px;top:873px;width:178px;height:124px;border:1px solid #d4d4d4;box-shadow:inset 1px 1px 0 #fbfbfb;"></div><div style="left:1485.5px;top:871px;width:48px;height:5px;background:#f0f0f0;"></div><div class="t" style="top:867.73px;font-size:14.5px;line-height:14.5px;color:#1e1e1e;letter-spacing:0.316px;left:1488.50px;">Graph</div><svg style="left:706px;top:895px;" width="20" height="20" viewBox="0 0 20 20"><circle cx="10" cy="10" r="9" fill="#fff" stroke="#333" stroke-width="1.6"/></svg><div class="t" style="top:898.23px;font-size:14.5px;line-height:14.5px;color:#1e1e1e;letter-spacing:0.644px;left:732.00px;">Watson (Pragmatic)</div><svg style="left:706px;top:929.3px;" width="20" height="20" viewBox="0 0 20 20"><circle cx="10" cy="10" r="9" fill="#fff" stroke="#333" stroke-width="1.6"/><circle cx="10" cy="10" r="4.6" fill="#222"/></svg><div class="t" style="top:932.73px;font-size:14.5px;line-height:14.5px;color:#1e1e1e;letter-spacing:0.449px;left:731.00px;">Dean-Jett-Fox</div><div style="left:732px;top:929px;width:98px;height:21px;border:1px dotted #222;"></div><svg style="left:744px;top:964.5px;" width="20" height="20" viewBox="0 0 20 20"><rect x="1" y="1" width="17.5" height="17.5" fill="#fff" stroke="#333" stroke-width="1.8"/></svg><div class="t" style="top:967.73px;font-size:14.5px;line-height:14.5px;color:#1e1e1e;letter-spacing:0.276px;left:770.30px;">w/ sync. peak</div><svg style="left:1084.5px;top:895.8px;" width="20" height="20" viewBox="0 0 20 20"><rect x="1" y="1" width="17.5" height="17.5" fill="#fff" stroke="#333" stroke-width="1.8"/></svg><div class="t" style="top:898.13px;font-size:14.5px;line-height:14.5px;color:#1e1e1e;letter-spacing:0.34px;left:1110.30px;">CC Gates in Workspace</div><svg style="left:1489.5px;top:895.4px;" width="20" height="20" viewBox="0 0 20 20"><rect x="1" y="1" width="17.5" height="17.5" fill="#fff" stroke="#333" stroke-width="1.8"/><path d="M4 9.5 L8 14 L16 4.5" fill="none" stroke="#333" stroke-width="1.8"/></svg><div class="t" style="top:898.13px;font-size:14.5px;line-height:14.5px;color:#1e1e1e;letter-spacing:0.775px;left:1514.40px;">Draw Model Sum</div><svg style="left:1489.5px;top:930.0px;" width="20" height="20" viewBox="0 0 20 20"><rect x="1" y="1" width="17.5" height="17.5" fill="#fff" stroke="#333" stroke-width="1.8"/><path d="M4 9.5 L8 14 L16 4.5" fill="none" stroke="#333" stroke-width="1.8"/></svg><div class="t" style="top:932.73px;font-size:14.5px;line-height:14.5px;color:#1e1e1e;letter-spacing:0.577px;left:1514.40px;">Draw Components</div><svg style="left:1489.5px;top:964.6px;" width="20" height="20" viewBox="0 0 20 20"><rect x="1" y="1" width="17.5" height="17.5" fill="#fff" stroke="#333" stroke-width="1.8"/><path d="M4 9.5 L8 14 L16 4.5" fill="none" stroke="#333" stroke-width="1.8"/></svg><div class="t" style="top:967.33px;font-size:14.5px;line-height:14.5px;color:#1e1e1e;letter-spacing:0.792px;left:1514.40px;">Fill Components</div><div style="left:675px;top:1020px;width:1002px;height:30px;border:1px solid #9a9a9a;border-radius:3px;background:linear-gradient(180deg,#f6f6f6 0%,#e4e4e4 40%,#f0f3f3 100%);"></div><div style="left:676px;top:1048px;width:1000px;height:1px;background:#a8bcc4;"></div><div class="t" style="top:1028.43px;font-size:14.5px;line-height:14.5px;color:#1a1a1a;font-weight:700;letter-spacing:0.17px;left:692.40px;">Constraints</div><svg style="left:1645px;top:1027px;" width="15" height="15" viewBox="0 0 15 15"><path d="M2 2 L7.5 7 L13 2 M2 8 L7.5 13 L13 8" fill="none" stroke="#444" stroke-width="1.6"/></svg>
</body></html>
